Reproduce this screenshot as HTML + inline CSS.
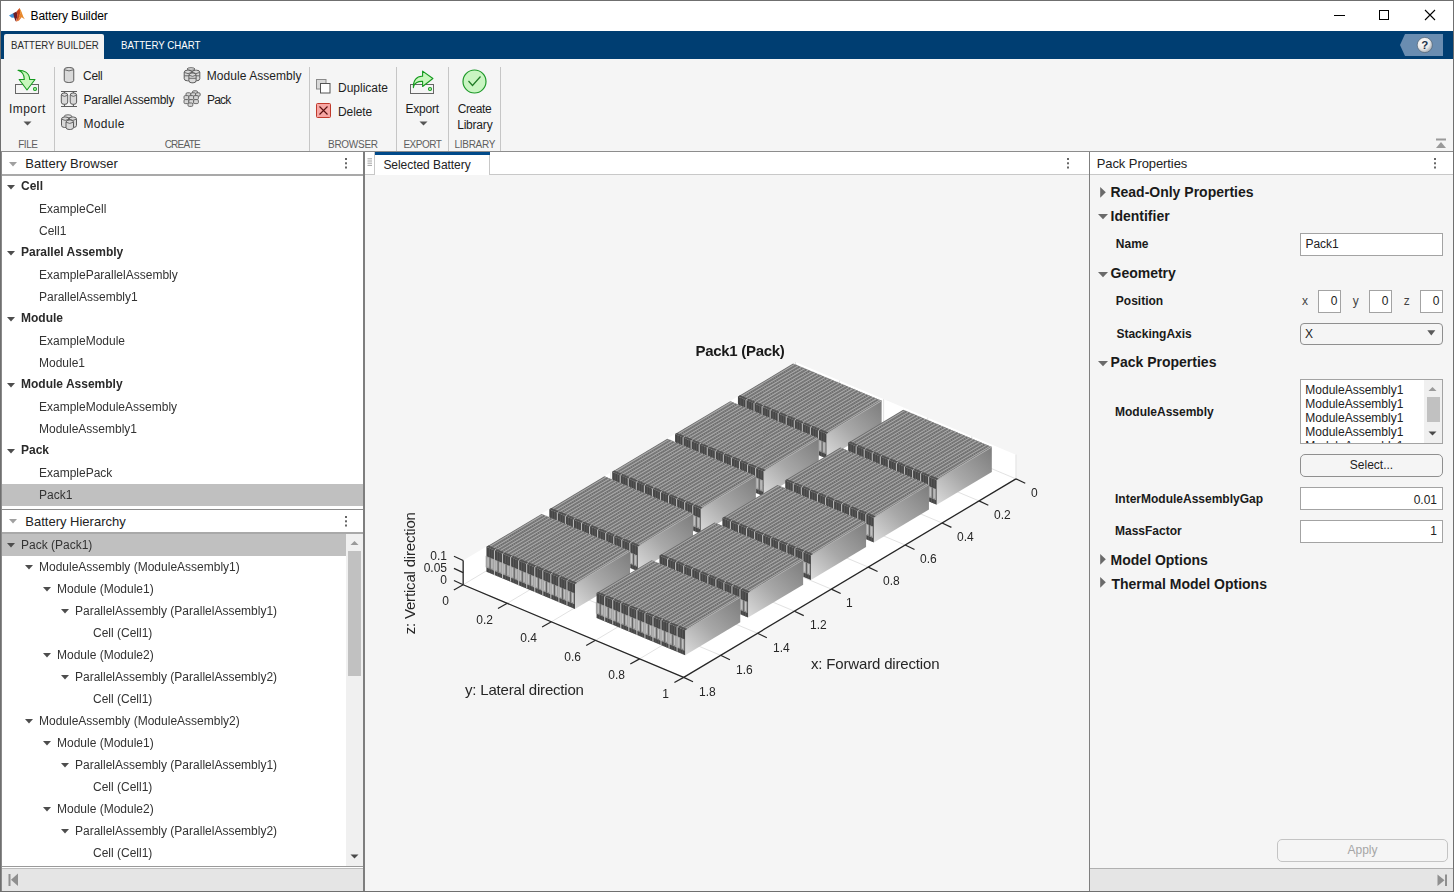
<!DOCTYPE html><html><head><meta charset="utf-8"><style>
html,body{margin:0;padding:0;}
body{width:1454px;height:892px;position:relative;overflow:hidden;background:#fff;font-family:"Liberation Sans", sans-serif;}
.t{position:absolute;white-space:nowrap;font-family:"Liberation Sans", sans-serif;}
svg{overflow:visible}
</style></head><body><div style="position:absolute;left:0px;top:0px;width:1454px;height:31px;background:#ffffff;"></div>
<svg style="position:absolute;left:8px;top:7px;" width="18" height="16" viewBox="0 0 18 16">
<polygon points="1,8.6 5.2,6.2 8.8,8.2 7.2,10.6 3.8,10.8" fill="#3d8fd6"/>
<polygon points="5.2,6.2 8.6,4.4 9.6,9 7.6,14.6 6.2,10.4" fill="#6a1f2a"/>
<polygon points="8.6,4.4 11.6,1 13.4,7.5 10.5,12 8,14.8 9.4,8.5" fill="#c8431c"/>
<polygon points="11.6,1 13.6,5 15.2,9.5 16.8,12.2 13.6,10.2 10.6,12.6 12.6,7.2" fill="#e88a2c"/>
<polygon points="11.6,1 12.8,6.5 10.4,12.3 12.2,5.5" fill="#f4b04a"/>
<polygon points="8,14.8 10.5,12 13.6,10.2 11,13.5" fill="#e06a22"/>
</svg>
<div class="t" style="left:30.5px;top:9.64px;font-size:12px;line-height:12px;font-weight:normal;color:#000;letter-spacing:-0.1px;">Battery Builder</div>
<div style="position:absolute;left:1334px;top:15px;width:11px;height:1px;background:#000;"></div>
<div style="position:absolute;left:1379px;top:10px;width:10px;height:10px;background:transparent;border:1px solid #000;box-sizing:border-box;"></div>
<svg style="position:absolute;left:1424px;top:9px;" width="12" height="12" viewBox="0 0 12 12"><path d="M1,1 L11,11 M11,1 L1,11" stroke="#000" stroke-width="1.1"/></svg>
<div style="position:absolute;left:0px;top:31px;width:1454px;height:28px;background:#003e72;"></div>
<div style="position:absolute;left:4px;top:34px;width:100px;height:25px;background:#f4f4f4;border-radius:2px 2px 0 0;"></div>
<div class="t" style="left:10.9px;top:40.09px;font-size:11px;line-height:11px;font-weight:normal;color:#2b2b2b;transform:scaleX(0.876);transform-origin:0 0;">BATTERY BUILDER</div>
<div class="t" style="left:121px;top:40.09px;font-size:11px;line-height:11px;font-weight:normal;color:#ffffff;transform:scaleX(0.881);transform-origin:0 0;">BATTERY CHART</div>
<svg style="position:absolute;left:1400px;top:34px;" width="44" height="22" viewBox="0 0 44 22"><polygon points="0,11 5,0 43,0 43,22 5,22" fill="#6a8db1"/>
<defs><radialGradient id="hg" cx="0.4" cy="0.35" r="0.7"><stop offset="0" stop-color="#ffffff"/><stop offset="0.6" stop-color="#e8e8e8"/><stop offset="1" stop-color="#9aa3ad"/></radialGradient></defs>
<circle cx="24.8" cy="11" r="7.6" fill="url(#hg)" stroke="#4a5a6a" stroke-width="0.6"/>
<text x="24.8" y="15.2" text-anchor="middle" font-family="Liberation Sans" font-weight="bold" font-size="11.5" fill="#24334a">?</text></svg>
<div style="position:absolute;left:0px;top:59px;width:1454px;height:92px;background:#f5f5f5;"></div>
<div style="position:absolute;left:0px;top:151px;width:1454px;height:1px;background:#8c8c8c;"></div>
<div style="position:absolute;left:54px;top:67px;width:1px;height:84px;background:#c6c6c6;"></div>
<div style="position:absolute;left:309px;top:67px;width:1px;height:84px;background:#c6c6c6;"></div>
<div style="position:absolute;left:396px;top:67px;width:1px;height:84px;background:#c6c6c6;"></div>
<div style="position:absolute;left:448px;top:67px;width:1px;height:84px;background:#c6c6c6;"></div>
<div style="position:absolute;left:500px;top:67px;width:1px;height:84px;background:#c6c6c6;"></div>
<div class="t" style="left:-172.2px;width:400px;text-align:center;top:139.94px;font-size:10px;line-height:10px;font-weight:normal;color:#5e5e5e;letter-spacing:-0.5px;">FILE</div>
<div class="t" style="left:-17.69999999999999px;width:400px;text-align:center;top:139.94px;font-size:10px;line-height:10px;font-weight:normal;color:#5e5e5e;letter-spacing:-0.75px;">CREATE</div>
<div class="t" style="left:152.89999999999998px;width:400px;text-align:center;top:139.94px;font-size:10px;line-height:10px;font-weight:normal;color:#5e5e5e;letter-spacing:-0.27px;">BROWSER</div>
<div class="t" style="left:222.39999999999998px;width:400px;text-align:center;top:139.94px;font-size:10px;line-height:10px;font-weight:normal;color:#5e5e5e;letter-spacing:-0.5px;">EXPORT</div>
<div class="t" style="left:274.8px;width:400px;text-align:center;top:139.94px;font-size:10px;line-height:10px;font-weight:normal;color:#5e5e5e;letter-spacing:-0.32px;">LIBRARY</div>
<svg style="position:absolute;left:14px;top:69px;" width="26" height="26" viewBox="0 0 26 26"><rect x="1.5" y="15.5" width="23" height="9" fill="#f5f5f5" stroke="#666" stroke-width="1"/>
<path d="M4,1.3 C9.5,1 15.5,3.5 15.7,10.5 L21,10.5 L13,21 L5.2,10.5 L10.3,10.5 C10.3,5 8,2.5 4,1.3 Z" fill="#c8f7bd" stroke="#159a1e" stroke-width="1.1" stroke-linejoin="round"/>
<circle cx="21" cy="20" r="1.5" fill="#c8f7bd" stroke="#159a1e" stroke-width="1.1"/></svg>
<div class="t" style="left:-172.7px;width:400px;text-align:center;top:103.04px;font-size:12px;line-height:12px;font-weight:normal;color:#1e1e1e;letter-spacing:0.45px;">Import</div>
<svg style="position:absolute;left:23px;top:121px;" width="10" height="5" viewBox="0 0 10 5"><polygon points="0.5,0.5 8.5,0.5 4.5,4.5" fill="#555"/></svg>
<svg style="position:absolute;left:60px;top:66px;" width="20" height="18" viewBox="0 0 20 18"><rect x="4.25" y="1.50" width="9.50" height="15.00" rx="3.96" ry="2.2" fill="#d9d9d9" stroke="#5c5c5c" stroke-width="1"/><path d="M4.25,3.70 Q9.00,6.10 13.75,3.70" fill="none" stroke="#5c5c5c" stroke-width="0.9"/></svg>
<div class="t" style="left:83.1px;top:70.04px;font-size:12px;line-height:12px;font-weight:normal;color:#1e1e1e;letter-spacing:-0.37px;">Cell</div>
<svg style="position:absolute;left:60px;top:90px;" width="20" height="18" viewBox="0 0 20 18"><path d="M1,1.5 H17 M1,16.5 H17 M4.5,1.5 V3 M13.4,1.5 V3 M4.5,14.3 V16.5 M13.4,14.3 V16.5" stroke="#5c5c5c" stroke-width="1.1"/><rect x="1.30" y="3.00" width="6.40" height="11.30" rx="2.67" ry="2.2" fill="#d9d9d9" stroke="#5c5c5c" stroke-width="1"/><path d="M1.30,5.20 Q4.50,7.60 7.70,5.20" fill="none" stroke="#5c5c5c" stroke-width="0.9"/><rect x="10.20" y="3.00" width="6.40" height="11.30" rx="2.67" ry="2.2" fill="#d9d9d9" stroke="#5c5c5c" stroke-width="1"/><path d="M10.20,5.20 Q13.40,7.60 16.60,5.20" fill="none" stroke="#5c5c5c" stroke-width="0.9"/></svg>
<div class="t" style="left:83.5px;top:94.04px;font-size:12px;line-height:12px;font-weight:normal;color:#1e1e1e;letter-spacing:-0.23px;">Parallel Assembly</div>
<svg style="position:absolute;left:60px;top:112px;" width="20" height="19" viewBox="0 0 20 19"><ellipse cx="8" cy="4.3" rx="3.8" ry="1.5" fill="#e2e2e2" stroke="#6a6a6a"/><rect x="1.50" y="5.00" width="7.50" height="10.50" rx="3.12" ry="2.2" fill="#d9d9d9" stroke="#5c5c5c" stroke-width="1"/><path d="M1.50,7.20 Q5.25,9.60 9.00,7.20" fill="none" stroke="#5c5c5c" stroke-width="0.9"/><rect x="9.00" y="5.00" width="7.50" height="10.50" rx="3.12" ry="2.2" fill="#d9d9d9" stroke="#5c5c5c" stroke-width="1"/><path d="M9.00,7.20 Q12.75,9.60 16.50,7.20" fill="none" stroke="#5c5c5c" stroke-width="0.9"/><rect x="6.00" y="8.00" width="7.50" height="9.50" rx="3.12" ry="2.2" fill="#d9d9d9" stroke="#5c5c5c" stroke-width="1"/><path d="M6.00,10.20 Q9.75,12.60 13.50,10.20" fill="none" stroke="#5c5c5c" stroke-width="0.9"/></svg>
<div class="t" style="left:83.5px;top:117.84px;font-size:12px;line-height:12px;font-weight:normal;color:#1e1e1e;letter-spacing:0.3px;">Module</div>
<svg style="position:absolute;left:183px;top:66px;" width="20" height="19" viewBox="0 0 20 19"><ellipse cx="8" cy="3" rx="3.9" ry="1.3" fill="#e2e2e2" stroke="#6a6a6a"/><rect x="1.20" y="4.20" width="7.60" height="10.60" rx="3.17" ry="2.2" fill="#d9d9d9" stroke="#5c5c5c" stroke-width="1"/><path d="M1.20,6.40 Q5.00,8.80 8.80,6.40" fill="none" stroke="#5c5c5c" stroke-width="0.9"/><rect x="9.20" y="4.20" width="7.60" height="10.60" rx="3.17" ry="2.2" fill="#d9d9d9" stroke="#5c5c5c" stroke-width="1"/><path d="M9.20,6.40 Q13.00,8.80 16.80,6.40" fill="none" stroke="#5c5c5c" stroke-width="0.9"/><path d="M1.2,9.8 H16.8" stroke="#6a6a6a"/><rect x="5.90" y="7.00" width="7.20" height="9.80" rx="3.00" ry="2.2" fill="#d9d9d9" stroke="#5c5c5c" stroke-width="1"/><path d="M5.90,9.20 Q9.50,11.60 13.10,9.20" fill="none" stroke="#5c5c5c" stroke-width="0.9"/><path d="M5.9,12.3 H13.1" stroke="#6a6a6a"/></svg>
<div class="t" style="left:206.8px;top:70.34px;font-size:12px;line-height:12px;font-weight:normal;color:#1e1e1e;letter-spacing:0.05px;">Module Assembly</div>
<svg style="position:absolute;left:183px;top:90px;" width="20" height="18" viewBox="0 0 20 18"><rect x="9.5" y="0.8" width="5" height="3.4" rx="1.2" fill="#d6d6d6" stroke="#5f5f5f" stroke-width="0.9"/><rect x="3" y="2.8" width="4.8" height="3.4" rx="1.2" fill="#d6d6d6" stroke="#5f5f5f" stroke-width="0.9"/><rect x="7.8" y="2.8" width="4.8" height="3.4" rx="1.2" fill="#d6d6d6" stroke="#5f5f5f" stroke-width="0.9"/><rect x="12.6" y="2.8" width="4.6" height="3.4" rx="1.2" fill="#d6d6d6" stroke="#5f5f5f" stroke-width="0.9"/><rect x="1" y="5.6" width="4.8" height="4" rx="1.2" fill="#d6d6d6" stroke="#5f5f5f" stroke-width="0.9"/><rect x="5.8" y="5.6" width="4.8" height="4" rx="1.2" fill="#d6d6d6" stroke="#5f5f5f" stroke-width="0.9"/><rect x="10.6" y="5.6" width="4.8" height="4" rx="1.2" fill="#d6d6d6" stroke="#5f5f5f" stroke-width="0.9"/><rect x="1" y="9.6" width="4.8" height="4" rx="1.2" fill="#d6d6d6" stroke="#5f5f5f" stroke-width="0.9"/><rect x="5.8" y="9.6" width="4.8" height="4" rx="1.2" fill="#d6d6d6" stroke="#5f5f5f" stroke-width="0.9"/><rect x="10.6" y="9.6" width="4.8" height="4" rx="1.2" fill="#d6d6d6" stroke="#5f5f5f" stroke-width="0.9"/><rect x="5" y="13" width="4.8" height="3.4" rx="1.2" fill="#d6d6d6" stroke="#5f5f5f" stroke-width="0.9"/></svg>
<div class="t" style="left:207px;top:94.14px;font-size:12px;line-height:12px;font-weight:normal;color:#1e1e1e;letter-spacing:-0.8px;">Pack</div>
<svg style="position:absolute;left:315px;top:78px;" width="18" height="17" viewBox="0 0 18 17"><rect x="1.5" y="1.5" width="9.5" height="9.5" fill="#d9d9d9" stroke="#8a8a8a"/><rect x="5.5" y="5.5" width="9.5" height="9.5" fill="#fff" stroke="#555"/></svg>
<div class="t" style="left:338px;top:82.34px;font-size:12px;line-height:12px;font-weight:normal;color:#1e1e1e;letter-spacing:0px;">Duplicate</div>
<svg style="position:absolute;left:315px;top:102px;" width="18" height="17" viewBox="0 0 18 17"><rect x="1.5" y="1.5" width="14" height="14" rx="1" fill="#f7a6a3" stroke="#c0392b"/><path d="M4.5,4.5 L12.5,12.5 M12.5,4.5 L4.5,12.5" stroke="#5a1010" stroke-width="1.1"/></svg>
<div class="t" style="left:338px;top:106.24px;font-size:12px;line-height:12px;font-weight:normal;color:#1e1e1e;letter-spacing:-0.1px;">Delete</div>
<svg style="position:absolute;left:409px;top:70px;" width="28" height="26" viewBox="0 0 28 26"><rect x="1.5" y="14.5" width="23" height="9" fill="#f5f5f5" stroke="#666" stroke-width="1"/>
<path d="M4.4,17.7 C4,10 8,6.2 12.8,6.2 L13.6,6.2 L13.6,1.1 L23.9,8.5 L13.6,16.5 L13.6,11.4 L12.8,11.4 C9,11.4 6,13 4.8,15.8 Z" fill="#c8f7bd" stroke="#159a1e" stroke-width="1.1" stroke-linejoin="round"/>
<circle cx="21" cy="19" r="1.5" fill="#c8f7bd" stroke="#159a1e" stroke-width="1.1"/></svg>
<div class="t" style="left:222.2px;width:400px;text-align:center;top:103.24px;font-size:12px;line-height:12px;font-weight:normal;color:#1e1e1e;letter-spacing:-0.2px;">Export</div>
<svg style="position:absolute;left:419px;top:121px;" width="10" height="5" viewBox="0 0 10 5"><polygon points="0.5,0.5 8.5,0.5 4.5,4.5" fill="#555"/></svg>
<svg style="position:absolute;left:461px;top:68px;" width="28" height="28" viewBox="0 0 28 28"><circle cx="13.5" cy="13.5" r="11.5" fill="#c9f5c2" stroke="#1f9a2a" stroke-width="1.2"/><path d="M7.5,13 L11.5,17.5 L19.5,8.5" fill="none" stroke="#1f7a25" stroke-width="1.2"/></svg>
<div class="t" style="left:274.5px;width:400px;text-align:center;top:103.24px;font-size:12px;line-height:12px;font-weight:normal;color:#1e1e1e;letter-spacing:-0.46px;">Create</div>
<div class="t" style="left:274.8px;width:400px;text-align:center;top:118.94px;font-size:12px;line-height:12px;font-weight:normal;color:#1e1e1e;letter-spacing:-0.2px;">Library</div>
<svg style="position:absolute;left:1435px;top:138px;" width="12" height="11" viewBox="0 0 12 11"><rect x="1" y="0.5" width="10" height="2" fill="#9a9a9a"/><polygon points="1,10 11,10 6,4" fill="#9a9a9a"/></svg>
<div style="position:absolute;left:0px;top:152px;width:364px;height:23px;background:#ffffff;"></div>
<div style="position:absolute;left:0px;top:174px;width:364px;height:2px;background:#a9a9a9;"></div>
<svg style="position:absolute;left:9px;top:162px;" width="9" height="5" viewBox="0 0 9 5"><polygon points="0,0 8,0 4,4.6" fill="#a0a0a0"/></svg>
<div class="t" style="left:25.3px;top:156.60px;font-size:13px;line-height:13px;font-weight:normal;color:#222;">Battery Browser</div>
<svg style="position:absolute;left:345px;top:158px;" width="3" height="11" viewBox="0 0 3 11"><rect x="0" y="0" width="2" height="2" fill="#666"/><rect x="0" y="4.3" width="2" height="2" fill="#666"/><rect x="0" y="8.5" width="2" height="2" fill="#666"/></svg>
<div style="position:absolute;left:0px;top:176px;width:364px;height:333px;background:#ffffff;"></div>
<div style="position:absolute;left:2px;top:484px;width:361px;height:22px;background:#c0c0c0;"></div>
<svg style="position:absolute;left:7px;top:184.5px;" width="9" height="5" viewBox="0 0 9 5"><polygon points="0,0 8,0 4,4.5" fill="#4d4d4d"/></svg>
<div class="t" style="left:20.6px;top:180.34px;font-size:12px;line-height:12px;font-weight:bold;color:#2a2a2a;will-change:transform;">Cell</div>
<div class="t" style="left:38.7px;top:202.64px;font-size:12px;line-height:12px;font-weight:normal;color:#333333;will-change:transform;">ExampleCell</div>
<div class="t" style="left:38.7px;top:224.64px;font-size:12px;line-height:12px;font-weight:normal;color:#333333;will-change:transform;">Cell1</div>
<svg style="position:absolute;left:7px;top:250.5px;" width="9" height="5" viewBox="0 0 9 5"><polygon points="0,0 8,0 4,4.5" fill="#4d4d4d"/></svg>
<div class="t" style="left:20.6px;top:246.34px;font-size:12px;line-height:12px;font-weight:bold;color:#2a2a2a;will-change:transform;">Parallel Assembly</div>
<div class="t" style="left:38.7px;top:268.64px;font-size:12px;line-height:12px;font-weight:normal;color:#333333;will-change:transform;">ExampleParallelAssembly</div>
<div class="t" style="left:38.7px;top:290.64px;font-size:12px;line-height:12px;font-weight:normal;color:#333333;will-change:transform;">ParallelAssembly1</div>
<svg style="position:absolute;left:7px;top:316.5px;" width="9" height="5" viewBox="0 0 9 5"><polygon points="0,0 8,0 4,4.5" fill="#4d4d4d"/></svg>
<div class="t" style="left:20.6px;top:312.34px;font-size:12px;line-height:12px;font-weight:bold;color:#2a2a2a;will-change:transform;">Module</div>
<div class="t" style="left:38.7px;top:334.64px;font-size:12px;line-height:12px;font-weight:normal;color:#333333;will-change:transform;">ExampleModule</div>
<div class="t" style="left:38.7px;top:356.64px;font-size:12px;line-height:12px;font-weight:normal;color:#333333;will-change:transform;">Module1</div>
<svg style="position:absolute;left:7px;top:382.5px;" width="9" height="5" viewBox="0 0 9 5"><polygon points="0,0 8,0 4,4.5" fill="#4d4d4d"/></svg>
<div class="t" style="left:20.6px;top:378.34px;font-size:12px;line-height:12px;font-weight:bold;color:#2a2a2a;will-change:transform;">Module Assembly</div>
<div class="t" style="left:38.7px;top:400.64px;font-size:12px;line-height:12px;font-weight:normal;color:#333333;will-change:transform;">ExampleModuleAssembly</div>
<div class="t" style="left:38.7px;top:422.64px;font-size:12px;line-height:12px;font-weight:normal;color:#333333;will-change:transform;">ModuleAssembly1</div>
<svg style="position:absolute;left:7px;top:448.5px;" width="9" height="5" viewBox="0 0 9 5"><polygon points="0,0 8,0 4,4.5" fill="#4d4d4d"/></svg>
<div class="t" style="left:20.6px;top:444.34px;font-size:12px;line-height:12px;font-weight:bold;color:#2a2a2a;will-change:transform;">Pack</div>
<div class="t" style="left:38.7px;top:466.64px;font-size:12px;line-height:12px;font-weight:normal;color:#333333;will-change:transform;">ExamplePack</div>
<div class="t" style="left:38.7px;top:488.64px;font-size:12px;line-height:12px;font-weight:normal;color:#333333;will-change:transform;">Pack1</div>
<div style="position:absolute;left:0px;top:509px;width:364px;height:1px;background:#8c8c8c;"></div>
<div style="position:absolute;left:0px;top:510px;width:364px;height:22px;background:#ffffff;"></div>
<div style="position:absolute;left:0px;top:532px;width:364px;height:2px;background:#a9a9a9;"></div>
<svg style="position:absolute;left:9px;top:519px;" width="9" height="5" viewBox="0 0 9 5"><polygon points="0,0 8,0 4,4.6" fill="#a0a0a0"/></svg>
<div class="t" style="left:25.3px;top:514.50px;font-size:13px;line-height:13px;font-weight:normal;color:#222;">Battery Hierarchy</div>
<svg style="position:absolute;left:345px;top:516px;" width="3" height="11" viewBox="0 0 3 11"><rect x="0" y="0" width="2" height="2" fill="#666"/><rect x="0" y="4.3" width="2" height="2" fill="#666"/><rect x="0" y="8.5" width="2" height="2" fill="#666"/></svg>
<div style="position:absolute;left:0px;top:534px;width:364px;height:332px;background:#ffffff;"></div>
<div style="position:absolute;left:2px;top:534px;width:344px;height:22px;background:#c0c0c0;"></div>
<svg style="position:absolute;left:7px;top:542.5px;" width="9" height="5" viewBox="0 0 9 5"><polygon points="0,0 8,0 4,4.5" fill="#4d4d4d"/></svg>
<div class="t" style="left:20.5px;top:538.64px;font-size:12px;line-height:12px;font-weight:normal;color:#333333;will-change:transform;">Pack (Pack1)</div>
<svg style="position:absolute;left:25px;top:564.5px;" width="9" height="5" viewBox="0 0 9 5"><polygon points="0,0 8,0 4,4.5" fill="#4d4d4d"/></svg>
<div class="t" style="left:38.5px;top:560.64px;font-size:12px;line-height:12px;font-weight:normal;color:#333333;will-change:transform;">ModuleAssembly (ModuleAssembly1)</div>
<svg style="position:absolute;left:43px;top:586.5px;" width="9" height="5" viewBox="0 0 9 5"><polygon points="0,0 8,0 4,4.5" fill="#4d4d4d"/></svg>
<div class="t" style="left:56.5px;top:582.64px;font-size:12px;line-height:12px;font-weight:normal;color:#333333;will-change:transform;">Module (Module1)</div>
<svg style="position:absolute;left:61px;top:608.5px;" width="9" height="5" viewBox="0 0 9 5"><polygon points="0,0 8,0 4,4.5" fill="#4d4d4d"/></svg>
<div class="t" style="left:74.5px;top:604.64px;font-size:12px;line-height:12px;font-weight:normal;color:#333333;will-change:transform;">ParallelAssembly (ParallelAssembly1)</div>
<div class="t" style="left:92.5px;top:626.64px;font-size:12px;line-height:12px;font-weight:normal;color:#333333;will-change:transform;">Cell (Cell1)</div>
<svg style="position:absolute;left:43px;top:652.5px;" width="9" height="5" viewBox="0 0 9 5"><polygon points="0,0 8,0 4,4.5" fill="#4d4d4d"/></svg>
<div class="t" style="left:56.5px;top:648.64px;font-size:12px;line-height:12px;font-weight:normal;color:#333333;will-change:transform;">Module (Module2)</div>
<svg style="position:absolute;left:61px;top:674.5px;" width="9" height="5" viewBox="0 0 9 5"><polygon points="0,0 8,0 4,4.5" fill="#4d4d4d"/></svg>
<div class="t" style="left:74.5px;top:670.64px;font-size:12px;line-height:12px;font-weight:normal;color:#333333;will-change:transform;">ParallelAssembly (ParallelAssembly2)</div>
<div class="t" style="left:92.5px;top:692.64px;font-size:12px;line-height:12px;font-weight:normal;color:#333333;will-change:transform;">Cell (Cell1)</div>
<svg style="position:absolute;left:25px;top:718.5px;" width="9" height="5" viewBox="0 0 9 5"><polygon points="0,0 8,0 4,4.5" fill="#4d4d4d"/></svg>
<div class="t" style="left:38.5px;top:714.64px;font-size:12px;line-height:12px;font-weight:normal;color:#333333;will-change:transform;">ModuleAssembly (ModuleAssembly2)</div>
<svg style="position:absolute;left:43px;top:740.5px;" width="9" height="5" viewBox="0 0 9 5"><polygon points="0,0 8,0 4,4.5" fill="#4d4d4d"/></svg>
<div class="t" style="left:56.5px;top:736.64px;font-size:12px;line-height:12px;font-weight:normal;color:#333333;will-change:transform;">Module (Module1)</div>
<svg style="position:absolute;left:61px;top:762.5px;" width="9" height="5" viewBox="0 0 9 5"><polygon points="0,0 8,0 4,4.5" fill="#4d4d4d"/></svg>
<div class="t" style="left:74.5px;top:758.64px;font-size:12px;line-height:12px;font-weight:normal;color:#333333;will-change:transform;">ParallelAssembly (ParallelAssembly1)</div>
<div class="t" style="left:92.5px;top:780.64px;font-size:12px;line-height:12px;font-weight:normal;color:#333333;will-change:transform;">Cell (Cell1)</div>
<svg style="position:absolute;left:43px;top:806.5px;" width="9" height="5" viewBox="0 0 9 5"><polygon points="0,0 8,0 4,4.5" fill="#4d4d4d"/></svg>
<div class="t" style="left:56.5px;top:802.64px;font-size:12px;line-height:12px;font-weight:normal;color:#333333;will-change:transform;">Module (Module2)</div>
<svg style="position:absolute;left:61px;top:828.5px;" width="9" height="5" viewBox="0 0 9 5"><polygon points="0,0 8,0 4,4.5" fill="#4d4d4d"/></svg>
<div class="t" style="left:74.5px;top:824.64px;font-size:12px;line-height:12px;font-weight:normal;color:#333333;will-change:transform;">ParallelAssembly (ParallelAssembly2)</div>
<div class="t" style="left:92.5px;top:846.64px;font-size:12px;line-height:12px;font-weight:normal;color:#333333;will-change:transform;">Cell (Cell1)</div>
<div style="position:absolute;left:346px;top:534px;width:17px;height:332px;background:#f0f0f0;"></div>
<div style="position:absolute;left:348px;top:551px;width:13px;height:125px;background:#c1c1c1;"></div>
<svg style="position:absolute;left:350px;top:540px;" width="10" height="6" viewBox="0 0 10 6"><polygon points="0.5,5 8.5,5 4.5,1" fill="#9a9a9a"/></svg>
<svg style="position:absolute;left:350px;top:854px;" width="10" height="6" viewBox="0 0 10 6"><polygon points="0.5,0.5 8.5,0.5 4.5,4.5" fill="#4a4a4a"/></svg>
<div style="position:absolute;left:0px;top:866px;width:364px;height:1px;background:#9a9a9a;"></div>
<div style="position:absolute;left:0px;top:867px;width:364px;height:1px;background:#ffffff;"></div>
<div style="position:absolute;left:0px;top:868px;width:364px;height:1px;background:#bdbdbd;"></div>
<div style="position:absolute;left:0px;top:869px;width:364px;height:22px;background:#e5e5e5;"></div>
<svg style="position:absolute;left:8px;top:873px;" width="11" height="14" viewBox="0 0 11 14"><rect x="0.5" y="1" width="2" height="12" fill="#8f8f8f"/><polygon points="10,0.5 10,13 3,6.8" fill="#8f8f8f"/></svg>
<div style="position:absolute;left:363px;top:152px;width:2px;height:740px;background:#7e7e7e;"></div>
<div style="position:absolute;left:1px;top:152px;width:1px;height:740px;background:#8a8a8a;"></div>
<div style="position:absolute;left:365px;top:152px;width:724px;height:23px;background:#ffffff;"></div>
<div style="position:absolute;left:365px;top:174px;width:724px;height:1px;background:#c8c8c8;"></div>
<div style="position:absolute;left:365px;top:152px;width:10px;height:23px;background:#ffffff;box-sizing:border-box;border-right:1px solid #c8c8c8;border-bottom:1px solid #c8c8c8;"></div>
<svg style="position:absolute;left:367px;top:158px;" width="6" height="9" viewBox="0 0 6 9"><path d="M0.5,0.8 H5 M0.5,3 H5 M0.5,5.2 H5 M0.5,7.4 H5" stroke="#8a8a8a" stroke-width="0.8"/></svg>
<div style="position:absolute;left:375px;top:152px;width:115px;height:23px;background:#ffffff;box-sizing:border-box;border-right:1px solid #c8c8c8;"></div>
<div style="position:absolute;left:375px;top:152px;width:115px;height:3px;background:#004a8a;"></div>
<div class="t" style="left:383.4px;top:159.14px;font-size:12px;line-height:12px;font-weight:normal;color:#222;letter-spacing:-0.05px;">Selected Battery</div>
<svg style="position:absolute;left:1067px;top:158px;" width="3" height="11" viewBox="0 0 3 11"><rect x="0" y="0" width="2" height="2" fill="#666"/><rect x="0" y="4.3" width="2" height="2" fill="#666"/><rect x="0" y="8.5" width="2" height="2" fill="#666"/></svg>
<div style="position:absolute;left:365px;top:175px;width:724px;height:716px;background:#f5f5f5;"></div>
<div style="position:absolute;left:1089px;top:152px;width:1px;height:740px;background:#7f7f7f;"></div>
<div style="position:absolute;left:1090px;top:152px;width:363px;height:22px;background:#ffffff;"></div>
<div style="position:absolute;left:1090px;top:174px;width:363px;height:1px;background:#c8c8c8;"></div>
<div class="t" style="left:1096.7px;top:157.00px;font-size:13px;line-height:13px;font-weight:normal;color:#222;letter-spacing:-0.08px;">Pack Properties</div>
<svg style="position:absolute;left:1434px;top:158px;" width="3" height="11" viewBox="0 0 3 11"><rect x="0" y="0" width="2" height="2" fill="#666"/><rect x="0" y="4.3" width="2" height="2" fill="#666"/><rect x="0" y="8.5" width="2" height="2" fill="#666"/></svg>
<div style="position:absolute;left:1090px;top:175px;width:363px;height:693px;background:#f5f5f5;"></div>
<svg style="position:absolute;left:1099.8px;top:187.2px;" width="7" height="12" viewBox="0 0 7 12"><polygon points="0.2,0 5.8,5.35 0.2,10.7" fill="#6a6a6a"/></svg>
<div class="t" style="left:1110.4px;top:184.65px;font-size:14px;line-height:14px;font-weight:bold;color:#1a1a1a;">Read-Only Properties</div>
<svg style="position:absolute;left:1098px;top:214px;" width="11" height="6" viewBox="0 0 11 6"><polygon points="0,0 10,0 5,5.3" fill="#6a6a6a"/></svg>
<div class="t" style="left:1110.5px;top:209.05px;font-size:14px;line-height:14px;font-weight:bold;color:#1a1a1a;">Identifier</div>
<div class="t" style="left:1115.8px;top:238.04px;font-size:12px;line-height:12px;font-weight:bold;color:#1a1a1a;">Name</div>
<div style="position:absolute;left:1300px;top:233px;width:143px;height:23px;background:#fff;box-sizing:border-box;border:1px solid #a3a3a3;border-radius:0px;"></div>
<div class="t" style="left:1305.4px;top:237.54px;font-size:12px;line-height:12px;font-weight:normal;color:#222;">Pack1</div>
<svg style="position:absolute;left:1098px;top:271.5px;" width="11" height="6" viewBox="0 0 11 6"><polygon points="0,0 10,0 5,5.3" fill="#6a6a6a"/></svg>
<div class="t" style="left:1110.5px;top:265.65px;font-size:14px;line-height:14px;font-weight:bold;color:#1a1a1a;">Geometry</div>
<div class="t" style="left:1115.8px;top:294.64px;font-size:12px;line-height:12px;font-weight:bold;color:#1a1a1a;">Position</div>
<div class="t" style="left:1301.9px;top:294.74px;font-size:12px;line-height:12px;font-weight:normal;color:#444;">x</div>
<div class="t" style="left:1352.8px;top:294.74px;font-size:12px;line-height:12px;font-weight:normal;color:#444;">y</div>
<div class="t" style="left:1403.8px;top:294.74px;font-size:12px;line-height:12px;font-weight:normal;color:#444;">z</div>
<div style="position:absolute;left:1318px;top:290px;width:23px;height:23px;background:#fff;box-sizing:border-box;border:1px solid #a3a3a3;border-radius:0px;"></div>
<div class="t" style="left:937.5px;width:400px;text-align:right;top:294.74px;font-size:12px;line-height:12px;font-weight:normal;color:#222;">0</div>
<div style="position:absolute;left:1369px;top:290px;width:23px;height:23px;background:#fff;box-sizing:border-box;border:1px solid #a3a3a3;border-radius:0px;"></div>
<div class="t" style="left:988.5px;width:400px;text-align:right;top:294.74px;font-size:12px;line-height:12px;font-weight:normal;color:#222;">0</div>
<div style="position:absolute;left:1420px;top:290px;width:23px;height:23px;background:#fff;box-sizing:border-box;border:1px solid #a3a3a3;border-radius:0px;"></div>
<div class="t" style="left:1039.5px;width:400px;text-align:right;top:294.74px;font-size:12px;line-height:12px;font-weight:normal;color:#222;">0</div>
<div class="t" style="left:1116.4px;top:327.84px;font-size:12px;line-height:12px;font-weight:bold;color:#1a1a1a;">StackingAxis</div>
<div style="position:absolute;left:1300px;top:323px;width:143px;height:22px;background:#f5f5f5;box-sizing:border-box;border:1px solid #8f8f8f;border-radius:4px;"></div>
<div class="t" style="left:1305px;top:327.64px;font-size:12px;line-height:12px;font-weight:normal;color:#222;">X</div>
<svg style="position:absolute;left:1427px;top:330px;" width="9" height="7" viewBox="0 0 9 7"><polygon points="0.3,0.3 8.3,0.3 4.3,5.6" fill="#5a5a5a"/></svg>
<svg style="position:absolute;left:1098px;top:360.5px;" width="11" height="6" viewBox="0 0 11 6"><polygon points="0,0 10,0 5,5.3" fill="#6a6a6a"/></svg>
<div class="t" style="left:1110.6px;top:355.15px;font-size:14px;line-height:14px;font-weight:bold;color:#1a1a1a;">Pack Properties</div>
<div class="t" style="left:1115px;top:405.74px;font-size:12px;line-height:12px;font-weight:bold;color:#1a1a1a;">ModuleAssembly</div>
<div style="position:absolute;left:1300px;top:379px;width:143px;height:65px;background:#fff;box-sizing:border-box;border:1px solid #a3a3a3;border-radius:0px;"></div>
<div style="position:absolute;left:1301px;top:380px;width:123px;height:63px;overflow:hidden;"><div class="t" style="left:4.3px;top:3.64px;font-size:12px;line-height:12px;color:#222">ModuleAssembly1</div><div class="t" style="left:4.3px;top:17.64px;font-size:12px;line-height:12px;color:#222">ModuleAssembly1</div><div class="t" style="left:4.3px;top:31.64px;font-size:12px;line-height:12px;color:#222">ModuleAssembly1</div><div class="t" style="left:4.3px;top:45.64px;font-size:12px;line-height:12px;color:#222">ModuleAssembly1</div><div class="t" style="left:4.3px;top:59.64px;font-size:12px;line-height:12px;color:#222">ModuleAssembly1</div></div>
<div style="position:absolute;left:1424px;top:380px;width:18px;height:63px;background:#f0f0f0;"></div>
<div style="position:absolute;left:1427px;top:397px;width:13px;height:25px;background:#c1c1c1;"></div>
<svg style="position:absolute;left:1428px;top:386px;" width="10" height="6" viewBox="0 0 10 6"><polygon points="0.5,5 8.5,5 4.5,1" fill="#9a9a9a"/></svg>
<svg style="position:absolute;left:1428px;top:431px;" width="10" height="6" viewBox="0 0 10 6"><polygon points="0.5,0.5 8.5,0.5 4.5,4.5" fill="#4a4a4a"/></svg>
<div style="position:absolute;left:1300px;top:454px;width:143px;height:23px;background:#f5f5f5;box-sizing:border-box;border:1px solid #8f8f8f;border-radius:5px;"></div>
<div class="t" style="left:1171.5px;width:400px;text-align:center;top:458.74px;font-size:12px;line-height:12px;font-weight:normal;color:#222;">Select...</div>
<div class="t" style="left:1115px;top:492.84px;font-size:12px;line-height:12px;font-weight:bold;color:#1a1a1a;">InterModuleAssemblyGap</div>
<div style="position:absolute;left:1300px;top:487px;width:143px;height:23px;background:#fff;box-sizing:border-box;border:1px solid #a3a3a3;border-radius:0px;"></div>
<div class="t" style="left:1037px;width:400px;text-align:right;top:493.54px;font-size:12px;line-height:12px;font-weight:normal;color:#222;">0.01</div>
<div class="t" style="left:1115px;top:524.84px;font-size:12px;line-height:12px;font-weight:bold;color:#1a1a1a;">MassFactor</div>
<div style="position:absolute;left:1300px;top:520px;width:143px;height:23px;background:#fff;box-sizing:border-box;border:1px solid #a3a3a3;border-radius:0px;"></div>
<div class="t" style="left:1037px;width:400px;text-align:right;top:525.34px;font-size:12px;line-height:12px;font-weight:normal;color:#222;">1</div>
<svg style="position:absolute;left:1099.8px;top:553.5px;" width="7" height="12" viewBox="0 0 7 12"><polygon points="0.2,0 5.8,5.35 0.2,10.7" fill="#6a6a6a"/></svg>
<div class="t" style="left:1110.6px;top:552.55px;font-size:14px;line-height:14px;font-weight:bold;color:#1a1a1a;">Model Options</div>
<svg style="position:absolute;left:1099.8px;top:577.4000000000001px;" width="7" height="12" viewBox="0 0 7 12"><polygon points="0.2,0 5.8,5.35 0.2,10.7" fill="#6a6a6a"/></svg>
<div class="t" style="left:1111.4px;top:576.55px;font-size:14px;line-height:14px;font-weight:bold;color:#1a1a1a;">Thermal Model Options</div>
<div style="position:absolute;left:1277px;top:839px;width:171px;height:23px;background:#f5f5f5;box-sizing:border-box;border:1px solid #c4c4c4;border-radius:5px;"></div>
<div class="t" style="left:1162.5px;width:400px;text-align:center;top:843.54px;font-size:12px;line-height:12px;font-weight:normal;color:#a6a6a6;">Apply</div>
<div style="position:absolute;left:1090px;top:868px;width:363px;height:1px;background:#b0b0b0;"></div>
<div style="position:absolute;left:1090px;top:869px;width:363px;height:22px;background:#e5e5e5;"></div>
<svg style="position:absolute;left:1437px;top:874px;" width="11" height="13" viewBox="0 0 11 13"><polygon points="0.5,0.5 7.5,6.3 0.5,12" fill="#8f8f8f"/><rect x="8" y="0.5" width="2" height="11.5" fill="#8f8f8f"/></svg>
<svg style="position:absolute;left:0;top:0;" width="1454" height="892" viewBox="0 0 1454 892"><defs>
</defs>
<polygon points="795.40,386.22 463.17,584.75 683.70,677.38 1015.94,478.85" fill="#ffffff"/>
<polygon points="795.40,386.22 463.17,584.75 463.17,560.54 795.40,362.00" fill="#ffffff"/>
<polygon points="795.40,386.22 1015.94,478.85 1015.94,454.64 795.40,362.00" fill="#ffffff"/>
<line x1="795.40" y1="386.22" x2="1015.94" y2="478.85" stroke="#e2e2e2" stroke-width="1"/>
<line x1="795.40" y1="386.22" x2="795.40" y2="362.00" stroke="#e2e2e2" stroke-width="1"/>
<line x1="758.49" y1="408.28" x2="979.02" y2="500.91" stroke="#e2e2e2" stroke-width="1"/>
<line x1="758.49" y1="408.28" x2="758.49" y2="384.06" stroke="#e2e2e2" stroke-width="1"/>
<line x1="721.57" y1="430.33" x2="942.11" y2="522.97" stroke="#e2e2e2" stroke-width="1"/>
<line x1="721.57" y1="430.33" x2="721.57" y2="406.12" stroke="#e2e2e2" stroke-width="1"/>
<line x1="684.66" y1="452.39" x2="905.19" y2="545.03" stroke="#e2e2e2" stroke-width="1"/>
<line x1="684.66" y1="452.39" x2="684.66" y2="428.18" stroke="#e2e2e2" stroke-width="1"/>
<line x1="647.74" y1="474.45" x2="868.28" y2="567.09" stroke="#e2e2e2" stroke-width="1"/>
<line x1="647.74" y1="474.45" x2="647.74" y2="450.24" stroke="#e2e2e2" stroke-width="1"/>
<line x1="610.83" y1="496.51" x2="831.36" y2="589.15" stroke="#e2e2e2" stroke-width="1"/>
<line x1="610.83" y1="496.51" x2="610.83" y2="472.30" stroke="#e2e2e2" stroke-width="1"/>
<line x1="573.91" y1="518.57" x2="794.45" y2="611.21" stroke="#e2e2e2" stroke-width="1"/>
<line x1="573.91" y1="518.57" x2="573.91" y2="494.36" stroke="#e2e2e2" stroke-width="1"/>
<line x1="537.00" y1="540.63" x2="757.53" y2="633.27" stroke="#e2e2e2" stroke-width="1"/>
<line x1="537.00" y1="540.63" x2="537.00" y2="516.42" stroke="#e2e2e2" stroke-width="1"/>
<line x1="500.08" y1="562.69" x2="720.62" y2="655.33" stroke="#e2e2e2" stroke-width="1"/>
<line x1="500.08" y1="562.69" x2="500.08" y2="538.48" stroke="#e2e2e2" stroke-width="1"/>
<line x1="463.17" y1="584.75" x2="683.70" y2="677.38" stroke="#e2e2e2" stroke-width="1"/>
<line x1="463.17" y1="584.75" x2="463.17" y2="560.54" stroke="#e2e2e2" stroke-width="1"/>
<line x1="795.40" y1="386.22" x2="463.17" y2="584.75" stroke="#e2e2e2" stroke-width="1"/>
<line x1="795.40" y1="386.22" x2="795.40" y2="362.00" stroke="#e2e2e2" stroke-width="1"/>
<line x1="839.51" y1="404.74" x2="507.28" y2="603.28" stroke="#e2e2e2" stroke-width="1"/>
<line x1="839.51" y1="404.74" x2="839.51" y2="380.53" stroke="#e2e2e2" stroke-width="1"/>
<line x1="883.62" y1="423.27" x2="551.38" y2="621.80" stroke="#e2e2e2" stroke-width="1"/>
<line x1="883.62" y1="423.27" x2="883.62" y2="399.06" stroke="#e2e2e2" stroke-width="1"/>
<line x1="927.72" y1="441.80" x2="595.49" y2="640.33" stroke="#e2e2e2" stroke-width="1"/>
<line x1="927.72" y1="441.80" x2="927.72" y2="417.58" stroke="#e2e2e2" stroke-width="1"/>
<line x1="971.83" y1="460.32" x2="639.60" y2="658.86" stroke="#e2e2e2" stroke-width="1"/>
<line x1="971.83" y1="460.32" x2="971.83" y2="436.11" stroke="#e2e2e2" stroke-width="1"/>
<line x1="1015.94" y1="478.85" x2="683.70" y2="677.38" stroke="#e2e2e2" stroke-width="1"/>
<line x1="1015.94" y1="478.85" x2="1015.94" y2="454.64" stroke="#e2e2e2" stroke-width="1"/>
<linearGradient id="g0" gradientUnits="userSpaceOnUse" x1="826.5" y1="458.6" x2="881.6" y2="400.8"><stop offset="0" stop-color="#dcdcdc"/><stop offset="0.45" stop-color="#a8a8a8"/><stop offset="1" stop-color="#7c7c7c"/></linearGradient>
<polygon points="826.51,458.58 881.63,425.65 881.63,400.78 826.51,433.72" fill="url(#g0)"/>
<polygon points="737.95,421.38 826.51,458.58 826.51,433.72 737.95,396.51" fill="#464646"/>
<polygon points="737.21,416.85 825.78,454.05 825.78,442.61 737.21,405.41" fill="#a0a0a0"/>
<line x1="740.85" y1="406.19" x2="740.85" y2="397.73" stroke="#646464" stroke-width="0.6"/>
<line x1="740.85" y1="422.60" x2="740.85" y2="417.62" stroke="#646464" stroke-width="0.6"/>
<line x1="743.42" y1="407.27" x2="743.42" y2="398.81" stroke="#646464" stroke-width="0.6"/>
<line x1="743.42" y1="423.68" x2="743.42" y2="418.71" stroke="#646464" stroke-width="0.6"/>
<line x1="739.63" y1="416.37" x2="739.63" y2="407.42" stroke="#c6c6c6" stroke-width="1.0"/>
<line x1="743.49" y1="417.99" x2="743.49" y2="409.04" stroke="#c6c6c6" stroke-width="1.0"/>
<line x1="741.64" y1="418.71" x2="741.64" y2="407.27" stroke="#585858" stroke-width="0.9"/>
<line x1="748.90" y1="409.57" x2="748.90" y2="401.11" stroke="#646464" stroke-width="0.6"/>
<line x1="748.90" y1="425.98" x2="748.90" y2="421.01" stroke="#646464" stroke-width="0.6"/>
<line x1="751.48" y1="410.65" x2="751.48" y2="402.20" stroke="#646464" stroke-width="0.6"/>
<line x1="751.48" y1="427.06" x2="751.48" y2="422.09" stroke="#646464" stroke-width="0.6"/>
<line x1="747.68" y1="419.75" x2="747.68" y2="410.80" stroke="#c6c6c6" stroke-width="1.0"/>
<line x1="751.54" y1="421.38" x2="751.54" y2="412.42" stroke="#c6c6c6" stroke-width="1.0"/>
<line x1="749.69" y1="422.09" x2="749.69" y2="410.65" stroke="#585858" stroke-width="0.9"/>
<line x1="746.00" y1="424.76" x2="746.00" y2="399.90" stroke="#b8b8b8" stroke-width="1.1"/>
<line x1="756.95" y1="412.95" x2="756.95" y2="404.50" stroke="#646464" stroke-width="0.6"/>
<line x1="756.95" y1="429.36" x2="756.95" y2="424.39" stroke="#646464" stroke-width="0.6"/>
<line x1="759.53" y1="414.03" x2="759.53" y2="405.58" stroke="#646464" stroke-width="0.6"/>
<line x1="759.53" y1="430.44" x2="759.53" y2="425.47" stroke="#646464" stroke-width="0.6"/>
<line x1="755.73" y1="423.13" x2="755.73" y2="414.18" stroke="#c6c6c6" stroke-width="1.0"/>
<line x1="759.59" y1="424.76" x2="759.59" y2="415.81" stroke="#c6c6c6" stroke-width="1.0"/>
<line x1="757.74" y1="425.47" x2="757.74" y2="414.03" stroke="#585858" stroke-width="0.9"/>
<line x1="754.05" y1="428.14" x2="754.05" y2="403.28" stroke="#b8b8b8" stroke-width="1.1"/>
<line x1="765.00" y1="416.33" x2="765.00" y2="407.88" stroke="#646464" stroke-width="0.6"/>
<line x1="765.00" y1="432.74" x2="765.00" y2="427.77" stroke="#646464" stroke-width="0.6"/>
<line x1="767.58" y1="417.41" x2="767.58" y2="408.96" stroke="#646464" stroke-width="0.6"/>
<line x1="767.58" y1="433.83" x2="767.58" y2="428.85" stroke="#646464" stroke-width="0.6"/>
<line x1="763.78" y1="426.52" x2="763.78" y2="417.56" stroke="#c6c6c6" stroke-width="1.0"/>
<line x1="767.65" y1="428.14" x2="767.65" y2="419.19" stroke="#c6c6c6" stroke-width="1.0"/>
<line x1="765.79" y1="428.85" x2="765.79" y2="417.42" stroke="#585858" stroke-width="0.9"/>
<line x1="762.10" y1="431.53" x2="762.10" y2="406.66" stroke="#b8b8b8" stroke-width="1.1"/>
<line x1="773.05" y1="419.71" x2="773.05" y2="411.26" stroke="#646464" stroke-width="0.6"/>
<line x1="773.05" y1="436.12" x2="773.05" y2="431.15" stroke="#646464" stroke-width="0.6"/>
<line x1="775.63" y1="420.80" x2="775.63" y2="412.34" stroke="#646464" stroke-width="0.6"/>
<line x1="775.63" y1="437.21" x2="775.63" y2="432.23" stroke="#646464" stroke-width="0.6"/>
<line x1="771.83" y1="429.90" x2="771.83" y2="420.95" stroke="#c6c6c6" stroke-width="1.0"/>
<line x1="775.70" y1="431.52" x2="775.70" y2="422.57" stroke="#c6c6c6" stroke-width="1.0"/>
<line x1="773.84" y1="432.24" x2="773.84" y2="420.80" stroke="#585858" stroke-width="0.9"/>
<line x1="770.15" y1="434.91" x2="770.15" y2="410.04" stroke="#b8b8b8" stroke-width="1.1"/>
<line x1="781.10" y1="423.10" x2="781.10" y2="414.64" stroke="#646464" stroke-width="0.6"/>
<line x1="781.10" y1="439.51" x2="781.10" y2="434.53" stroke="#646464" stroke-width="0.6"/>
<line x1="783.68" y1="424.18" x2="783.68" y2="415.72" stroke="#646464" stroke-width="0.6"/>
<line x1="783.68" y1="440.59" x2="783.68" y2="435.62" stroke="#646464" stroke-width="0.6"/>
<line x1="779.88" y1="433.28" x2="779.88" y2="424.33" stroke="#c6c6c6" stroke-width="1.0"/>
<line x1="783.75" y1="434.90" x2="783.75" y2="425.95" stroke="#c6c6c6" stroke-width="1.0"/>
<line x1="781.90" y1="435.62" x2="781.90" y2="424.18" stroke="#585858" stroke-width="0.9"/>
<line x1="778.21" y1="438.29" x2="778.21" y2="413.42" stroke="#b8b8b8" stroke-width="1.1"/>
<line x1="789.16" y1="426.48" x2="789.16" y2="418.02" stroke="#646464" stroke-width="0.6"/>
<line x1="789.16" y1="442.89" x2="789.16" y2="437.92" stroke="#646464" stroke-width="0.6"/>
<line x1="791.73" y1="427.56" x2="791.73" y2="419.11" stroke="#646464" stroke-width="0.6"/>
<line x1="791.73" y1="443.97" x2="791.73" y2="439.00" stroke="#646464" stroke-width="0.6"/>
<line x1="787.93" y1="436.66" x2="787.93" y2="427.71" stroke="#c6c6c6" stroke-width="1.0"/>
<line x1="791.80" y1="438.29" x2="791.80" y2="429.33" stroke="#c6c6c6" stroke-width="1.0"/>
<line x1="789.95" y1="439.00" x2="789.95" y2="427.56" stroke="#585858" stroke-width="0.9"/>
<line x1="786.26" y1="441.67" x2="786.26" y2="416.81" stroke="#b8b8b8" stroke-width="1.1"/>
<line x1="797.21" y1="429.86" x2="797.21" y2="421.41" stroke="#646464" stroke-width="0.6"/>
<line x1="797.21" y1="446.27" x2="797.21" y2="441.30" stroke="#646464" stroke-width="0.6"/>
<line x1="799.78" y1="430.94" x2="799.78" y2="422.49" stroke="#646464" stroke-width="0.6"/>
<line x1="799.78" y1="447.35" x2="799.78" y2="442.38" stroke="#646464" stroke-width="0.6"/>
<line x1="795.99" y1="440.04" x2="795.99" y2="431.09" stroke="#c6c6c6" stroke-width="1.0"/>
<line x1="799.85" y1="441.67" x2="799.85" y2="432.72" stroke="#c6c6c6" stroke-width="1.0"/>
<line x1="798.00" y1="442.38" x2="798.00" y2="430.94" stroke="#585858" stroke-width="0.9"/>
<line x1="794.31" y1="445.05" x2="794.31" y2="420.19" stroke="#b8b8b8" stroke-width="1.1"/>
<line x1="805.26" y1="433.24" x2="805.26" y2="424.79" stroke="#646464" stroke-width="0.6"/>
<line x1="805.26" y1="449.65" x2="805.26" y2="444.68" stroke="#646464" stroke-width="0.6"/>
<line x1="807.84" y1="434.32" x2="807.84" y2="425.87" stroke="#646464" stroke-width="0.6"/>
<line x1="807.84" y1="450.74" x2="807.84" y2="445.76" stroke="#646464" stroke-width="0.6"/>
<line x1="804.04" y1="443.43" x2="804.04" y2="434.47" stroke="#c6c6c6" stroke-width="1.0"/>
<line x1="807.90" y1="445.05" x2="807.90" y2="436.10" stroke="#c6c6c6" stroke-width="1.0"/>
<line x1="806.05" y1="445.76" x2="806.05" y2="434.33" stroke="#585858" stroke-width="0.9"/>
<line x1="802.36" y1="448.44" x2="802.36" y2="423.57" stroke="#b8b8b8" stroke-width="1.1"/>
<line x1="813.31" y1="436.62" x2="813.31" y2="428.17" stroke="#646464" stroke-width="0.6"/>
<line x1="813.31" y1="453.03" x2="813.31" y2="448.06" stroke="#646464" stroke-width="0.6"/>
<line x1="815.89" y1="437.71" x2="815.89" y2="429.25" stroke="#646464" stroke-width="0.6"/>
<line x1="815.89" y1="454.12" x2="815.89" y2="449.14" stroke="#646464" stroke-width="0.6"/>
<line x1="812.09" y1="446.81" x2="812.09" y2="437.86" stroke="#c6c6c6" stroke-width="1.0"/>
<line x1="815.95" y1="448.43" x2="815.95" y2="439.48" stroke="#c6c6c6" stroke-width="1.0"/>
<line x1="814.10" y1="449.15" x2="814.10" y2="437.71" stroke="#585858" stroke-width="0.9"/>
<line x1="810.41" y1="451.82" x2="810.41" y2="426.95" stroke="#b8b8b8" stroke-width="1.1"/>
<line x1="821.36" y1="440.01" x2="821.36" y2="431.55" stroke="#646464" stroke-width="0.6"/>
<line x1="821.36" y1="456.42" x2="821.36" y2="451.44" stroke="#646464" stroke-width="0.6"/>
<line x1="823.94" y1="441.09" x2="823.94" y2="432.63" stroke="#646464" stroke-width="0.6"/>
<line x1="823.94" y1="457.50" x2="823.94" y2="452.53" stroke="#646464" stroke-width="0.6"/>
<line x1="820.14" y1="450.19" x2="820.14" y2="441.24" stroke="#c6c6c6" stroke-width="1.0"/>
<line x1="824.00" y1="451.81" x2="824.00" y2="442.86" stroke="#c6c6c6" stroke-width="1.0"/>
<line x1="822.15" y1="452.53" x2="822.15" y2="441.09" stroke="#585858" stroke-width="0.9"/>
<line x1="818.46" y1="455.20" x2="818.46" y2="430.33" stroke="#b8b8b8" stroke-width="1.1"/>
<polygon points="793.06,363.58 737.95,396.51 826.51,433.72 881.63,400.78" fill="#6c6c6c"/>
<line x1="794.77" y1="364.29" x2="739.65" y2="397.23" stroke="#a8a8a8" stroke-width="1.2"/>
<line x1="796.47" y1="365.01" x2="741.36" y2="397.94" stroke="#8e8e8e" stroke-width="0.9" stroke-dasharray="1.1 1.3"/>
<line x1="798.17" y1="365.73" x2="743.06" y2="398.66" stroke="#a8a8a8" stroke-width="1.2"/>
<line x1="799.88" y1="366.44" x2="744.76" y2="399.38" stroke="#8e8e8e" stroke-width="0.9" stroke-dasharray="1.1 1.3"/>
<line x1="801.58" y1="367.16" x2="746.46" y2="400.09" stroke="#a8a8a8" stroke-width="1.2"/>
<line x1="803.28" y1="367.87" x2="748.17" y2="400.81" stroke="#8e8e8e" stroke-width="0.9" stroke-dasharray="1.1 1.3"/>
<line x1="804.99" y1="368.59" x2="749.87" y2="401.52" stroke="#a8a8a8" stroke-width="1.2"/>
<line x1="806.69" y1="369.30" x2="751.57" y2="402.24" stroke="#8e8e8e" stroke-width="0.9" stroke-dasharray="1.1 1.3"/>
<line x1="808.39" y1="370.02" x2="753.28" y2="402.95" stroke="#a8a8a8" stroke-width="1.2"/>
<line x1="810.09" y1="370.73" x2="754.98" y2="403.67" stroke="#8e8e8e" stroke-width="0.9" stroke-dasharray="1.1 1.3"/>
<line x1="811.80" y1="371.45" x2="756.68" y2="404.38" stroke="#a8a8a8" stroke-width="1.2"/>
<line x1="813.50" y1="372.16" x2="758.39" y2="405.10" stroke="#8e8e8e" stroke-width="0.9" stroke-dasharray="1.1 1.3"/>
<line x1="815.20" y1="372.88" x2="760.09" y2="405.81" stroke="#a8a8a8" stroke-width="1.2"/>
<line x1="816.91" y1="373.59" x2="761.79" y2="406.53" stroke="#8e8e8e" stroke-width="0.9" stroke-dasharray="1.1 1.3"/>
<line x1="818.61" y1="374.31" x2="763.50" y2="407.25" stroke="#a8a8a8" stroke-width="1.2"/>
<line x1="820.31" y1="375.03" x2="765.20" y2="407.96" stroke="#8e8e8e" stroke-width="0.9" stroke-dasharray="1.1 1.3"/>
<line x1="822.02" y1="375.74" x2="766.90" y2="408.68" stroke="#a8a8a8" stroke-width="1.2"/>
<line x1="823.72" y1="376.46" x2="768.61" y2="409.39" stroke="#8e8e8e" stroke-width="0.9" stroke-dasharray="1.1 1.3"/>
<line x1="825.42" y1="377.17" x2="770.31" y2="410.11" stroke="#a8a8a8" stroke-width="1.2"/>
<line x1="827.13" y1="377.89" x2="772.01" y2="410.82" stroke="#8e8e8e" stroke-width="0.9" stroke-dasharray="1.1 1.3"/>
<line x1="828.83" y1="378.60" x2="773.72" y2="411.54" stroke="#a8a8a8" stroke-width="1.2"/>
<line x1="830.53" y1="379.32" x2="775.42" y2="412.25" stroke="#8e8e8e" stroke-width="0.9" stroke-dasharray="1.1 1.3"/>
<line x1="832.24" y1="380.03" x2="777.12" y2="412.97" stroke="#a8a8a8" stroke-width="1.2"/>
<line x1="833.94" y1="380.75" x2="778.83" y2="413.68" stroke="#8e8e8e" stroke-width="0.9" stroke-dasharray="1.1 1.3"/>
<line x1="835.64" y1="381.46" x2="780.53" y2="414.40" stroke="#a8a8a8" stroke-width="1.2"/>
<line x1="837.35" y1="382.18" x2="782.23" y2="415.11" stroke="#8e8e8e" stroke-width="0.9" stroke-dasharray="1.1 1.3"/>
<line x1="839.05" y1="382.90" x2="783.93" y2="415.83" stroke="#a8a8a8" stroke-width="1.2"/>
<line x1="840.75" y1="383.61" x2="785.64" y2="416.55" stroke="#8e8e8e" stroke-width="0.9" stroke-dasharray="1.1 1.3"/>
<line x1="842.46" y1="384.33" x2="787.34" y2="417.26" stroke="#a8a8a8" stroke-width="1.2"/>
<line x1="844.16" y1="385.04" x2="789.04" y2="417.98" stroke="#8e8e8e" stroke-width="0.9" stroke-dasharray="1.1 1.3"/>
<line x1="845.86" y1="385.76" x2="790.75" y2="418.69" stroke="#a8a8a8" stroke-width="1.2"/>
<line x1="847.56" y1="386.47" x2="792.45" y2="419.41" stroke="#8e8e8e" stroke-width="0.9" stroke-dasharray="1.1 1.3"/>
<line x1="849.27" y1="387.19" x2="794.15" y2="420.12" stroke="#a8a8a8" stroke-width="1.2"/>
<line x1="850.97" y1="387.90" x2="795.86" y2="420.84" stroke="#8e8e8e" stroke-width="0.9" stroke-dasharray="1.1 1.3"/>
<line x1="852.67" y1="388.62" x2="797.56" y2="421.55" stroke="#a8a8a8" stroke-width="1.2"/>
<line x1="854.38" y1="389.33" x2="799.26" y2="422.27" stroke="#8e8e8e" stroke-width="0.9" stroke-dasharray="1.1 1.3"/>
<line x1="856.08" y1="390.05" x2="800.97" y2="422.98" stroke="#a8a8a8" stroke-width="1.2"/>
<line x1="857.78" y1="390.77" x2="802.67" y2="423.70" stroke="#8e8e8e" stroke-width="0.9" stroke-dasharray="1.1 1.3"/>
<line x1="859.49" y1="391.48" x2="804.37" y2="424.42" stroke="#a8a8a8" stroke-width="1.2"/>
<line x1="861.19" y1="392.20" x2="806.08" y2="425.13" stroke="#8e8e8e" stroke-width="0.9" stroke-dasharray="1.1 1.3"/>
<line x1="862.89" y1="392.91" x2="807.78" y2="425.85" stroke="#a8a8a8" stroke-width="1.2"/>
<line x1="864.60" y1="393.63" x2="809.48" y2="426.56" stroke="#8e8e8e" stroke-width="0.9" stroke-dasharray="1.1 1.3"/>
<line x1="866.30" y1="394.34" x2="811.19" y2="427.28" stroke="#a8a8a8" stroke-width="1.2"/>
<line x1="868.00" y1="395.06" x2="812.89" y2="427.99" stroke="#8e8e8e" stroke-width="0.9" stroke-dasharray="1.1 1.3"/>
<line x1="869.71" y1="395.77" x2="814.59" y2="428.71" stroke="#a8a8a8" stroke-width="1.2"/>
<line x1="871.41" y1="396.49" x2="816.30" y2="429.42" stroke="#8e8e8e" stroke-width="0.9" stroke-dasharray="1.1 1.3"/>
<line x1="873.11" y1="397.20" x2="818.00" y2="430.14" stroke="#a8a8a8" stroke-width="1.2"/>
<line x1="874.82" y1="397.92" x2="819.70" y2="430.85" stroke="#8e8e8e" stroke-width="0.9" stroke-dasharray="1.1 1.3"/>
<line x1="876.52" y1="398.63" x2="821.41" y2="431.57" stroke="#a8a8a8" stroke-width="1.2"/>
<line x1="878.22" y1="399.35" x2="823.11" y2="432.28" stroke="#8e8e8e" stroke-width="0.9" stroke-dasharray="1.1 1.3"/>
<line x1="879.93" y1="400.07" x2="824.81" y2="433.00" stroke="#a8a8a8" stroke-width="1.2"/>
<line x1="881.63" y1="400.78" x2="826.51" y2="433.72" stroke="#8e8e8e" stroke-width="0.9" stroke-dasharray="1.1 1.3"/>
<line x1="881.63" y1="400.78" x2="826.51" y2="433.72" stroke="#b8b8b8" stroke-width="0.8"/>
<polygon points="739.98,395.30 737.95,396.51 826.51,433.72 828.54,432.50" fill="#505050"/>
<line x1="742.88" y1="396.52" x2="740.85" y2="397.73" stroke="#646464" stroke-width="0.6"/>
<line x1="745.45" y1="397.60" x2="743.42" y2="398.81" stroke="#646464" stroke-width="0.6"/>
<line x1="748.03" y1="398.68" x2="746.00" y2="399.90" stroke="#b0b0b0" stroke-width="1.0"/>
<line x1="750.93" y1="399.90" x2="748.90" y2="401.11" stroke="#646464" stroke-width="0.6"/>
<line x1="753.51" y1="400.98" x2="751.48" y2="402.20" stroke="#646464" stroke-width="0.6"/>
<line x1="756.08" y1="402.06" x2="754.05" y2="403.28" stroke="#b0b0b0" stroke-width="1.0"/>
<line x1="758.98" y1="403.28" x2="756.95" y2="404.50" stroke="#646464" stroke-width="0.6"/>
<line x1="761.56" y1="404.36" x2="759.53" y2="405.58" stroke="#646464" stroke-width="0.6"/>
<line x1="764.13" y1="405.45" x2="762.10" y2="406.66" stroke="#b0b0b0" stroke-width="1.0"/>
<line x1="767.03" y1="406.66" x2="765.00" y2="407.88" stroke="#646464" stroke-width="0.6"/>
<line x1="769.61" y1="407.75" x2="767.58" y2="408.96" stroke="#646464" stroke-width="0.6"/>
<line x1="772.18" y1="408.83" x2="770.15" y2="410.04" stroke="#b0b0b0" stroke-width="1.0"/>
<line x1="775.08" y1="410.05" x2="773.05" y2="411.26" stroke="#646464" stroke-width="0.6"/>
<line x1="777.66" y1="411.13" x2="775.63" y2="412.34" stroke="#646464" stroke-width="0.6"/>
<line x1="780.24" y1="412.21" x2="778.21" y2="413.42" stroke="#b0b0b0" stroke-width="1.0"/>
<line x1="783.13" y1="413.43" x2="781.10" y2="414.64" stroke="#646464" stroke-width="0.6"/>
<line x1="785.71" y1="414.51" x2="783.68" y2="415.72" stroke="#646464" stroke-width="0.6"/>
<line x1="788.29" y1="415.59" x2="786.26" y2="416.81" stroke="#b0b0b0" stroke-width="1.0"/>
<line x1="791.19" y1="416.81" x2="789.16" y2="418.02" stroke="#646464" stroke-width="0.6"/>
<line x1="793.76" y1="417.89" x2="791.73" y2="419.11" stroke="#646464" stroke-width="0.6"/>
<line x1="796.34" y1="418.97" x2="794.31" y2="420.19" stroke="#b0b0b0" stroke-width="1.0"/>
<line x1="799.24" y1="420.19" x2="797.21" y2="421.41" stroke="#646464" stroke-width="0.6"/>
<line x1="801.81" y1="421.27" x2="799.78" y2="422.49" stroke="#646464" stroke-width="0.6"/>
<line x1="804.39" y1="422.36" x2="802.36" y2="423.57" stroke="#b0b0b0" stroke-width="1.0"/>
<line x1="807.29" y1="423.57" x2="805.26" y2="424.79" stroke="#646464" stroke-width="0.6"/>
<line x1="809.87" y1="424.66" x2="807.84" y2="425.87" stroke="#646464" stroke-width="0.6"/>
<line x1="812.44" y1="425.74" x2="810.41" y2="426.95" stroke="#b0b0b0" stroke-width="1.0"/>
<line x1="815.34" y1="426.96" x2="813.31" y2="428.17" stroke="#646464" stroke-width="0.6"/>
<line x1="817.92" y1="428.04" x2="815.89" y2="429.25" stroke="#646464" stroke-width="0.6"/>
<line x1="820.49" y1="429.12" x2="818.46" y2="430.33" stroke="#b0b0b0" stroke-width="1.0"/>
<line x1="823.39" y1="430.34" x2="821.36" y2="431.55" stroke="#646464" stroke-width="0.6"/>
<line x1="825.97" y1="431.42" x2="823.94" y2="432.63" stroke="#646464" stroke-width="0.6"/>
<linearGradient id="g1" gradientUnits="userSpaceOnUse" x1="763.6" y1="496.2" x2="818.7" y2="438.4"><stop offset="0" stop-color="#dcdcdc"/><stop offset="0.45" stop-color="#a8a8a8"/><stop offset="1" stop-color="#7c7c7c"/></linearGradient>
<polygon points="763.63,496.16 818.74,463.22 818.74,438.36 763.63,471.29" fill="url(#g1)"/>
<polygon points="675.06,458.96 763.63,496.16 763.63,471.29 675.06,434.09" fill="#464646"/>
<polygon points="674.33,454.43 762.89,491.63 762.89,480.19 674.33,442.99" fill="#a0a0a0"/>
<line x1="677.96" y1="443.76" x2="677.96" y2="435.31" stroke="#646464" stroke-width="0.6"/>
<line x1="677.96" y1="460.18" x2="677.96" y2="455.20" stroke="#646464" stroke-width="0.6"/>
<line x1="680.54" y1="444.85" x2="680.54" y2="436.39" stroke="#646464" stroke-width="0.6"/>
<line x1="680.54" y1="461.26" x2="680.54" y2="456.28" stroke="#646464" stroke-width="0.6"/>
<line x1="676.74" y1="453.95" x2="676.74" y2="445.00" stroke="#c6c6c6" stroke-width="1.0"/>
<line x1="680.61" y1="455.57" x2="680.61" y2="446.62" stroke="#c6c6c6" stroke-width="1.0"/>
<line x1="678.75" y1="456.29" x2="678.75" y2="444.85" stroke="#585858" stroke-width="0.9"/>
<line x1="686.01" y1="447.15" x2="686.01" y2="438.69" stroke="#646464" stroke-width="0.6"/>
<line x1="686.01" y1="463.56" x2="686.01" y2="458.58" stroke="#646464" stroke-width="0.6"/>
<line x1="688.59" y1="448.23" x2="688.59" y2="439.77" stroke="#646464" stroke-width="0.6"/>
<line x1="688.59" y1="464.64" x2="688.59" y2="459.67" stroke="#646464" stroke-width="0.6"/>
<line x1="684.79" y1="457.33" x2="684.79" y2="448.38" stroke="#c6c6c6" stroke-width="1.0"/>
<line x1="688.66" y1="458.95" x2="688.66" y2="450.00" stroke="#c6c6c6" stroke-width="1.0"/>
<line x1="686.81" y1="459.67" x2="686.81" y2="448.23" stroke="#585858" stroke-width="0.9"/>
<line x1="683.12" y1="462.34" x2="683.12" y2="437.47" stroke="#b8b8b8" stroke-width="1.1"/>
<line x1="694.07" y1="450.53" x2="694.07" y2="442.07" stroke="#646464" stroke-width="0.6"/>
<line x1="694.07" y1="466.94" x2="694.07" y2="461.97" stroke="#646464" stroke-width="0.6"/>
<line x1="696.64" y1="451.61" x2="696.64" y2="443.16" stroke="#646464" stroke-width="0.6"/>
<line x1="696.64" y1="468.02" x2="696.64" y2="463.05" stroke="#646464" stroke-width="0.6"/>
<line x1="692.84" y1="460.71" x2="692.84" y2="451.76" stroke="#c6c6c6" stroke-width="1.0"/>
<line x1="696.71" y1="462.34" x2="696.71" y2="453.38" stroke="#c6c6c6" stroke-width="1.0"/>
<line x1="694.86" y1="463.05" x2="694.86" y2="451.61" stroke="#585858" stroke-width="0.9"/>
<line x1="691.17" y1="465.72" x2="691.17" y2="440.86" stroke="#b8b8b8" stroke-width="1.1"/>
<line x1="702.12" y1="453.91" x2="702.12" y2="445.46" stroke="#646464" stroke-width="0.6"/>
<line x1="702.12" y1="470.32" x2="702.12" y2="465.35" stroke="#646464" stroke-width="0.6"/>
<line x1="704.69" y1="454.99" x2="704.69" y2="446.54" stroke="#646464" stroke-width="0.6"/>
<line x1="704.69" y1="471.40" x2="704.69" y2="466.43" stroke="#646464" stroke-width="0.6"/>
<line x1="700.90" y1="464.09" x2="700.90" y2="455.14" stroke="#c6c6c6" stroke-width="1.0"/>
<line x1="704.76" y1="465.72" x2="704.76" y2="456.77" stroke="#c6c6c6" stroke-width="1.0"/>
<line x1="702.91" y1="466.43" x2="702.91" y2="454.99" stroke="#585858" stroke-width="0.9"/>
<line x1="699.22" y1="469.10" x2="699.22" y2="444.24" stroke="#b8b8b8" stroke-width="1.1"/>
<line x1="710.17" y1="457.29" x2="710.17" y2="448.84" stroke="#646464" stroke-width="0.6"/>
<line x1="710.17" y1="473.70" x2="710.17" y2="468.73" stroke="#646464" stroke-width="0.6"/>
<line x1="712.75" y1="458.37" x2="712.75" y2="449.92" stroke="#646464" stroke-width="0.6"/>
<line x1="712.75" y1="474.79" x2="712.75" y2="469.81" stroke="#646464" stroke-width="0.6"/>
<line x1="708.95" y1="467.48" x2="708.95" y2="458.52" stroke="#c6c6c6" stroke-width="1.0"/>
<line x1="712.81" y1="469.10" x2="712.81" y2="460.15" stroke="#c6c6c6" stroke-width="1.0"/>
<line x1="710.96" y1="469.81" x2="710.96" y2="458.38" stroke="#585858" stroke-width="0.9"/>
<line x1="707.27" y1="472.49" x2="707.27" y2="447.62" stroke="#b8b8b8" stroke-width="1.1"/>
<line x1="718.22" y1="460.67" x2="718.22" y2="452.22" stroke="#646464" stroke-width="0.6"/>
<line x1="718.22" y1="477.09" x2="718.22" y2="472.11" stroke="#646464" stroke-width="0.6"/>
<line x1="720.80" y1="461.76" x2="720.80" y2="453.30" stroke="#646464" stroke-width="0.6"/>
<line x1="720.80" y1="478.17" x2="720.80" y2="473.19" stroke="#646464" stroke-width="0.6"/>
<line x1="717.00" y1="470.86" x2="717.00" y2="461.91" stroke="#c6c6c6" stroke-width="1.0"/>
<line x1="720.86" y1="472.48" x2="720.86" y2="463.53" stroke="#c6c6c6" stroke-width="1.0"/>
<line x1="719.01" y1="473.20" x2="719.01" y2="461.76" stroke="#585858" stroke-width="0.9"/>
<line x1="715.32" y1="475.87" x2="715.32" y2="451.00" stroke="#b8b8b8" stroke-width="1.1"/>
<line x1="726.27" y1="464.06" x2="726.27" y2="455.60" stroke="#646464" stroke-width="0.6"/>
<line x1="726.27" y1="480.47" x2="726.27" y2="475.49" stroke="#646464" stroke-width="0.6"/>
<line x1="728.85" y1="465.14" x2="728.85" y2="456.68" stroke="#646464" stroke-width="0.6"/>
<line x1="728.85" y1="481.55" x2="728.85" y2="476.58" stroke="#646464" stroke-width="0.6"/>
<line x1="725.05" y1="474.24" x2="725.05" y2="465.29" stroke="#c6c6c6" stroke-width="1.0"/>
<line x1="728.91" y1="475.86" x2="728.91" y2="466.91" stroke="#c6c6c6" stroke-width="1.0"/>
<line x1="727.06" y1="476.58" x2="727.06" y2="465.14" stroke="#585858" stroke-width="0.9"/>
<line x1="723.37" y1="479.25" x2="723.37" y2="454.38" stroke="#b8b8b8" stroke-width="1.1"/>
<line x1="734.32" y1="467.44" x2="734.32" y2="458.98" stroke="#646464" stroke-width="0.6"/>
<line x1="734.32" y1="483.85" x2="734.32" y2="478.88" stroke="#646464" stroke-width="0.6"/>
<line x1="736.90" y1="468.52" x2="736.90" y2="460.07" stroke="#646464" stroke-width="0.6"/>
<line x1="736.90" y1="484.93" x2="736.90" y2="479.96" stroke="#646464" stroke-width="0.6"/>
<line x1="733.10" y1="477.62" x2="733.10" y2="468.67" stroke="#c6c6c6" stroke-width="1.0"/>
<line x1="736.97" y1="479.25" x2="736.97" y2="470.29" stroke="#c6c6c6" stroke-width="1.0"/>
<line x1="735.11" y1="479.96" x2="735.11" y2="468.52" stroke="#585858" stroke-width="0.9"/>
<line x1="731.42" y1="482.63" x2="731.42" y2="457.77" stroke="#b8b8b8" stroke-width="1.1"/>
<line x1="742.37" y1="470.82" x2="742.37" y2="462.37" stroke="#646464" stroke-width="0.6"/>
<line x1="742.37" y1="487.23" x2="742.37" y2="482.26" stroke="#646464" stroke-width="0.6"/>
<line x1="744.95" y1="471.90" x2="744.95" y2="463.45" stroke="#646464" stroke-width="0.6"/>
<line x1="744.95" y1="488.31" x2="744.95" y2="483.34" stroke="#646464" stroke-width="0.6"/>
<line x1="741.15" y1="481.00" x2="741.15" y2="472.05" stroke="#c6c6c6" stroke-width="1.0"/>
<line x1="745.02" y1="482.63" x2="745.02" y2="473.68" stroke="#c6c6c6" stroke-width="1.0"/>
<line x1="743.17" y1="483.34" x2="743.17" y2="471.90" stroke="#585858" stroke-width="0.9"/>
<line x1="739.48" y1="486.01" x2="739.48" y2="461.15" stroke="#b8b8b8" stroke-width="1.1"/>
<line x1="750.43" y1="474.20" x2="750.43" y2="465.75" stroke="#646464" stroke-width="0.6"/>
<line x1="750.43" y1="490.61" x2="750.43" y2="485.64" stroke="#646464" stroke-width="0.6"/>
<line x1="753.00" y1="475.28" x2="753.00" y2="466.83" stroke="#646464" stroke-width="0.6"/>
<line x1="753.00" y1="491.70" x2="753.00" y2="486.72" stroke="#646464" stroke-width="0.6"/>
<line x1="749.20" y1="484.39" x2="749.20" y2="475.43" stroke="#c6c6c6" stroke-width="1.0"/>
<line x1="753.07" y1="486.01" x2="753.07" y2="477.06" stroke="#c6c6c6" stroke-width="1.0"/>
<line x1="751.22" y1="486.72" x2="751.22" y2="475.29" stroke="#585858" stroke-width="0.9"/>
<line x1="747.53" y1="489.40" x2="747.53" y2="464.53" stroke="#b8b8b8" stroke-width="1.1"/>
<line x1="758.48" y1="477.58" x2="758.48" y2="469.13" stroke="#646464" stroke-width="0.6"/>
<line x1="758.48" y1="494.00" x2="758.48" y2="489.02" stroke="#646464" stroke-width="0.6"/>
<line x1="761.05" y1="478.67" x2="761.05" y2="470.21" stroke="#646464" stroke-width="0.6"/>
<line x1="761.05" y1="495.08" x2="761.05" y2="490.10" stroke="#646464" stroke-width="0.6"/>
<line x1="757.26" y1="487.77" x2="757.26" y2="478.82" stroke="#c6c6c6" stroke-width="1.0"/>
<line x1="761.12" y1="489.39" x2="761.12" y2="480.44" stroke="#c6c6c6" stroke-width="1.0"/>
<line x1="759.27" y1="490.11" x2="759.27" y2="478.67" stroke="#585858" stroke-width="0.9"/>
<line x1="755.58" y1="492.78" x2="755.58" y2="467.91" stroke="#b8b8b8" stroke-width="1.1"/>
<polygon points="730.18,401.16 675.06,434.09 763.63,471.29 818.74,438.36" fill="#6c6c6c"/>
<line x1="731.88" y1="401.87" x2="676.77" y2="434.81" stroke="#a8a8a8" stroke-width="1.2"/>
<line x1="733.58" y1="402.59" x2="678.47" y2="435.52" stroke="#8e8e8e" stroke-width="0.9" stroke-dasharray="1.1 1.3"/>
<line x1="735.29" y1="403.30" x2="680.17" y2="436.24" stroke="#a8a8a8" stroke-width="1.2"/>
<line x1="736.99" y1="404.02" x2="681.88" y2="436.95" stroke="#8e8e8e" stroke-width="0.9" stroke-dasharray="1.1 1.3"/>
<line x1="738.69" y1="404.73" x2="683.58" y2="437.67" stroke="#a8a8a8" stroke-width="1.2"/>
<line x1="740.40" y1="405.45" x2="685.28" y2="438.38" stroke="#8e8e8e" stroke-width="0.9" stroke-dasharray="1.1 1.3"/>
<line x1="742.10" y1="406.17" x2="686.99" y2="439.10" stroke="#a8a8a8" stroke-width="1.2"/>
<line x1="743.80" y1="406.88" x2="688.69" y2="439.82" stroke="#8e8e8e" stroke-width="0.9" stroke-dasharray="1.1 1.3"/>
<line x1="745.51" y1="407.60" x2="690.39" y2="440.53" stroke="#a8a8a8" stroke-width="1.2"/>
<line x1="747.21" y1="408.31" x2="692.10" y2="441.25" stroke="#8e8e8e" stroke-width="0.9" stroke-dasharray="1.1 1.3"/>
<line x1="748.91" y1="409.03" x2="693.80" y2="441.96" stroke="#a8a8a8" stroke-width="1.2"/>
<line x1="750.62" y1="409.74" x2="695.50" y2="442.68" stroke="#8e8e8e" stroke-width="0.9" stroke-dasharray="1.1 1.3"/>
<line x1="752.32" y1="410.46" x2="697.21" y2="443.39" stroke="#a8a8a8" stroke-width="1.2"/>
<line x1="754.02" y1="411.17" x2="698.91" y2="444.11" stroke="#8e8e8e" stroke-width="0.9" stroke-dasharray="1.1 1.3"/>
<line x1="755.73" y1="411.89" x2="700.61" y2="444.82" stroke="#a8a8a8" stroke-width="1.2"/>
<line x1="757.43" y1="412.60" x2="702.32" y2="445.54" stroke="#8e8e8e" stroke-width="0.9" stroke-dasharray="1.1 1.3"/>
<line x1="759.13" y1="413.32" x2="704.02" y2="446.25" stroke="#a8a8a8" stroke-width="1.2"/>
<line x1="760.84" y1="414.03" x2="705.72" y2="446.97" stroke="#8e8e8e" stroke-width="0.9" stroke-dasharray="1.1 1.3"/>
<line x1="762.54" y1="414.75" x2="707.43" y2="447.68" stroke="#a8a8a8" stroke-width="1.2"/>
<line x1="764.24" y1="415.47" x2="709.13" y2="448.40" stroke="#8e8e8e" stroke-width="0.9" stroke-dasharray="1.1 1.3"/>
<line x1="765.95" y1="416.18" x2="710.83" y2="449.12" stroke="#a8a8a8" stroke-width="1.2"/>
<line x1="767.65" y1="416.90" x2="712.53" y2="449.83" stroke="#8e8e8e" stroke-width="0.9" stroke-dasharray="1.1 1.3"/>
<line x1="769.35" y1="417.61" x2="714.24" y2="450.55" stroke="#a8a8a8" stroke-width="1.2"/>
<line x1="771.05" y1="418.33" x2="715.94" y2="451.26" stroke="#8e8e8e" stroke-width="0.9" stroke-dasharray="1.1 1.3"/>
<line x1="772.76" y1="419.04" x2="717.64" y2="451.98" stroke="#a8a8a8" stroke-width="1.2"/>
<line x1="774.46" y1="419.76" x2="719.35" y2="452.69" stroke="#8e8e8e" stroke-width="0.9" stroke-dasharray="1.1 1.3"/>
<line x1="776.16" y1="420.47" x2="721.05" y2="453.41" stroke="#a8a8a8" stroke-width="1.2"/>
<line x1="777.87" y1="421.19" x2="722.75" y2="454.12" stroke="#8e8e8e" stroke-width="0.9" stroke-dasharray="1.1 1.3"/>
<line x1="779.57" y1="421.90" x2="724.46" y2="454.84" stroke="#a8a8a8" stroke-width="1.2"/>
<line x1="781.27" y1="422.62" x2="726.16" y2="455.55" stroke="#8e8e8e" stroke-width="0.9" stroke-dasharray="1.1 1.3"/>
<line x1="782.98" y1="423.34" x2="727.86" y2="456.27" stroke="#a8a8a8" stroke-width="1.2"/>
<line x1="784.68" y1="424.05" x2="729.57" y2="456.99" stroke="#8e8e8e" stroke-width="0.9" stroke-dasharray="1.1 1.3"/>
<line x1="786.38" y1="424.77" x2="731.27" y2="457.70" stroke="#a8a8a8" stroke-width="1.2"/>
<line x1="788.09" y1="425.48" x2="732.97" y2="458.42" stroke="#8e8e8e" stroke-width="0.9" stroke-dasharray="1.1 1.3"/>
<line x1="789.79" y1="426.20" x2="734.68" y2="459.13" stroke="#a8a8a8" stroke-width="1.2"/>
<line x1="791.49" y1="426.91" x2="736.38" y2="459.85" stroke="#8e8e8e" stroke-width="0.9" stroke-dasharray="1.1 1.3"/>
<line x1="793.20" y1="427.63" x2="738.08" y2="460.56" stroke="#a8a8a8" stroke-width="1.2"/>
<line x1="794.90" y1="428.34" x2="739.79" y2="461.28" stroke="#8e8e8e" stroke-width="0.9" stroke-dasharray="1.1 1.3"/>
<line x1="796.60" y1="429.06" x2="741.49" y2="461.99" stroke="#a8a8a8" stroke-width="1.2"/>
<line x1="798.31" y1="429.77" x2="743.19" y2="462.71" stroke="#8e8e8e" stroke-width="0.9" stroke-dasharray="1.1 1.3"/>
<line x1="800.01" y1="430.49" x2="744.90" y2="463.42" stroke="#a8a8a8" stroke-width="1.2"/>
<line x1="801.71" y1="431.20" x2="746.60" y2="464.14" stroke="#8e8e8e" stroke-width="0.9" stroke-dasharray="1.1 1.3"/>
<line x1="803.42" y1="431.92" x2="748.30" y2="464.86" stroke="#a8a8a8" stroke-width="1.2"/>
<line x1="805.12" y1="432.64" x2="750.00" y2="465.57" stroke="#8e8e8e" stroke-width="0.9" stroke-dasharray="1.1 1.3"/>
<line x1="806.82" y1="433.35" x2="751.71" y2="466.29" stroke="#a8a8a8" stroke-width="1.2"/>
<line x1="808.52" y1="434.07" x2="753.41" y2="467.00" stroke="#8e8e8e" stroke-width="0.9" stroke-dasharray="1.1 1.3"/>
<line x1="810.23" y1="434.78" x2="755.11" y2="467.72" stroke="#a8a8a8" stroke-width="1.2"/>
<line x1="811.93" y1="435.50" x2="756.82" y2="468.43" stroke="#8e8e8e" stroke-width="0.9" stroke-dasharray="1.1 1.3"/>
<line x1="813.63" y1="436.21" x2="758.52" y2="469.15" stroke="#a8a8a8" stroke-width="1.2"/>
<line x1="815.34" y1="436.93" x2="760.22" y2="469.86" stroke="#8e8e8e" stroke-width="0.9" stroke-dasharray="1.1 1.3"/>
<line x1="817.04" y1="437.64" x2="761.93" y2="470.58" stroke="#a8a8a8" stroke-width="1.2"/>
<line x1="818.74" y1="438.36" x2="763.63" y2="471.29" stroke="#8e8e8e" stroke-width="0.9" stroke-dasharray="1.1 1.3"/>
<line x1="818.74" y1="438.36" x2="763.63" y2="471.29" stroke="#b8b8b8" stroke-width="0.8"/>
<polygon points="677.09,432.88 675.06,434.09 763.63,471.29 765.66,470.08" fill="#505050"/>
<line x1="679.99" y1="434.10" x2="677.96" y2="435.31" stroke="#646464" stroke-width="0.6"/>
<line x1="682.57" y1="435.18" x2="680.54" y2="436.39" stroke="#646464" stroke-width="0.6"/>
<line x1="685.15" y1="436.26" x2="683.12" y2="437.47" stroke="#b0b0b0" stroke-width="1.0"/>
<line x1="688.04" y1="437.48" x2="686.01" y2="438.69" stroke="#646464" stroke-width="0.6"/>
<line x1="690.62" y1="438.56" x2="688.59" y2="439.77" stroke="#646464" stroke-width="0.6"/>
<line x1="693.20" y1="439.64" x2="691.17" y2="440.86" stroke="#b0b0b0" stroke-width="1.0"/>
<line x1="696.10" y1="440.86" x2="694.07" y2="442.07" stroke="#646464" stroke-width="0.6"/>
<line x1="698.67" y1="441.94" x2="696.64" y2="443.16" stroke="#646464" stroke-width="0.6"/>
<line x1="701.25" y1="443.02" x2="699.22" y2="444.24" stroke="#b0b0b0" stroke-width="1.0"/>
<line x1="704.15" y1="444.24" x2="702.12" y2="445.46" stroke="#646464" stroke-width="0.6"/>
<line x1="706.72" y1="445.32" x2="704.69" y2="446.54" stroke="#646464" stroke-width="0.6"/>
<line x1="709.30" y1="446.41" x2="707.27" y2="447.62" stroke="#b0b0b0" stroke-width="1.0"/>
<line x1="712.20" y1="447.62" x2="710.17" y2="448.84" stroke="#646464" stroke-width="0.6"/>
<line x1="714.78" y1="448.71" x2="712.75" y2="449.92" stroke="#646464" stroke-width="0.6"/>
<line x1="717.35" y1="449.79" x2="715.32" y2="451.00" stroke="#b0b0b0" stroke-width="1.0"/>
<line x1="720.25" y1="451.01" x2="718.22" y2="452.22" stroke="#646464" stroke-width="0.6"/>
<line x1="722.83" y1="452.09" x2="720.80" y2="453.30" stroke="#646464" stroke-width="0.6"/>
<line x1="725.40" y1="453.17" x2="723.37" y2="454.38" stroke="#b0b0b0" stroke-width="1.0"/>
<line x1="728.30" y1="454.39" x2="726.27" y2="455.60" stroke="#646464" stroke-width="0.6"/>
<line x1="730.88" y1="455.47" x2="728.85" y2="456.68" stroke="#646464" stroke-width="0.6"/>
<line x1="733.45" y1="456.55" x2="731.42" y2="457.77" stroke="#b0b0b0" stroke-width="1.0"/>
<line x1="736.35" y1="457.77" x2="734.32" y2="458.98" stroke="#646464" stroke-width="0.6"/>
<line x1="738.93" y1="458.85" x2="736.90" y2="460.07" stroke="#646464" stroke-width="0.6"/>
<line x1="741.51" y1="459.93" x2="739.48" y2="461.15" stroke="#b0b0b0" stroke-width="1.0"/>
<line x1="744.40" y1="461.15" x2="742.37" y2="462.37" stroke="#646464" stroke-width="0.6"/>
<line x1="746.98" y1="462.23" x2="744.95" y2="463.45" stroke="#646464" stroke-width="0.6"/>
<line x1="749.56" y1="463.32" x2="747.53" y2="464.53" stroke="#b0b0b0" stroke-width="1.0"/>
<line x1="752.46" y1="464.53" x2="750.43" y2="465.75" stroke="#646464" stroke-width="0.6"/>
<line x1="755.03" y1="465.62" x2="753.00" y2="466.83" stroke="#646464" stroke-width="0.6"/>
<line x1="757.61" y1="466.70" x2="755.58" y2="467.91" stroke="#b0b0b0" stroke-width="1.0"/>
<line x1="760.51" y1="467.92" x2="758.48" y2="469.13" stroke="#646464" stroke-width="0.6"/>
<line x1="763.08" y1="469.00" x2="761.05" y2="470.21" stroke="#646464" stroke-width="0.6"/>
<linearGradient id="g2" gradientUnits="userSpaceOnUse" x1="936.7" y1="504.9" x2="991.8" y2="447.1"><stop offset="0" stop-color="#dcdcdc"/><stop offset="0.45" stop-color="#a8a8a8"/><stop offset="1" stop-color="#7c7c7c"/></linearGradient>
<polygon points="936.69,504.86 991.81,471.93 991.81,447.06 936.69,480.00" fill="url(#g2)"/>
<polygon points="848.13,467.66 936.69,504.86 936.69,480.00 848.13,442.79" fill="#464646"/>
<polygon points="847.39,463.13 935.95,500.33 935.95,488.89 847.39,451.69" fill="#a0a0a0"/>
<line x1="851.03" y1="452.47" x2="851.03" y2="444.01" stroke="#646464" stroke-width="0.6"/>
<line x1="851.03" y1="468.88" x2="851.03" y2="463.90" stroke="#646464" stroke-width="0.6"/>
<line x1="853.60" y1="453.55" x2="853.60" y2="445.09" stroke="#646464" stroke-width="0.6"/>
<line x1="853.60" y1="469.96" x2="853.60" y2="464.99" stroke="#646464" stroke-width="0.6"/>
<line x1="849.80" y1="462.65" x2="849.80" y2="453.70" stroke="#c6c6c6" stroke-width="1.0"/>
<line x1="853.67" y1="464.27" x2="853.67" y2="455.32" stroke="#c6c6c6" stroke-width="1.0"/>
<line x1="851.82" y1="464.99" x2="851.82" y2="453.55" stroke="#585858" stroke-width="0.9"/>
<line x1="859.08" y1="455.85" x2="859.08" y2="447.39" stroke="#646464" stroke-width="0.6"/>
<line x1="859.08" y1="472.26" x2="859.08" y2="467.29" stroke="#646464" stroke-width="0.6"/>
<line x1="861.65" y1="456.93" x2="861.65" y2="448.48" stroke="#646464" stroke-width="0.6"/>
<line x1="861.65" y1="473.34" x2="861.65" y2="468.37" stroke="#646464" stroke-width="0.6"/>
<line x1="857.86" y1="466.03" x2="857.86" y2="457.08" stroke="#c6c6c6" stroke-width="1.0"/>
<line x1="861.72" y1="467.66" x2="861.72" y2="458.70" stroke="#c6c6c6" stroke-width="1.0"/>
<line x1="859.87" y1="468.37" x2="859.87" y2="456.93" stroke="#585858" stroke-width="0.9"/>
<line x1="856.18" y1="471.04" x2="856.18" y2="446.18" stroke="#b8b8b8" stroke-width="1.1"/>
<line x1="867.13" y1="459.23" x2="867.13" y2="450.78" stroke="#646464" stroke-width="0.6"/>
<line x1="867.13" y1="475.64" x2="867.13" y2="470.67" stroke="#646464" stroke-width="0.6"/>
<line x1="869.70" y1="460.31" x2="869.70" y2="451.86" stroke="#646464" stroke-width="0.6"/>
<line x1="869.70" y1="476.72" x2="869.70" y2="471.75" stroke="#646464" stroke-width="0.6"/>
<line x1="865.91" y1="469.41" x2="865.91" y2="460.46" stroke="#c6c6c6" stroke-width="1.0"/>
<line x1="869.77" y1="471.04" x2="869.77" y2="462.09" stroke="#c6c6c6" stroke-width="1.0"/>
<line x1="867.92" y1="471.75" x2="867.92" y2="460.31" stroke="#585858" stroke-width="0.9"/>
<line x1="864.23" y1="474.42" x2="864.23" y2="449.56" stroke="#b8b8b8" stroke-width="1.1"/>
<line x1="875.18" y1="462.61" x2="875.18" y2="454.16" stroke="#646464" stroke-width="0.6"/>
<line x1="875.18" y1="479.02" x2="875.18" y2="474.05" stroke="#646464" stroke-width="0.6"/>
<line x1="877.76" y1="463.69" x2="877.76" y2="455.24" stroke="#646464" stroke-width="0.6"/>
<line x1="877.76" y1="480.11" x2="877.76" y2="475.13" stroke="#646464" stroke-width="0.6"/>
<line x1="873.96" y1="472.80" x2="873.96" y2="463.84" stroke="#c6c6c6" stroke-width="1.0"/>
<line x1="877.82" y1="474.42" x2="877.82" y2="465.47" stroke="#c6c6c6" stroke-width="1.0"/>
<line x1="875.97" y1="475.13" x2="875.97" y2="463.70" stroke="#585858" stroke-width="0.9"/>
<line x1="872.28" y1="477.81" x2="872.28" y2="452.94" stroke="#b8b8b8" stroke-width="1.1"/>
<line x1="883.23" y1="465.99" x2="883.23" y2="457.54" stroke="#646464" stroke-width="0.6"/>
<line x1="883.23" y1="482.40" x2="883.23" y2="477.43" stroke="#646464" stroke-width="0.6"/>
<line x1="885.81" y1="467.08" x2="885.81" y2="458.62" stroke="#646464" stroke-width="0.6"/>
<line x1="885.81" y1="483.49" x2="885.81" y2="478.51" stroke="#646464" stroke-width="0.6"/>
<line x1="882.01" y1="476.18" x2="882.01" y2="467.23" stroke="#c6c6c6" stroke-width="1.0"/>
<line x1="885.87" y1="477.80" x2="885.87" y2="468.85" stroke="#c6c6c6" stroke-width="1.0"/>
<line x1="884.02" y1="478.52" x2="884.02" y2="467.08" stroke="#585858" stroke-width="0.9"/>
<line x1="880.33" y1="481.19" x2="880.33" y2="456.32" stroke="#b8b8b8" stroke-width="1.1"/>
<line x1="891.28" y1="469.38" x2="891.28" y2="460.92" stroke="#646464" stroke-width="0.6"/>
<line x1="891.28" y1="485.79" x2="891.28" y2="480.81" stroke="#646464" stroke-width="0.6"/>
<line x1="893.86" y1="470.46" x2="893.86" y2="462.00" stroke="#646464" stroke-width="0.6"/>
<line x1="893.86" y1="486.87" x2="893.86" y2="481.90" stroke="#646464" stroke-width="0.6"/>
<line x1="890.06" y1="479.56" x2="890.06" y2="470.61" stroke="#c6c6c6" stroke-width="1.0"/>
<line x1="893.93" y1="481.18" x2="893.93" y2="472.23" stroke="#c6c6c6" stroke-width="1.0"/>
<line x1="892.07" y1="481.90" x2="892.07" y2="470.46" stroke="#585858" stroke-width="0.9"/>
<line x1="888.38" y1="484.57" x2="888.38" y2="459.70" stroke="#b8b8b8" stroke-width="1.1"/>
<line x1="899.33" y1="472.76" x2="899.33" y2="464.30" stroke="#646464" stroke-width="0.6"/>
<line x1="899.33" y1="489.17" x2="899.33" y2="484.20" stroke="#646464" stroke-width="0.6"/>
<line x1="901.91" y1="473.84" x2="901.91" y2="465.39" stroke="#646464" stroke-width="0.6"/>
<line x1="901.91" y1="490.25" x2="901.91" y2="485.28" stroke="#646464" stroke-width="0.6"/>
<line x1="898.11" y1="482.94" x2="898.11" y2="473.99" stroke="#c6c6c6" stroke-width="1.0"/>
<line x1="901.98" y1="484.57" x2="901.98" y2="475.61" stroke="#c6c6c6" stroke-width="1.0"/>
<line x1="900.13" y1="485.28" x2="900.13" y2="473.84" stroke="#585858" stroke-width="0.9"/>
<line x1="896.44" y1="487.95" x2="896.44" y2="463.09" stroke="#b8b8b8" stroke-width="1.1"/>
<line x1="907.39" y1="476.14" x2="907.39" y2="467.69" stroke="#646464" stroke-width="0.6"/>
<line x1="907.39" y1="492.55" x2="907.39" y2="487.58" stroke="#646464" stroke-width="0.6"/>
<line x1="909.96" y1="477.22" x2="909.96" y2="468.77" stroke="#646464" stroke-width="0.6"/>
<line x1="909.96" y1="493.63" x2="909.96" y2="488.66" stroke="#646464" stroke-width="0.6"/>
<line x1="906.16" y1="486.32" x2="906.16" y2="477.37" stroke="#c6c6c6" stroke-width="1.0"/>
<line x1="910.03" y1="487.95" x2="910.03" y2="479.00" stroke="#c6c6c6" stroke-width="1.0"/>
<line x1="908.18" y1="488.66" x2="908.18" y2="477.22" stroke="#585858" stroke-width="0.9"/>
<line x1="904.49" y1="491.33" x2="904.49" y2="466.47" stroke="#b8b8b8" stroke-width="1.1"/>
<line x1="915.44" y1="479.52" x2="915.44" y2="471.07" stroke="#646464" stroke-width="0.6"/>
<line x1="915.44" y1="495.93" x2="915.44" y2="490.96" stroke="#646464" stroke-width="0.6"/>
<line x1="918.01" y1="480.60" x2="918.01" y2="472.15" stroke="#646464" stroke-width="0.6"/>
<line x1="918.01" y1="497.02" x2="918.01" y2="492.04" stroke="#646464" stroke-width="0.6"/>
<line x1="914.22" y1="489.71" x2="914.22" y2="480.75" stroke="#c6c6c6" stroke-width="1.0"/>
<line x1="918.08" y1="491.33" x2="918.08" y2="482.38" stroke="#c6c6c6" stroke-width="1.0"/>
<line x1="916.23" y1="492.04" x2="916.23" y2="480.61" stroke="#585858" stroke-width="0.9"/>
<line x1="912.54" y1="494.72" x2="912.54" y2="469.85" stroke="#b8b8b8" stroke-width="1.1"/>
<line x1="923.49" y1="482.90" x2="923.49" y2="474.45" stroke="#646464" stroke-width="0.6"/>
<line x1="923.49" y1="499.31" x2="923.49" y2="494.34" stroke="#646464" stroke-width="0.6"/>
<line x1="926.06" y1="483.99" x2="926.06" y2="475.53" stroke="#646464" stroke-width="0.6"/>
<line x1="926.06" y1="500.40" x2="926.06" y2="495.42" stroke="#646464" stroke-width="0.6"/>
<line x1="922.27" y1="493.09" x2="922.27" y2="484.14" stroke="#c6c6c6" stroke-width="1.0"/>
<line x1="926.13" y1="494.71" x2="926.13" y2="485.76" stroke="#c6c6c6" stroke-width="1.0"/>
<line x1="924.28" y1="495.43" x2="924.28" y2="483.99" stroke="#585858" stroke-width="0.9"/>
<line x1="920.59" y1="498.10" x2="920.59" y2="473.23" stroke="#b8b8b8" stroke-width="1.1"/>
<line x1="931.54" y1="486.29" x2="931.54" y2="477.83" stroke="#646464" stroke-width="0.6"/>
<line x1="931.54" y1="502.70" x2="931.54" y2="497.72" stroke="#646464" stroke-width="0.6"/>
<line x1="934.12" y1="487.37" x2="934.12" y2="478.91" stroke="#646464" stroke-width="0.6"/>
<line x1="934.12" y1="503.78" x2="934.12" y2="498.81" stroke="#646464" stroke-width="0.6"/>
<line x1="930.32" y1="496.47" x2="930.32" y2="487.52" stroke="#c6c6c6" stroke-width="1.0"/>
<line x1="934.18" y1="498.09" x2="934.18" y2="489.14" stroke="#c6c6c6" stroke-width="1.0"/>
<line x1="932.33" y1="498.81" x2="932.33" y2="487.37" stroke="#585858" stroke-width="0.9"/>
<line x1="928.64" y1="501.48" x2="928.64" y2="476.61" stroke="#b8b8b8" stroke-width="1.1"/>
<polygon points="903.24,409.86 848.13,442.79 936.69,480.00 991.81,447.06" fill="#6c6c6c"/>
<line x1="904.94" y1="410.57" x2="849.83" y2="443.51" stroke="#a8a8a8" stroke-width="1.2"/>
<line x1="906.65" y1="411.29" x2="851.53" y2="444.22" stroke="#8e8e8e" stroke-width="0.9" stroke-dasharray="1.1 1.3"/>
<line x1="908.35" y1="412.01" x2="853.24" y2="444.94" stroke="#a8a8a8" stroke-width="1.2"/>
<line x1="910.05" y1="412.72" x2="854.94" y2="445.66" stroke="#8e8e8e" stroke-width="0.9" stroke-dasharray="1.1 1.3"/>
<line x1="911.76" y1="413.44" x2="856.64" y2="446.37" stroke="#a8a8a8" stroke-width="1.2"/>
<line x1="913.46" y1="414.15" x2="858.35" y2="447.09" stroke="#8e8e8e" stroke-width="0.9" stroke-dasharray="1.1 1.3"/>
<line x1="915.16" y1="414.87" x2="860.05" y2="447.80" stroke="#a8a8a8" stroke-width="1.2"/>
<line x1="916.87" y1="415.58" x2="861.75" y2="448.52" stroke="#8e8e8e" stroke-width="0.9" stroke-dasharray="1.1 1.3"/>
<line x1="918.57" y1="416.30" x2="863.46" y2="449.23" stroke="#a8a8a8" stroke-width="1.2"/>
<line x1="920.27" y1="417.01" x2="865.16" y2="449.95" stroke="#8e8e8e" stroke-width="0.9" stroke-dasharray="1.1 1.3"/>
<line x1="921.98" y1="417.73" x2="866.86" y2="450.66" stroke="#a8a8a8" stroke-width="1.2"/>
<line x1="923.68" y1="418.44" x2="868.56" y2="451.38" stroke="#8e8e8e" stroke-width="0.9" stroke-dasharray="1.1 1.3"/>
<line x1="925.38" y1="419.16" x2="870.27" y2="452.09" stroke="#a8a8a8" stroke-width="1.2"/>
<line x1="927.09" y1="419.87" x2="871.97" y2="452.81" stroke="#8e8e8e" stroke-width="0.9" stroke-dasharray="1.1 1.3"/>
<line x1="928.79" y1="420.59" x2="873.67" y2="453.53" stroke="#a8a8a8" stroke-width="1.2"/>
<line x1="930.49" y1="421.31" x2="875.38" y2="454.24" stroke="#8e8e8e" stroke-width="0.9" stroke-dasharray="1.1 1.3"/>
<line x1="932.19" y1="422.02" x2="877.08" y2="454.96" stroke="#a8a8a8" stroke-width="1.2"/>
<line x1="933.90" y1="422.74" x2="878.78" y2="455.67" stroke="#8e8e8e" stroke-width="0.9" stroke-dasharray="1.1 1.3"/>
<line x1="935.60" y1="423.45" x2="880.49" y2="456.39" stroke="#a8a8a8" stroke-width="1.2"/>
<line x1="937.30" y1="424.17" x2="882.19" y2="457.10" stroke="#8e8e8e" stroke-width="0.9" stroke-dasharray="1.1 1.3"/>
<line x1="939.01" y1="424.88" x2="883.89" y2="457.82" stroke="#a8a8a8" stroke-width="1.2"/>
<line x1="940.71" y1="425.60" x2="885.60" y2="458.53" stroke="#8e8e8e" stroke-width="0.9" stroke-dasharray="1.1 1.3"/>
<line x1="942.41" y1="426.31" x2="887.30" y2="459.25" stroke="#a8a8a8" stroke-width="1.2"/>
<line x1="944.12" y1="427.03" x2="889.00" y2="459.96" stroke="#8e8e8e" stroke-width="0.9" stroke-dasharray="1.1 1.3"/>
<line x1="945.82" y1="427.74" x2="890.71" y2="460.68" stroke="#a8a8a8" stroke-width="1.2"/>
<line x1="947.52" y1="428.46" x2="892.41" y2="461.39" stroke="#8e8e8e" stroke-width="0.9" stroke-dasharray="1.1 1.3"/>
<line x1="949.23" y1="429.18" x2="894.11" y2="462.11" stroke="#a8a8a8" stroke-width="1.2"/>
<line x1="950.93" y1="429.89" x2="895.82" y2="462.83" stroke="#8e8e8e" stroke-width="0.9" stroke-dasharray="1.1 1.3"/>
<line x1="952.63" y1="430.61" x2="897.52" y2="463.54" stroke="#a8a8a8" stroke-width="1.2"/>
<line x1="954.34" y1="431.32" x2="899.22" y2="464.26" stroke="#8e8e8e" stroke-width="0.9" stroke-dasharray="1.1 1.3"/>
<line x1="956.04" y1="432.04" x2="900.93" y2="464.97" stroke="#a8a8a8" stroke-width="1.2"/>
<line x1="957.74" y1="432.75" x2="902.63" y2="465.69" stroke="#8e8e8e" stroke-width="0.9" stroke-dasharray="1.1 1.3"/>
<line x1="959.45" y1="433.47" x2="904.33" y2="466.40" stroke="#a8a8a8" stroke-width="1.2"/>
<line x1="961.15" y1="434.18" x2="906.04" y2="467.12" stroke="#8e8e8e" stroke-width="0.9" stroke-dasharray="1.1 1.3"/>
<line x1="962.85" y1="434.90" x2="907.74" y2="467.83" stroke="#a8a8a8" stroke-width="1.2"/>
<line x1="964.56" y1="435.61" x2="909.44" y2="468.55" stroke="#8e8e8e" stroke-width="0.9" stroke-dasharray="1.1 1.3"/>
<line x1="966.26" y1="436.33" x2="911.14" y2="469.26" stroke="#a8a8a8" stroke-width="1.2"/>
<line x1="967.96" y1="437.04" x2="912.85" y2="469.98" stroke="#8e8e8e" stroke-width="0.9" stroke-dasharray="1.1 1.3"/>
<line x1="969.66" y1="437.76" x2="914.55" y2="470.70" stroke="#a8a8a8" stroke-width="1.2"/>
<line x1="971.37" y1="438.48" x2="916.25" y2="471.41" stroke="#8e8e8e" stroke-width="0.9" stroke-dasharray="1.1 1.3"/>
<line x1="973.07" y1="439.19" x2="917.96" y2="472.13" stroke="#a8a8a8" stroke-width="1.2"/>
<line x1="974.77" y1="439.91" x2="919.66" y2="472.84" stroke="#8e8e8e" stroke-width="0.9" stroke-dasharray="1.1 1.3"/>
<line x1="976.48" y1="440.62" x2="921.36" y2="473.56" stroke="#a8a8a8" stroke-width="1.2"/>
<line x1="978.18" y1="441.34" x2="923.07" y2="474.27" stroke="#8e8e8e" stroke-width="0.9" stroke-dasharray="1.1 1.3"/>
<line x1="979.88" y1="442.05" x2="924.77" y2="474.99" stroke="#a8a8a8" stroke-width="1.2"/>
<line x1="981.59" y1="442.77" x2="926.47" y2="475.70" stroke="#8e8e8e" stroke-width="0.9" stroke-dasharray="1.1 1.3"/>
<line x1="983.29" y1="443.48" x2="928.18" y2="476.42" stroke="#a8a8a8" stroke-width="1.2"/>
<line x1="984.99" y1="444.20" x2="929.88" y2="477.13" stroke="#8e8e8e" stroke-width="0.9" stroke-dasharray="1.1 1.3"/>
<line x1="986.70" y1="444.91" x2="931.58" y2="477.85" stroke="#a8a8a8" stroke-width="1.2"/>
<line x1="988.40" y1="445.63" x2="933.29" y2="478.56" stroke="#8e8e8e" stroke-width="0.9" stroke-dasharray="1.1 1.3"/>
<line x1="990.10" y1="446.35" x2="934.99" y2="479.28" stroke="#a8a8a8" stroke-width="1.2"/>
<line x1="991.81" y1="447.06" x2="936.69" y2="480.00" stroke="#8e8e8e" stroke-width="0.9" stroke-dasharray="1.1 1.3"/>
<line x1="991.81" y1="447.06" x2="936.69" y2="480.00" stroke="#b8b8b8" stroke-width="0.8"/>
<polygon points="850.16,441.58 848.13,442.79 936.69,480.00 938.72,478.78" fill="#505050"/>
<line x1="853.06" y1="442.80" x2="851.03" y2="444.01" stroke="#646464" stroke-width="0.6"/>
<line x1="855.63" y1="443.88" x2="853.60" y2="445.09" stroke="#646464" stroke-width="0.6"/>
<line x1="858.21" y1="444.96" x2="856.18" y2="446.18" stroke="#b0b0b0" stroke-width="1.0"/>
<line x1="861.11" y1="446.18" x2="859.08" y2="447.39" stroke="#646464" stroke-width="0.6"/>
<line x1="863.68" y1="447.26" x2="861.65" y2="448.48" stroke="#646464" stroke-width="0.6"/>
<line x1="866.26" y1="448.34" x2="864.23" y2="449.56" stroke="#b0b0b0" stroke-width="1.0"/>
<line x1="869.16" y1="449.56" x2="867.13" y2="450.78" stroke="#646464" stroke-width="0.6"/>
<line x1="871.73" y1="450.64" x2="869.70" y2="451.86" stroke="#646464" stroke-width="0.6"/>
<line x1="874.31" y1="451.73" x2="872.28" y2="452.94" stroke="#b0b0b0" stroke-width="1.0"/>
<line x1="877.21" y1="452.94" x2="875.18" y2="454.16" stroke="#646464" stroke-width="0.6"/>
<line x1="879.79" y1="454.03" x2="877.76" y2="455.24" stroke="#646464" stroke-width="0.6"/>
<line x1="882.36" y1="455.11" x2="880.33" y2="456.32" stroke="#b0b0b0" stroke-width="1.0"/>
<line x1="885.26" y1="456.33" x2="883.23" y2="457.54" stroke="#646464" stroke-width="0.6"/>
<line x1="887.84" y1="457.41" x2="885.81" y2="458.62" stroke="#646464" stroke-width="0.6"/>
<line x1="890.41" y1="458.49" x2="888.38" y2="459.70" stroke="#b0b0b0" stroke-width="1.0"/>
<line x1="893.31" y1="459.71" x2="891.28" y2="460.92" stroke="#646464" stroke-width="0.6"/>
<line x1="895.89" y1="460.79" x2="893.86" y2="462.00" stroke="#646464" stroke-width="0.6"/>
<line x1="898.47" y1="461.87" x2="896.44" y2="463.09" stroke="#b0b0b0" stroke-width="1.0"/>
<line x1="901.36" y1="463.09" x2="899.33" y2="464.30" stroke="#646464" stroke-width="0.6"/>
<line x1="903.94" y1="464.17" x2="901.91" y2="465.39" stroke="#646464" stroke-width="0.6"/>
<line x1="906.52" y1="465.25" x2="904.49" y2="466.47" stroke="#b0b0b0" stroke-width="1.0"/>
<line x1="909.42" y1="466.47" x2="907.39" y2="467.69" stroke="#646464" stroke-width="0.6"/>
<line x1="911.99" y1="467.55" x2="909.96" y2="468.77" stroke="#646464" stroke-width="0.6"/>
<line x1="914.57" y1="468.64" x2="912.54" y2="469.85" stroke="#b0b0b0" stroke-width="1.0"/>
<line x1="917.47" y1="469.85" x2="915.44" y2="471.07" stroke="#646464" stroke-width="0.6"/>
<line x1="920.04" y1="470.94" x2="918.01" y2="472.15" stroke="#646464" stroke-width="0.6"/>
<line x1="922.62" y1="472.02" x2="920.59" y2="473.23" stroke="#b0b0b0" stroke-width="1.0"/>
<line x1="925.52" y1="473.24" x2="923.49" y2="474.45" stroke="#646464" stroke-width="0.6"/>
<line x1="928.09" y1="474.32" x2="926.06" y2="475.53" stroke="#646464" stroke-width="0.6"/>
<line x1="930.67" y1="475.40" x2="928.64" y2="476.61" stroke="#b0b0b0" stroke-width="1.0"/>
<line x1="933.57" y1="476.62" x2="931.54" y2="477.83" stroke="#646464" stroke-width="0.6"/>
<line x1="936.15" y1="477.70" x2="934.12" y2="478.91" stroke="#646464" stroke-width="0.6"/>
<linearGradient id="g3" gradientUnits="userSpaceOnUse" x1="700.7" y1="533.7" x2="755.9" y2="475.9"><stop offset="0" stop-color="#dcdcdc"/><stop offset="0.45" stop-color="#a8a8a8"/><stop offset="1" stop-color="#7c7c7c"/></linearGradient>
<polygon points="700.75,533.74 755.86,500.80 755.86,475.94 700.75,508.87" fill="url(#g3)"/>
<polygon points="612.18,496.54 700.75,533.74 700.75,508.87 612.18,471.67" fill="#464646"/>
<polygon points="611.44,492.00 700.01,529.21 700.01,517.77 611.44,480.57" fill="#a0a0a0"/>
<line x1="615.08" y1="481.34" x2="615.08" y2="472.89" stroke="#646464" stroke-width="0.6"/>
<line x1="615.08" y1="497.75" x2="615.08" y2="492.78" stroke="#646464" stroke-width="0.6"/>
<line x1="617.66" y1="482.42" x2="617.66" y2="473.97" stroke="#646464" stroke-width="0.6"/>
<line x1="617.66" y1="498.84" x2="617.66" y2="493.86" stroke="#646464" stroke-width="0.6"/>
<line x1="613.86" y1="491.53" x2="613.86" y2="482.57" stroke="#c6c6c6" stroke-width="1.0"/>
<line x1="617.72" y1="493.15" x2="617.72" y2="484.20" stroke="#c6c6c6" stroke-width="1.0"/>
<line x1="615.87" y1="493.86" x2="615.87" y2="482.43" stroke="#585858" stroke-width="0.9"/>
<line x1="623.13" y1="484.72" x2="623.13" y2="476.27" stroke="#646464" stroke-width="0.6"/>
<line x1="623.13" y1="501.14" x2="623.13" y2="496.16" stroke="#646464" stroke-width="0.6"/>
<line x1="625.71" y1="485.81" x2="625.71" y2="477.35" stroke="#646464" stroke-width="0.6"/>
<line x1="625.71" y1="502.22" x2="625.71" y2="497.24" stroke="#646464" stroke-width="0.6"/>
<line x1="621.91" y1="494.91" x2="621.91" y2="485.96" stroke="#c6c6c6" stroke-width="1.0"/>
<line x1="625.77" y1="496.53" x2="625.77" y2="487.58" stroke="#c6c6c6" stroke-width="1.0"/>
<line x1="623.92" y1="497.25" x2="623.92" y2="485.81" stroke="#585858" stroke-width="0.9"/>
<line x1="620.23" y1="499.92" x2="620.23" y2="475.05" stroke="#b8b8b8" stroke-width="1.1"/>
<line x1="631.18" y1="488.11" x2="631.18" y2="479.65" stroke="#646464" stroke-width="0.6"/>
<line x1="631.18" y1="504.52" x2="631.18" y2="499.54" stroke="#646464" stroke-width="0.6"/>
<line x1="633.76" y1="489.19" x2="633.76" y2="480.73" stroke="#646464" stroke-width="0.6"/>
<line x1="633.76" y1="505.60" x2="633.76" y2="500.63" stroke="#646464" stroke-width="0.6"/>
<line x1="629.96" y1="498.29" x2="629.96" y2="489.34" stroke="#c6c6c6" stroke-width="1.0"/>
<line x1="633.82" y1="499.91" x2="633.82" y2="490.96" stroke="#c6c6c6" stroke-width="1.0"/>
<line x1="631.97" y1="500.63" x2="631.97" y2="489.19" stroke="#585858" stroke-width="0.9"/>
<line x1="628.28" y1="503.30" x2="628.28" y2="478.43" stroke="#b8b8b8" stroke-width="1.1"/>
<line x1="639.23" y1="491.49" x2="639.23" y2="483.03" stroke="#646464" stroke-width="0.6"/>
<line x1="639.23" y1="507.90" x2="639.23" y2="502.93" stroke="#646464" stroke-width="0.6"/>
<line x1="641.81" y1="492.57" x2="641.81" y2="484.12" stroke="#646464" stroke-width="0.6"/>
<line x1="641.81" y1="508.98" x2="641.81" y2="504.01" stroke="#646464" stroke-width="0.6"/>
<line x1="638.01" y1="501.67" x2="638.01" y2="492.72" stroke="#c6c6c6" stroke-width="1.0"/>
<line x1="641.88" y1="503.30" x2="641.88" y2="494.34" stroke="#c6c6c6" stroke-width="1.0"/>
<line x1="640.02" y1="504.01" x2="640.02" y2="492.57" stroke="#585858" stroke-width="0.9"/>
<line x1="636.33" y1="506.68" x2="636.33" y2="481.82" stroke="#b8b8b8" stroke-width="1.1"/>
<line x1="647.28" y1="494.87" x2="647.28" y2="486.42" stroke="#646464" stroke-width="0.6"/>
<line x1="647.28" y1="511.28" x2="647.28" y2="506.31" stroke="#646464" stroke-width="0.6"/>
<line x1="649.86" y1="495.95" x2="649.86" y2="487.50" stroke="#646464" stroke-width="0.6"/>
<line x1="649.86" y1="512.36" x2="649.86" y2="507.39" stroke="#646464" stroke-width="0.6"/>
<line x1="646.06" y1="505.05" x2="646.06" y2="496.10" stroke="#c6c6c6" stroke-width="1.0"/>
<line x1="649.93" y1="506.68" x2="649.93" y2="497.73" stroke="#c6c6c6" stroke-width="1.0"/>
<line x1="648.08" y1="507.39" x2="648.08" y2="495.95" stroke="#585858" stroke-width="0.9"/>
<line x1="644.39" y1="510.06" x2="644.39" y2="485.20" stroke="#b8b8b8" stroke-width="1.1"/>
<line x1="655.34" y1="498.25" x2="655.34" y2="489.80" stroke="#646464" stroke-width="0.6"/>
<line x1="655.34" y1="514.66" x2="655.34" y2="509.69" stroke="#646464" stroke-width="0.6"/>
<line x1="657.91" y1="499.33" x2="657.91" y2="490.88" stroke="#646464" stroke-width="0.6"/>
<line x1="657.91" y1="515.75" x2="657.91" y2="510.77" stroke="#646464" stroke-width="0.6"/>
<line x1="654.11" y1="508.44" x2="654.11" y2="499.48" stroke="#c6c6c6" stroke-width="1.0"/>
<line x1="657.98" y1="510.06" x2="657.98" y2="501.11" stroke="#c6c6c6" stroke-width="1.0"/>
<line x1="656.13" y1="510.77" x2="656.13" y2="499.34" stroke="#585858" stroke-width="0.9"/>
<line x1="652.44" y1="513.45" x2="652.44" y2="488.58" stroke="#b8b8b8" stroke-width="1.1"/>
<line x1="663.39" y1="501.63" x2="663.39" y2="493.18" stroke="#646464" stroke-width="0.6"/>
<line x1="663.39" y1="518.05" x2="663.39" y2="513.07" stroke="#646464" stroke-width="0.6"/>
<line x1="665.96" y1="502.72" x2="665.96" y2="494.26" stroke="#646464" stroke-width="0.6"/>
<line x1="665.96" y1="519.13" x2="665.96" y2="514.15" stroke="#646464" stroke-width="0.6"/>
<line x1="662.17" y1="511.82" x2="662.17" y2="502.87" stroke="#c6c6c6" stroke-width="1.0"/>
<line x1="666.03" y1="513.44" x2="666.03" y2="504.49" stroke="#c6c6c6" stroke-width="1.0"/>
<line x1="664.18" y1="514.16" x2="664.18" y2="502.72" stroke="#585858" stroke-width="0.9"/>
<line x1="660.49" y1="516.83" x2="660.49" y2="491.96" stroke="#b8b8b8" stroke-width="1.1"/>
<line x1="671.44" y1="505.02" x2="671.44" y2="496.56" stroke="#646464" stroke-width="0.6"/>
<line x1="671.44" y1="521.43" x2="671.44" y2="516.45" stroke="#646464" stroke-width="0.6"/>
<line x1="674.02" y1="506.10" x2="674.02" y2="497.64" stroke="#646464" stroke-width="0.6"/>
<line x1="674.02" y1="522.51" x2="674.02" y2="517.54" stroke="#646464" stroke-width="0.6"/>
<line x1="670.22" y1="515.20" x2="670.22" y2="506.25" stroke="#c6c6c6" stroke-width="1.0"/>
<line x1="674.08" y1="516.82" x2="674.08" y2="507.87" stroke="#c6c6c6" stroke-width="1.0"/>
<line x1="672.23" y1="517.54" x2="672.23" y2="506.10" stroke="#585858" stroke-width="0.9"/>
<line x1="668.54" y1="520.21" x2="668.54" y2="495.34" stroke="#b8b8b8" stroke-width="1.1"/>
<line x1="679.49" y1="508.40" x2="679.49" y2="499.94" stroke="#646464" stroke-width="0.6"/>
<line x1="679.49" y1="524.81" x2="679.49" y2="519.84" stroke="#646464" stroke-width="0.6"/>
<line x1="682.07" y1="509.48" x2="682.07" y2="501.03" stroke="#646464" stroke-width="0.6"/>
<line x1="682.07" y1="525.89" x2="682.07" y2="520.92" stroke="#646464" stroke-width="0.6"/>
<line x1="678.27" y1="518.58" x2="678.27" y2="509.63" stroke="#c6c6c6" stroke-width="1.0"/>
<line x1="682.13" y1="520.21" x2="682.13" y2="511.25" stroke="#c6c6c6" stroke-width="1.0"/>
<line x1="680.28" y1="520.92" x2="680.28" y2="509.48" stroke="#585858" stroke-width="0.9"/>
<line x1="676.59" y1="523.59" x2="676.59" y2="498.73" stroke="#b8b8b8" stroke-width="1.1"/>
<line x1="687.54" y1="511.78" x2="687.54" y2="503.33" stroke="#646464" stroke-width="0.6"/>
<line x1="687.54" y1="528.19" x2="687.54" y2="523.22" stroke="#646464" stroke-width="0.6"/>
<line x1="690.12" y1="512.86" x2="690.12" y2="504.41" stroke="#646464" stroke-width="0.6"/>
<line x1="690.12" y1="529.27" x2="690.12" y2="524.30" stroke="#646464" stroke-width="0.6"/>
<line x1="686.32" y1="521.96" x2="686.32" y2="513.01" stroke="#c6c6c6" stroke-width="1.0"/>
<line x1="690.18" y1="523.59" x2="690.18" y2="514.64" stroke="#c6c6c6" stroke-width="1.0"/>
<line x1="688.33" y1="524.30" x2="688.33" y2="512.86" stroke="#585858" stroke-width="0.9"/>
<line x1="684.64" y1="526.97" x2="684.64" y2="502.11" stroke="#b8b8b8" stroke-width="1.1"/>
<line x1="695.59" y1="515.16" x2="695.59" y2="506.71" stroke="#646464" stroke-width="0.6"/>
<line x1="695.59" y1="531.57" x2="695.59" y2="526.60" stroke="#646464" stroke-width="0.6"/>
<line x1="698.17" y1="516.24" x2="698.17" y2="507.79" stroke="#646464" stroke-width="0.6"/>
<line x1="698.17" y1="532.66" x2="698.17" y2="527.68" stroke="#646464" stroke-width="0.6"/>
<line x1="694.37" y1="525.35" x2="694.37" y2="516.39" stroke="#c6c6c6" stroke-width="1.0"/>
<line x1="698.24" y1="526.97" x2="698.24" y2="518.02" stroke="#c6c6c6" stroke-width="1.0"/>
<line x1="696.38" y1="527.68" x2="696.38" y2="516.25" stroke="#585858" stroke-width="0.9"/>
<line x1="692.69" y1="530.36" x2="692.69" y2="505.49" stroke="#b8b8b8" stroke-width="1.1"/>
<polygon points="667.29,438.74 612.18,471.67 700.75,508.87 755.86,475.94" fill="#6c6c6c"/>
<line x1="669.00" y1="439.45" x2="613.88" y2="472.39" stroke="#a8a8a8" stroke-width="1.2"/>
<line x1="670.70" y1="440.17" x2="615.59" y2="473.10" stroke="#8e8e8e" stroke-width="0.9" stroke-dasharray="1.1 1.3"/>
<line x1="672.40" y1="440.88" x2="617.29" y2="473.82" stroke="#a8a8a8" stroke-width="1.2"/>
<line x1="674.11" y1="441.60" x2="618.99" y2="474.53" stroke="#8e8e8e" stroke-width="0.9" stroke-dasharray="1.1 1.3"/>
<line x1="675.81" y1="442.31" x2="620.70" y2="475.25" stroke="#a8a8a8" stroke-width="1.2"/>
<line x1="677.51" y1="443.03" x2="622.40" y2="475.96" stroke="#8e8e8e" stroke-width="0.9" stroke-dasharray="1.1 1.3"/>
<line x1="679.22" y1="443.74" x2="624.10" y2="476.68" stroke="#a8a8a8" stroke-width="1.2"/>
<line x1="680.92" y1="444.46" x2="625.81" y2="477.39" stroke="#8e8e8e" stroke-width="0.9" stroke-dasharray="1.1 1.3"/>
<line x1="682.62" y1="445.17" x2="627.51" y2="478.11" stroke="#a8a8a8" stroke-width="1.2"/>
<line x1="684.33" y1="445.89" x2="629.21" y2="478.82" stroke="#8e8e8e" stroke-width="0.9" stroke-dasharray="1.1 1.3"/>
<line x1="686.03" y1="446.61" x2="630.92" y2="479.54" stroke="#a8a8a8" stroke-width="1.2"/>
<line x1="687.73" y1="447.32" x2="632.62" y2="480.26" stroke="#8e8e8e" stroke-width="0.9" stroke-dasharray="1.1 1.3"/>
<line x1="689.44" y1="448.04" x2="634.32" y2="480.97" stroke="#a8a8a8" stroke-width="1.2"/>
<line x1="691.14" y1="448.75" x2="636.02" y2="481.69" stroke="#8e8e8e" stroke-width="0.9" stroke-dasharray="1.1 1.3"/>
<line x1="692.84" y1="449.47" x2="637.73" y2="482.40" stroke="#a8a8a8" stroke-width="1.2"/>
<line x1="694.54" y1="450.18" x2="639.43" y2="483.12" stroke="#8e8e8e" stroke-width="0.9" stroke-dasharray="1.1 1.3"/>
<line x1="696.25" y1="450.90" x2="641.13" y2="483.83" stroke="#a8a8a8" stroke-width="1.2"/>
<line x1="697.95" y1="451.61" x2="642.84" y2="484.55" stroke="#8e8e8e" stroke-width="0.9" stroke-dasharray="1.1 1.3"/>
<line x1="699.65" y1="452.33" x2="644.54" y2="485.26" stroke="#a8a8a8" stroke-width="1.2"/>
<line x1="701.36" y1="453.04" x2="646.24" y2="485.98" stroke="#8e8e8e" stroke-width="0.9" stroke-dasharray="1.1 1.3"/>
<line x1="703.06" y1="453.76" x2="647.95" y2="486.69" stroke="#a8a8a8" stroke-width="1.2"/>
<line x1="704.76" y1="454.47" x2="649.65" y2="487.41" stroke="#8e8e8e" stroke-width="0.9" stroke-dasharray="1.1 1.3"/>
<line x1="706.47" y1="455.19" x2="651.35" y2="488.12" stroke="#a8a8a8" stroke-width="1.2"/>
<line x1="708.17" y1="455.91" x2="653.06" y2="488.84" stroke="#8e8e8e" stroke-width="0.9" stroke-dasharray="1.1 1.3"/>
<line x1="709.87" y1="456.62" x2="654.76" y2="489.56" stroke="#a8a8a8" stroke-width="1.2"/>
<line x1="711.58" y1="457.34" x2="656.46" y2="490.27" stroke="#8e8e8e" stroke-width="0.9" stroke-dasharray="1.1 1.3"/>
<line x1="713.28" y1="458.05" x2="658.17" y2="490.99" stroke="#a8a8a8" stroke-width="1.2"/>
<line x1="714.98" y1="458.77" x2="659.87" y2="491.70" stroke="#8e8e8e" stroke-width="0.9" stroke-dasharray="1.1 1.3"/>
<line x1="716.69" y1="459.48" x2="661.57" y2="492.42" stroke="#a8a8a8" stroke-width="1.2"/>
<line x1="718.39" y1="460.20" x2="663.28" y2="493.13" stroke="#8e8e8e" stroke-width="0.9" stroke-dasharray="1.1 1.3"/>
<line x1="720.09" y1="460.91" x2="664.98" y2="493.85" stroke="#a8a8a8" stroke-width="1.2"/>
<line x1="721.80" y1="461.63" x2="666.68" y2="494.56" stroke="#8e8e8e" stroke-width="0.9" stroke-dasharray="1.1 1.3"/>
<line x1="723.50" y1="462.34" x2="668.39" y2="495.28" stroke="#a8a8a8" stroke-width="1.2"/>
<line x1="725.20" y1="463.06" x2="670.09" y2="495.99" stroke="#8e8e8e" stroke-width="0.9" stroke-dasharray="1.1 1.3"/>
<line x1="726.91" y1="463.78" x2="671.79" y2="496.71" stroke="#a8a8a8" stroke-width="1.2"/>
<line x1="728.61" y1="464.49" x2="673.49" y2="497.43" stroke="#8e8e8e" stroke-width="0.9" stroke-dasharray="1.1 1.3"/>
<line x1="730.31" y1="465.21" x2="675.20" y2="498.14" stroke="#a8a8a8" stroke-width="1.2"/>
<line x1="732.02" y1="465.92" x2="676.90" y2="498.86" stroke="#8e8e8e" stroke-width="0.9" stroke-dasharray="1.1 1.3"/>
<line x1="733.72" y1="466.64" x2="678.60" y2="499.57" stroke="#a8a8a8" stroke-width="1.2"/>
<line x1="735.42" y1="467.35" x2="680.31" y2="500.29" stroke="#8e8e8e" stroke-width="0.9" stroke-dasharray="1.1 1.3"/>
<line x1="737.12" y1="468.07" x2="682.01" y2="501.00" stroke="#a8a8a8" stroke-width="1.2"/>
<line x1="738.83" y1="468.78" x2="683.71" y2="501.72" stroke="#8e8e8e" stroke-width="0.9" stroke-dasharray="1.1 1.3"/>
<line x1="740.53" y1="469.50" x2="685.42" y2="502.43" stroke="#a8a8a8" stroke-width="1.2"/>
<line x1="742.23" y1="470.21" x2="687.12" y2="503.15" stroke="#8e8e8e" stroke-width="0.9" stroke-dasharray="1.1 1.3"/>
<line x1="743.94" y1="470.93" x2="688.82" y2="503.86" stroke="#a8a8a8" stroke-width="1.2"/>
<line x1="745.64" y1="471.64" x2="690.53" y2="504.58" stroke="#8e8e8e" stroke-width="0.9" stroke-dasharray="1.1 1.3"/>
<line x1="747.34" y1="472.36" x2="692.23" y2="505.29" stroke="#a8a8a8" stroke-width="1.2"/>
<line x1="749.05" y1="473.08" x2="693.93" y2="506.01" stroke="#8e8e8e" stroke-width="0.9" stroke-dasharray="1.1 1.3"/>
<line x1="750.75" y1="473.79" x2="695.64" y2="506.73" stroke="#a8a8a8" stroke-width="1.2"/>
<line x1="752.45" y1="474.51" x2="697.34" y2="507.44" stroke="#8e8e8e" stroke-width="0.9" stroke-dasharray="1.1 1.3"/>
<line x1="754.16" y1="475.22" x2="699.04" y2="508.16" stroke="#a8a8a8" stroke-width="1.2"/>
<line x1="755.86" y1="475.94" x2="700.75" y2="508.87" stroke="#8e8e8e" stroke-width="0.9" stroke-dasharray="1.1 1.3"/>
<line x1="755.86" y1="475.94" x2="700.75" y2="508.87" stroke="#b8b8b8" stroke-width="0.8"/>
<polygon points="614.21,470.46 612.18,471.67 700.75,508.87 702.78,507.66" fill="#505050"/>
<line x1="617.11" y1="471.67" x2="615.08" y2="472.89" stroke="#646464" stroke-width="0.6"/>
<line x1="619.69" y1="472.76" x2="617.66" y2="473.97" stroke="#646464" stroke-width="0.6"/>
<line x1="622.26" y1="473.84" x2="620.23" y2="475.05" stroke="#b0b0b0" stroke-width="1.0"/>
<line x1="625.16" y1="475.06" x2="623.13" y2="476.27" stroke="#646464" stroke-width="0.6"/>
<line x1="627.74" y1="476.14" x2="625.71" y2="477.35" stroke="#646464" stroke-width="0.6"/>
<line x1="630.31" y1="477.22" x2="628.28" y2="478.43" stroke="#b0b0b0" stroke-width="1.0"/>
<line x1="633.21" y1="478.44" x2="631.18" y2="479.65" stroke="#646464" stroke-width="0.6"/>
<line x1="635.79" y1="479.52" x2="633.76" y2="480.73" stroke="#646464" stroke-width="0.6"/>
<line x1="638.36" y1="480.60" x2="636.33" y2="481.82" stroke="#b0b0b0" stroke-width="1.0"/>
<line x1="641.26" y1="481.82" x2="639.23" y2="483.03" stroke="#646464" stroke-width="0.6"/>
<line x1="643.84" y1="482.90" x2="641.81" y2="484.12" stroke="#646464" stroke-width="0.6"/>
<line x1="646.42" y1="483.98" x2="644.39" y2="485.20" stroke="#b0b0b0" stroke-width="1.0"/>
<line x1="649.31" y1="485.20" x2="647.28" y2="486.42" stroke="#646464" stroke-width="0.6"/>
<line x1="651.89" y1="486.28" x2="649.86" y2="487.50" stroke="#646464" stroke-width="0.6"/>
<line x1="654.47" y1="487.37" x2="652.44" y2="488.58" stroke="#b0b0b0" stroke-width="1.0"/>
<line x1="657.37" y1="488.58" x2="655.34" y2="489.80" stroke="#646464" stroke-width="0.6"/>
<line x1="659.94" y1="489.67" x2="657.91" y2="490.88" stroke="#646464" stroke-width="0.6"/>
<line x1="662.52" y1="490.75" x2="660.49" y2="491.96" stroke="#b0b0b0" stroke-width="1.0"/>
<line x1="665.42" y1="491.97" x2="663.39" y2="493.18" stroke="#646464" stroke-width="0.6"/>
<line x1="667.99" y1="493.05" x2="665.96" y2="494.26" stroke="#646464" stroke-width="0.6"/>
<line x1="670.57" y1="494.13" x2="668.54" y2="495.34" stroke="#b0b0b0" stroke-width="1.0"/>
<line x1="673.47" y1="495.35" x2="671.44" y2="496.56" stroke="#646464" stroke-width="0.6"/>
<line x1="676.05" y1="496.43" x2="674.02" y2="497.64" stroke="#646464" stroke-width="0.6"/>
<line x1="678.62" y1="497.51" x2="676.59" y2="498.73" stroke="#b0b0b0" stroke-width="1.0"/>
<line x1="681.52" y1="498.73" x2="679.49" y2="499.94" stroke="#646464" stroke-width="0.6"/>
<line x1="684.10" y1="499.81" x2="682.07" y2="501.03" stroke="#646464" stroke-width="0.6"/>
<line x1="686.67" y1="500.89" x2="684.64" y2="502.11" stroke="#b0b0b0" stroke-width="1.0"/>
<line x1="689.57" y1="502.11" x2="687.54" y2="503.33" stroke="#646464" stroke-width="0.6"/>
<line x1="692.15" y1="503.19" x2="690.12" y2="504.41" stroke="#646464" stroke-width="0.6"/>
<line x1="694.72" y1="504.28" x2="692.69" y2="505.49" stroke="#b0b0b0" stroke-width="1.0"/>
<line x1="697.62" y1="505.49" x2="695.59" y2="506.71" stroke="#646464" stroke-width="0.6"/>
<line x1="700.20" y1="506.58" x2="698.17" y2="507.79" stroke="#646464" stroke-width="0.6"/>
<linearGradient id="g4" gradientUnits="userSpaceOnUse" x1="873.8" y1="542.4" x2="928.9" y2="484.6"><stop offset="0" stop-color="#dcdcdc"/><stop offset="0.45" stop-color="#a8a8a8"/><stop offset="1" stop-color="#7c7c7c"/></linearGradient>
<polygon points="873.81,542.44 928.92,509.50 928.92,484.64 873.81,517.57" fill="url(#g4)"/>
<polygon points="785.24,505.24 873.81,542.44 873.81,517.57 785.24,480.37" fill="#464646"/>
<polygon points="784.50,500.71 873.07,537.91 873.07,526.47 784.50,489.27" fill="#a0a0a0"/>
<line x1="788.14" y1="490.04" x2="788.14" y2="481.59" stroke="#646464" stroke-width="0.6"/>
<line x1="788.14" y1="506.46" x2="788.14" y2="501.48" stroke="#646464" stroke-width="0.6"/>
<line x1="790.72" y1="491.13" x2="790.72" y2="482.67" stroke="#646464" stroke-width="0.6"/>
<line x1="790.72" y1="507.54" x2="790.72" y2="502.56" stroke="#646464" stroke-width="0.6"/>
<line x1="786.92" y1="500.23" x2="786.92" y2="491.28" stroke="#c6c6c6" stroke-width="1.0"/>
<line x1="790.78" y1="501.85" x2="790.78" y2="492.90" stroke="#c6c6c6" stroke-width="1.0"/>
<line x1="788.93" y1="502.57" x2="788.93" y2="491.13" stroke="#585858" stroke-width="0.9"/>
<line x1="796.19" y1="493.43" x2="796.19" y2="484.97" stroke="#646464" stroke-width="0.6"/>
<line x1="796.19" y1="509.84" x2="796.19" y2="504.86" stroke="#646464" stroke-width="0.6"/>
<line x1="798.77" y1="494.51" x2="798.77" y2="486.05" stroke="#646464" stroke-width="0.6"/>
<line x1="798.77" y1="510.92" x2="798.77" y2="505.95" stroke="#646464" stroke-width="0.6"/>
<line x1="794.97" y1="503.61" x2="794.97" y2="494.66" stroke="#c6c6c6" stroke-width="1.0"/>
<line x1="798.84" y1="505.23" x2="798.84" y2="496.28" stroke="#c6c6c6" stroke-width="1.0"/>
<line x1="796.98" y1="505.95" x2="796.98" y2="494.51" stroke="#585858" stroke-width="0.9"/>
<line x1="793.29" y1="508.62" x2="793.29" y2="483.75" stroke="#b8b8b8" stroke-width="1.1"/>
<line x1="804.24" y1="496.81" x2="804.24" y2="488.35" stroke="#646464" stroke-width="0.6"/>
<line x1="804.24" y1="513.22" x2="804.24" y2="508.25" stroke="#646464" stroke-width="0.6"/>
<line x1="806.82" y1="497.89" x2="806.82" y2="489.44" stroke="#646464" stroke-width="0.6"/>
<line x1="806.82" y1="514.30" x2="806.82" y2="509.33" stroke="#646464" stroke-width="0.6"/>
<line x1="803.02" y1="506.99" x2="803.02" y2="498.04" stroke="#c6c6c6" stroke-width="1.0"/>
<line x1="806.89" y1="508.62" x2="806.89" y2="499.66" stroke="#c6c6c6" stroke-width="1.0"/>
<line x1="805.04" y1="509.33" x2="805.04" y2="497.89" stroke="#585858" stroke-width="0.9"/>
<line x1="801.35" y1="512.00" x2="801.35" y2="487.14" stroke="#b8b8b8" stroke-width="1.1"/>
<line x1="812.30" y1="500.19" x2="812.30" y2="491.74" stroke="#646464" stroke-width="0.6"/>
<line x1="812.30" y1="516.60" x2="812.30" y2="511.63" stroke="#646464" stroke-width="0.6"/>
<line x1="814.87" y1="501.27" x2="814.87" y2="492.82" stroke="#646464" stroke-width="0.6"/>
<line x1="814.87" y1="517.68" x2="814.87" y2="512.71" stroke="#646464" stroke-width="0.6"/>
<line x1="811.07" y1="510.37" x2="811.07" y2="501.42" stroke="#c6c6c6" stroke-width="1.0"/>
<line x1="814.94" y1="512.00" x2="814.94" y2="503.05" stroke="#c6c6c6" stroke-width="1.0"/>
<line x1="813.09" y1="512.71" x2="813.09" y2="501.27" stroke="#585858" stroke-width="0.9"/>
<line x1="809.40" y1="515.38" x2="809.40" y2="490.52" stroke="#b8b8b8" stroke-width="1.1"/>
<line x1="820.35" y1="503.57" x2="820.35" y2="495.12" stroke="#646464" stroke-width="0.6"/>
<line x1="820.35" y1="519.98" x2="820.35" y2="515.01" stroke="#646464" stroke-width="0.6"/>
<line x1="822.92" y1="504.65" x2="822.92" y2="496.20" stroke="#646464" stroke-width="0.6"/>
<line x1="822.92" y1="521.07" x2="822.92" y2="516.09" stroke="#646464" stroke-width="0.6"/>
<line x1="819.13" y1="513.76" x2="819.13" y2="504.80" stroke="#c6c6c6" stroke-width="1.0"/>
<line x1="822.99" y1="515.38" x2="822.99" y2="506.43" stroke="#c6c6c6" stroke-width="1.0"/>
<line x1="821.14" y1="516.09" x2="821.14" y2="504.66" stroke="#585858" stroke-width="0.9"/>
<line x1="817.45" y1="518.77" x2="817.45" y2="493.90" stroke="#b8b8b8" stroke-width="1.1"/>
<line x1="828.40" y1="506.95" x2="828.40" y2="498.50" stroke="#646464" stroke-width="0.6"/>
<line x1="828.40" y1="523.37" x2="828.40" y2="518.39" stroke="#646464" stroke-width="0.6"/>
<line x1="830.97" y1="508.04" x2="830.97" y2="499.58" stroke="#646464" stroke-width="0.6"/>
<line x1="830.97" y1="524.45" x2="830.97" y2="519.47" stroke="#646464" stroke-width="0.6"/>
<line x1="827.18" y1="517.14" x2="827.18" y2="508.19" stroke="#c6c6c6" stroke-width="1.0"/>
<line x1="831.04" y1="518.76" x2="831.04" y2="509.81" stroke="#c6c6c6" stroke-width="1.0"/>
<line x1="829.19" y1="519.48" x2="829.19" y2="508.04" stroke="#585858" stroke-width="0.9"/>
<line x1="825.50" y1="522.15" x2="825.50" y2="497.28" stroke="#b8b8b8" stroke-width="1.1"/>
<line x1="836.45" y1="510.34" x2="836.45" y2="501.88" stroke="#646464" stroke-width="0.6"/>
<line x1="836.45" y1="526.75" x2="836.45" y2="521.77" stroke="#646464" stroke-width="0.6"/>
<line x1="839.03" y1="511.42" x2="839.03" y2="502.96" stroke="#646464" stroke-width="0.6"/>
<line x1="839.03" y1="527.83" x2="839.03" y2="522.86" stroke="#646464" stroke-width="0.6"/>
<line x1="835.23" y1="520.52" x2="835.23" y2="511.57" stroke="#c6c6c6" stroke-width="1.0"/>
<line x1="839.09" y1="522.14" x2="839.09" y2="513.19" stroke="#c6c6c6" stroke-width="1.0"/>
<line x1="837.24" y1="522.86" x2="837.24" y2="511.42" stroke="#585858" stroke-width="0.9"/>
<line x1="833.55" y1="525.53" x2="833.55" y2="500.66" stroke="#b8b8b8" stroke-width="1.1"/>
<line x1="844.50" y1="513.72" x2="844.50" y2="505.26" stroke="#646464" stroke-width="0.6"/>
<line x1="844.50" y1="530.13" x2="844.50" y2="525.16" stroke="#646464" stroke-width="0.6"/>
<line x1="847.08" y1="514.80" x2="847.08" y2="506.35" stroke="#646464" stroke-width="0.6"/>
<line x1="847.08" y1="531.21" x2="847.08" y2="526.24" stroke="#646464" stroke-width="0.6"/>
<line x1="843.28" y1="523.90" x2="843.28" y2="514.95" stroke="#c6c6c6" stroke-width="1.0"/>
<line x1="847.14" y1="525.53" x2="847.14" y2="516.57" stroke="#c6c6c6" stroke-width="1.0"/>
<line x1="845.29" y1="526.24" x2="845.29" y2="514.80" stroke="#585858" stroke-width="0.9"/>
<line x1="841.60" y1="528.91" x2="841.60" y2="504.05" stroke="#b8b8b8" stroke-width="1.1"/>
<line x1="852.55" y1="517.10" x2="852.55" y2="508.65" stroke="#646464" stroke-width="0.6"/>
<line x1="852.55" y1="533.51" x2="852.55" y2="528.54" stroke="#646464" stroke-width="0.6"/>
<line x1="855.13" y1="518.18" x2="855.13" y2="509.73" stroke="#646464" stroke-width="0.6"/>
<line x1="855.13" y1="534.59" x2="855.13" y2="529.62" stroke="#646464" stroke-width="0.6"/>
<line x1="851.33" y1="527.28" x2="851.33" y2="518.33" stroke="#c6c6c6" stroke-width="1.0"/>
<line x1="855.20" y1="528.91" x2="855.20" y2="519.96" stroke="#c6c6c6" stroke-width="1.0"/>
<line x1="853.34" y1="529.62" x2="853.34" y2="518.18" stroke="#585858" stroke-width="0.9"/>
<line x1="849.65" y1="532.29" x2="849.65" y2="507.43" stroke="#b8b8b8" stroke-width="1.1"/>
<line x1="860.60" y1="520.48" x2="860.60" y2="512.03" stroke="#646464" stroke-width="0.6"/>
<line x1="860.60" y1="536.89" x2="860.60" y2="531.92" stroke="#646464" stroke-width="0.6"/>
<line x1="863.18" y1="521.56" x2="863.18" y2="513.11" stroke="#646464" stroke-width="0.6"/>
<line x1="863.18" y1="537.98" x2="863.18" y2="533.00" stroke="#646464" stroke-width="0.6"/>
<line x1="859.38" y1="530.67" x2="859.38" y2="521.71" stroke="#c6c6c6" stroke-width="1.0"/>
<line x1="863.25" y1="532.29" x2="863.25" y2="523.34" stroke="#c6c6c6" stroke-width="1.0"/>
<line x1="861.40" y1="533.00" x2="861.40" y2="521.57" stroke="#585858" stroke-width="0.9"/>
<line x1="857.71" y1="535.68" x2="857.71" y2="510.81" stroke="#b8b8b8" stroke-width="1.1"/>
<line x1="868.66" y1="523.86" x2="868.66" y2="515.41" stroke="#646464" stroke-width="0.6"/>
<line x1="868.66" y1="540.27" x2="868.66" y2="535.30" stroke="#646464" stroke-width="0.6"/>
<line x1="871.23" y1="524.95" x2="871.23" y2="516.49" stroke="#646464" stroke-width="0.6"/>
<line x1="871.23" y1="541.36" x2="871.23" y2="536.38" stroke="#646464" stroke-width="0.6"/>
<line x1="867.43" y1="534.05" x2="867.43" y2="525.10" stroke="#c6c6c6" stroke-width="1.0"/>
<line x1="871.30" y1="535.67" x2="871.30" y2="526.72" stroke="#c6c6c6" stroke-width="1.0"/>
<line x1="869.45" y1="536.39" x2="869.45" y2="524.95" stroke="#585858" stroke-width="0.9"/>
<line x1="865.76" y1="539.06" x2="865.76" y2="514.19" stroke="#b8b8b8" stroke-width="1.1"/>
<polygon points="840.36,447.44 785.24,480.37 873.81,517.57 928.92,484.64" fill="#6c6c6c"/>
<line x1="842.06" y1="448.15" x2="786.95" y2="481.09" stroke="#a8a8a8" stroke-width="1.2"/>
<line x1="843.76" y1="448.87" x2="788.65" y2="481.80" stroke="#8e8e8e" stroke-width="0.9" stroke-dasharray="1.1 1.3"/>
<line x1="845.47" y1="449.58" x2="790.35" y2="482.52" stroke="#a8a8a8" stroke-width="1.2"/>
<line x1="847.17" y1="450.30" x2="792.06" y2="483.23" stroke="#8e8e8e" stroke-width="0.9" stroke-dasharray="1.1 1.3"/>
<line x1="848.87" y1="451.01" x2="793.76" y2="483.95" stroke="#a8a8a8" stroke-width="1.2"/>
<line x1="850.58" y1="451.73" x2="795.46" y2="484.66" stroke="#8e8e8e" stroke-width="0.9" stroke-dasharray="1.1 1.3"/>
<line x1="852.28" y1="452.45" x2="797.16" y2="485.38" stroke="#a8a8a8" stroke-width="1.2"/>
<line x1="853.98" y1="453.16" x2="798.87" y2="486.10" stroke="#8e8e8e" stroke-width="0.9" stroke-dasharray="1.1 1.3"/>
<line x1="855.68" y1="453.88" x2="800.57" y2="486.81" stroke="#a8a8a8" stroke-width="1.2"/>
<line x1="857.39" y1="454.59" x2="802.27" y2="487.53" stroke="#8e8e8e" stroke-width="0.9" stroke-dasharray="1.1 1.3"/>
<line x1="859.09" y1="455.31" x2="803.98" y2="488.24" stroke="#a8a8a8" stroke-width="1.2"/>
<line x1="860.79" y1="456.02" x2="805.68" y2="488.96" stroke="#8e8e8e" stroke-width="0.9" stroke-dasharray="1.1 1.3"/>
<line x1="862.50" y1="456.74" x2="807.38" y2="489.67" stroke="#a8a8a8" stroke-width="1.2"/>
<line x1="864.20" y1="457.45" x2="809.09" y2="490.39" stroke="#8e8e8e" stroke-width="0.9" stroke-dasharray="1.1 1.3"/>
<line x1="865.90" y1="458.17" x2="810.79" y2="491.10" stroke="#a8a8a8" stroke-width="1.2"/>
<line x1="867.61" y1="458.88" x2="812.49" y2="491.82" stroke="#8e8e8e" stroke-width="0.9" stroke-dasharray="1.1 1.3"/>
<line x1="869.31" y1="459.60" x2="814.20" y2="492.53" stroke="#a8a8a8" stroke-width="1.2"/>
<line x1="871.01" y1="460.31" x2="815.90" y2="493.25" stroke="#8e8e8e" stroke-width="0.9" stroke-dasharray="1.1 1.3"/>
<line x1="872.72" y1="461.03" x2="817.60" y2="493.96" stroke="#a8a8a8" stroke-width="1.2"/>
<line x1="874.42" y1="461.75" x2="819.31" y2="494.68" stroke="#8e8e8e" stroke-width="0.9" stroke-dasharray="1.1 1.3"/>
<line x1="876.12" y1="462.46" x2="821.01" y2="495.40" stroke="#a8a8a8" stroke-width="1.2"/>
<line x1="877.83" y1="463.18" x2="822.71" y2="496.11" stroke="#8e8e8e" stroke-width="0.9" stroke-dasharray="1.1 1.3"/>
<line x1="879.53" y1="463.89" x2="824.42" y2="496.83" stroke="#a8a8a8" stroke-width="1.2"/>
<line x1="881.23" y1="464.61" x2="826.12" y2="497.54" stroke="#8e8e8e" stroke-width="0.9" stroke-dasharray="1.1 1.3"/>
<line x1="882.94" y1="465.32" x2="827.82" y2="498.26" stroke="#a8a8a8" stroke-width="1.2"/>
<line x1="884.64" y1="466.04" x2="829.53" y2="498.97" stroke="#8e8e8e" stroke-width="0.9" stroke-dasharray="1.1 1.3"/>
<line x1="886.34" y1="466.75" x2="831.23" y2="499.69" stroke="#a8a8a8" stroke-width="1.2"/>
<line x1="888.05" y1="467.47" x2="832.93" y2="500.40" stroke="#8e8e8e" stroke-width="0.9" stroke-dasharray="1.1 1.3"/>
<line x1="889.75" y1="468.18" x2="834.63" y2="501.12" stroke="#a8a8a8" stroke-width="1.2"/>
<line x1="891.45" y1="468.90" x2="836.34" y2="501.83" stroke="#8e8e8e" stroke-width="0.9" stroke-dasharray="1.1 1.3"/>
<line x1="893.15" y1="469.62" x2="838.04" y2="502.55" stroke="#a8a8a8" stroke-width="1.2"/>
<line x1="894.86" y1="470.33" x2="839.74" y2="503.27" stroke="#8e8e8e" stroke-width="0.9" stroke-dasharray="1.1 1.3"/>
<line x1="896.56" y1="471.05" x2="841.45" y2="503.98" stroke="#a8a8a8" stroke-width="1.2"/>
<line x1="898.26" y1="471.76" x2="843.15" y2="504.70" stroke="#8e8e8e" stroke-width="0.9" stroke-dasharray="1.1 1.3"/>
<line x1="899.97" y1="472.48" x2="844.85" y2="505.41" stroke="#a8a8a8" stroke-width="1.2"/>
<line x1="901.67" y1="473.19" x2="846.56" y2="506.13" stroke="#8e8e8e" stroke-width="0.9" stroke-dasharray="1.1 1.3"/>
<line x1="903.37" y1="473.91" x2="848.26" y2="506.84" stroke="#a8a8a8" stroke-width="1.2"/>
<line x1="905.08" y1="474.62" x2="849.96" y2="507.56" stroke="#8e8e8e" stroke-width="0.9" stroke-dasharray="1.1 1.3"/>
<line x1="906.78" y1="475.34" x2="851.67" y2="508.27" stroke="#a8a8a8" stroke-width="1.2"/>
<line x1="908.48" y1="476.05" x2="853.37" y2="508.99" stroke="#8e8e8e" stroke-width="0.9" stroke-dasharray="1.1 1.3"/>
<line x1="910.19" y1="476.77" x2="855.07" y2="509.70" stroke="#a8a8a8" stroke-width="1.2"/>
<line x1="911.89" y1="477.48" x2="856.78" y2="510.42" stroke="#8e8e8e" stroke-width="0.9" stroke-dasharray="1.1 1.3"/>
<line x1="913.59" y1="478.20" x2="858.48" y2="511.13" stroke="#a8a8a8" stroke-width="1.2"/>
<line x1="915.30" y1="478.92" x2="860.18" y2="511.85" stroke="#8e8e8e" stroke-width="0.9" stroke-dasharray="1.1 1.3"/>
<line x1="917.00" y1="479.63" x2="861.89" y2="512.57" stroke="#a8a8a8" stroke-width="1.2"/>
<line x1="918.70" y1="480.35" x2="863.59" y2="513.28" stroke="#8e8e8e" stroke-width="0.9" stroke-dasharray="1.1 1.3"/>
<line x1="920.41" y1="481.06" x2="865.29" y2="514.00" stroke="#a8a8a8" stroke-width="1.2"/>
<line x1="922.11" y1="481.78" x2="867.00" y2="514.71" stroke="#8e8e8e" stroke-width="0.9" stroke-dasharray="1.1 1.3"/>
<line x1="923.81" y1="482.49" x2="868.70" y2="515.43" stroke="#a8a8a8" stroke-width="1.2"/>
<line x1="925.52" y1="483.21" x2="870.40" y2="516.14" stroke="#8e8e8e" stroke-width="0.9" stroke-dasharray="1.1 1.3"/>
<line x1="927.22" y1="483.92" x2="872.10" y2="516.86" stroke="#a8a8a8" stroke-width="1.2"/>
<line x1="928.92" y1="484.64" x2="873.81" y2="517.57" stroke="#8e8e8e" stroke-width="0.9" stroke-dasharray="1.1 1.3"/>
<line x1="928.92" y1="484.64" x2="873.81" y2="517.57" stroke="#b8b8b8" stroke-width="0.8"/>
<polygon points="787.27,479.16 785.24,480.37 873.81,517.57 875.84,516.36" fill="#505050"/>
<line x1="790.17" y1="480.38" x2="788.14" y2="481.59" stroke="#646464" stroke-width="0.6"/>
<line x1="792.75" y1="481.46" x2="790.72" y2="482.67" stroke="#646464" stroke-width="0.6"/>
<line x1="795.32" y1="482.54" x2="793.29" y2="483.75" stroke="#b0b0b0" stroke-width="1.0"/>
<line x1="798.22" y1="483.76" x2="796.19" y2="484.97" stroke="#646464" stroke-width="0.6"/>
<line x1="800.80" y1="484.84" x2="798.77" y2="486.05" stroke="#646464" stroke-width="0.6"/>
<line x1="803.38" y1="485.92" x2="801.35" y2="487.14" stroke="#b0b0b0" stroke-width="1.0"/>
<line x1="806.27" y1="487.14" x2="804.24" y2="488.35" stroke="#646464" stroke-width="0.6"/>
<line x1="808.85" y1="488.22" x2="806.82" y2="489.44" stroke="#646464" stroke-width="0.6"/>
<line x1="811.43" y1="489.30" x2="809.40" y2="490.52" stroke="#b0b0b0" stroke-width="1.0"/>
<line x1="814.33" y1="490.52" x2="812.30" y2="491.74" stroke="#646464" stroke-width="0.6"/>
<line x1="816.90" y1="491.60" x2="814.87" y2="492.82" stroke="#646464" stroke-width="0.6"/>
<line x1="819.48" y1="492.69" x2="817.45" y2="493.90" stroke="#b0b0b0" stroke-width="1.0"/>
<line x1="822.38" y1="493.90" x2="820.35" y2="495.12" stroke="#646464" stroke-width="0.6"/>
<line x1="824.95" y1="494.99" x2="822.92" y2="496.20" stroke="#646464" stroke-width="0.6"/>
<line x1="827.53" y1="496.07" x2="825.50" y2="497.28" stroke="#b0b0b0" stroke-width="1.0"/>
<line x1="830.43" y1="497.29" x2="828.40" y2="498.50" stroke="#646464" stroke-width="0.6"/>
<line x1="833.00" y1="498.37" x2="830.97" y2="499.58" stroke="#646464" stroke-width="0.6"/>
<line x1="835.58" y1="499.45" x2="833.55" y2="500.66" stroke="#b0b0b0" stroke-width="1.0"/>
<line x1="838.48" y1="500.67" x2="836.45" y2="501.88" stroke="#646464" stroke-width="0.6"/>
<line x1="841.06" y1="501.75" x2="839.03" y2="502.96" stroke="#646464" stroke-width="0.6"/>
<line x1="843.63" y1="502.83" x2="841.60" y2="504.05" stroke="#b0b0b0" stroke-width="1.0"/>
<line x1="846.53" y1="504.05" x2="844.50" y2="505.26" stroke="#646464" stroke-width="0.6"/>
<line x1="849.11" y1="505.13" x2="847.08" y2="506.35" stroke="#646464" stroke-width="0.6"/>
<line x1="851.68" y1="506.21" x2="849.65" y2="507.43" stroke="#b0b0b0" stroke-width="1.0"/>
<line x1="854.58" y1="507.43" x2="852.55" y2="508.65" stroke="#646464" stroke-width="0.6"/>
<line x1="857.16" y1="508.51" x2="855.13" y2="509.73" stroke="#646464" stroke-width="0.6"/>
<line x1="859.74" y1="509.60" x2="857.71" y2="510.81" stroke="#b0b0b0" stroke-width="1.0"/>
<line x1="862.63" y1="510.81" x2="860.60" y2="512.03" stroke="#646464" stroke-width="0.6"/>
<line x1="865.21" y1="511.90" x2="863.18" y2="513.11" stroke="#646464" stroke-width="0.6"/>
<line x1="867.79" y1="512.98" x2="865.76" y2="514.19" stroke="#b0b0b0" stroke-width="1.0"/>
<line x1="870.69" y1="514.20" x2="868.66" y2="515.41" stroke="#646464" stroke-width="0.6"/>
<line x1="873.26" y1="515.28" x2="871.23" y2="516.49" stroke="#646464" stroke-width="0.6"/>
<linearGradient id="g5" gradientUnits="userSpaceOnUse" x1="637.9" y1="571.3" x2="693.0" y2="513.5"><stop offset="0" stop-color="#dcdcdc"/><stop offset="0.45" stop-color="#a8a8a8"/><stop offset="1" stop-color="#7c7c7c"/></linearGradient>
<polygon points="637.86,571.32 692.98,538.38 692.98,513.52 637.86,546.45" fill="url(#g5)"/>
<polygon points="549.30,534.11 637.86,571.32 637.86,546.45 549.30,509.25" fill="#464646"/>
<polygon points="548.56,529.58 637.12,566.78 637.12,555.35 548.56,518.14" fill="#a0a0a0"/>
<line x1="552.19" y1="518.92" x2="552.19" y2="510.47" stroke="#646464" stroke-width="0.6"/>
<line x1="552.19" y1="535.33" x2="552.19" y2="530.36" stroke="#646464" stroke-width="0.6"/>
<line x1="554.77" y1="520.00" x2="554.77" y2="511.55" stroke="#646464" stroke-width="0.6"/>
<line x1="554.77" y1="536.41" x2="554.77" y2="531.44" stroke="#646464" stroke-width="0.6"/>
<line x1="550.97" y1="529.10" x2="550.97" y2="520.15" stroke="#c6c6c6" stroke-width="1.0"/>
<line x1="554.84" y1="530.73" x2="554.84" y2="521.78" stroke="#c6c6c6" stroke-width="1.0"/>
<line x1="552.99" y1="531.44" x2="552.99" y2="520.00" stroke="#585858" stroke-width="0.9"/>
<line x1="560.25" y1="522.30" x2="560.25" y2="513.85" stroke="#646464" stroke-width="0.6"/>
<line x1="560.25" y1="538.71" x2="560.25" y2="533.74" stroke="#646464" stroke-width="0.6"/>
<line x1="562.82" y1="523.38" x2="562.82" y2="514.93" stroke="#646464" stroke-width="0.6"/>
<line x1="562.82" y1="539.80" x2="562.82" y2="534.82" stroke="#646464" stroke-width="0.6"/>
<line x1="559.02" y1="532.49" x2="559.02" y2="523.54" stroke="#c6c6c6" stroke-width="1.0"/>
<line x1="562.89" y1="534.11" x2="562.89" y2="525.16" stroke="#c6c6c6" stroke-width="1.0"/>
<line x1="561.04" y1="534.82" x2="561.04" y2="523.39" stroke="#585858" stroke-width="0.9"/>
<line x1="557.35" y1="537.50" x2="557.35" y2="512.63" stroke="#b8b8b8" stroke-width="1.1"/>
<line x1="568.30" y1="525.68" x2="568.30" y2="517.23" stroke="#646464" stroke-width="0.6"/>
<line x1="568.30" y1="542.10" x2="568.30" y2="537.12" stroke="#646464" stroke-width="0.6"/>
<line x1="570.87" y1="526.77" x2="570.87" y2="518.31" stroke="#646464" stroke-width="0.6"/>
<line x1="570.87" y1="543.18" x2="570.87" y2="538.20" stroke="#646464" stroke-width="0.6"/>
<line x1="567.08" y1="535.87" x2="567.08" y2="526.92" stroke="#c6c6c6" stroke-width="1.0"/>
<line x1="570.94" y1="537.49" x2="570.94" y2="528.54" stroke="#c6c6c6" stroke-width="1.0"/>
<line x1="569.09" y1="538.21" x2="569.09" y2="526.77" stroke="#585858" stroke-width="0.9"/>
<line x1="565.40" y1="540.88" x2="565.40" y2="516.01" stroke="#b8b8b8" stroke-width="1.1"/>
<line x1="576.35" y1="529.07" x2="576.35" y2="520.61" stroke="#646464" stroke-width="0.6"/>
<line x1="576.35" y1="545.48" x2="576.35" y2="540.50" stroke="#646464" stroke-width="0.6"/>
<line x1="578.93" y1="530.15" x2="578.93" y2="521.69" stroke="#646464" stroke-width="0.6"/>
<line x1="578.93" y1="546.56" x2="578.93" y2="541.59" stroke="#646464" stroke-width="0.6"/>
<line x1="575.13" y1="539.25" x2="575.13" y2="530.30" stroke="#c6c6c6" stroke-width="1.0"/>
<line x1="578.99" y1="540.87" x2="578.99" y2="531.92" stroke="#c6c6c6" stroke-width="1.0"/>
<line x1="577.14" y1="541.59" x2="577.14" y2="530.15" stroke="#585858" stroke-width="0.9"/>
<line x1="573.45" y1="544.26" x2="573.45" y2="519.39" stroke="#b8b8b8" stroke-width="1.1"/>
<line x1="584.40" y1="532.45" x2="584.40" y2="523.99" stroke="#646464" stroke-width="0.6"/>
<line x1="584.40" y1="548.86" x2="584.40" y2="543.89" stroke="#646464" stroke-width="0.6"/>
<line x1="586.98" y1="533.53" x2="586.98" y2="525.08" stroke="#646464" stroke-width="0.6"/>
<line x1="586.98" y1="549.94" x2="586.98" y2="544.97" stroke="#646464" stroke-width="0.6"/>
<line x1="583.18" y1="542.63" x2="583.18" y2="533.68" stroke="#c6c6c6" stroke-width="1.0"/>
<line x1="587.04" y1="544.26" x2="587.04" y2="535.30" stroke="#c6c6c6" stroke-width="1.0"/>
<line x1="585.19" y1="544.97" x2="585.19" y2="533.53" stroke="#585858" stroke-width="0.9"/>
<line x1="581.50" y1="547.64" x2="581.50" y2="522.78" stroke="#b8b8b8" stroke-width="1.1"/>
<line x1="592.45" y1="535.83" x2="592.45" y2="527.38" stroke="#646464" stroke-width="0.6"/>
<line x1="592.45" y1="552.24" x2="592.45" y2="547.27" stroke="#646464" stroke-width="0.6"/>
<line x1="595.03" y1="536.91" x2="595.03" y2="528.46" stroke="#646464" stroke-width="0.6"/>
<line x1="595.03" y1="553.32" x2="595.03" y2="548.35" stroke="#646464" stroke-width="0.6"/>
<line x1="591.23" y1="546.01" x2="591.23" y2="537.06" stroke="#c6c6c6" stroke-width="1.0"/>
<line x1="595.09" y1="547.64" x2="595.09" y2="538.69" stroke="#c6c6c6" stroke-width="1.0"/>
<line x1="593.24" y1="548.35" x2="593.24" y2="536.91" stroke="#585858" stroke-width="0.9"/>
<line x1="589.55" y1="551.02" x2="589.55" y2="526.16" stroke="#b8b8b8" stroke-width="1.1"/>
<line x1="600.50" y1="539.21" x2="600.50" y2="530.76" stroke="#646464" stroke-width="0.6"/>
<line x1="600.50" y1="555.62" x2="600.50" y2="550.65" stroke="#646464" stroke-width="0.6"/>
<line x1="603.08" y1="540.29" x2="603.08" y2="531.84" stroke="#646464" stroke-width="0.6"/>
<line x1="603.08" y1="556.71" x2="603.08" y2="551.73" stroke="#646464" stroke-width="0.6"/>
<line x1="599.28" y1="549.40" x2="599.28" y2="540.45" stroke="#c6c6c6" stroke-width="1.0"/>
<line x1="603.15" y1="551.02" x2="603.15" y2="542.07" stroke="#c6c6c6" stroke-width="1.0"/>
<line x1="601.29" y1="551.73" x2="601.29" y2="540.30" stroke="#585858" stroke-width="0.9"/>
<line x1="597.60" y1="554.41" x2="597.60" y2="529.54" stroke="#b8b8b8" stroke-width="1.1"/>
<line x1="608.55" y1="542.59" x2="608.55" y2="534.14" stroke="#646464" stroke-width="0.6"/>
<line x1="608.55" y1="559.01" x2="608.55" y2="554.03" stroke="#646464" stroke-width="0.6"/>
<line x1="611.13" y1="543.68" x2="611.13" y2="535.22" stroke="#646464" stroke-width="0.6"/>
<line x1="611.13" y1="560.09" x2="611.13" y2="555.11" stroke="#646464" stroke-width="0.6"/>
<line x1="607.33" y1="552.78" x2="607.33" y2="543.83" stroke="#c6c6c6" stroke-width="1.0"/>
<line x1="611.20" y1="554.40" x2="611.20" y2="545.45" stroke="#c6c6c6" stroke-width="1.0"/>
<line x1="609.35" y1="555.12" x2="609.35" y2="543.68" stroke="#585858" stroke-width="0.9"/>
<line x1="605.66" y1="557.79" x2="605.66" y2="532.92" stroke="#b8b8b8" stroke-width="1.1"/>
<line x1="616.61" y1="545.98" x2="616.61" y2="537.52" stroke="#646464" stroke-width="0.6"/>
<line x1="616.61" y1="562.39" x2="616.61" y2="557.41" stroke="#646464" stroke-width="0.6"/>
<line x1="619.18" y1="547.06" x2="619.18" y2="538.60" stroke="#646464" stroke-width="0.6"/>
<line x1="619.18" y1="563.47" x2="619.18" y2="558.50" stroke="#646464" stroke-width="0.6"/>
<line x1="615.38" y1="556.16" x2="615.38" y2="547.21" stroke="#c6c6c6" stroke-width="1.0"/>
<line x1="619.25" y1="557.78" x2="619.25" y2="548.83" stroke="#c6c6c6" stroke-width="1.0"/>
<line x1="617.40" y1="558.50" x2="617.40" y2="547.06" stroke="#585858" stroke-width="0.9"/>
<line x1="613.71" y1="561.17" x2="613.71" y2="536.30" stroke="#b8b8b8" stroke-width="1.1"/>
<line x1="624.66" y1="549.36" x2="624.66" y2="540.90" stroke="#646464" stroke-width="0.6"/>
<line x1="624.66" y1="565.77" x2="624.66" y2="560.80" stroke="#646464" stroke-width="0.6"/>
<line x1="627.23" y1="550.44" x2="627.23" y2="541.99" stroke="#646464" stroke-width="0.6"/>
<line x1="627.23" y1="566.85" x2="627.23" y2="561.88" stroke="#646464" stroke-width="0.6"/>
<line x1="623.44" y1="559.54" x2="623.44" y2="550.59" stroke="#c6c6c6" stroke-width="1.0"/>
<line x1="627.30" y1="561.17" x2="627.30" y2="552.21" stroke="#c6c6c6" stroke-width="1.0"/>
<line x1="625.45" y1="561.88" x2="625.45" y2="550.44" stroke="#585858" stroke-width="0.9"/>
<line x1="621.76" y1="564.55" x2="621.76" y2="539.69" stroke="#b8b8b8" stroke-width="1.1"/>
<line x1="632.71" y1="552.74" x2="632.71" y2="544.29" stroke="#646464" stroke-width="0.6"/>
<line x1="632.71" y1="569.15" x2="632.71" y2="564.18" stroke="#646464" stroke-width="0.6"/>
<line x1="635.29" y1="553.82" x2="635.29" y2="545.37" stroke="#646464" stroke-width="0.6"/>
<line x1="635.29" y1="570.23" x2="635.29" y2="565.26" stroke="#646464" stroke-width="0.6"/>
<line x1="631.49" y1="562.92" x2="631.49" y2="553.97" stroke="#c6c6c6" stroke-width="1.0"/>
<line x1="635.35" y1="564.55" x2="635.35" y2="555.60" stroke="#c6c6c6" stroke-width="1.0"/>
<line x1="633.50" y1="565.26" x2="633.50" y2="553.82" stroke="#585858" stroke-width="0.9"/>
<line x1="629.81" y1="567.93" x2="629.81" y2="543.07" stroke="#b8b8b8" stroke-width="1.1"/>
<polygon points="604.41,476.31 549.30,509.25 637.86,546.45 692.98,513.52" fill="#6c6c6c"/>
<line x1="606.11" y1="477.03" x2="551.00" y2="509.96" stroke="#a8a8a8" stroke-width="1.2"/>
<line x1="607.82" y1="477.74" x2="552.70" y2="510.68" stroke="#8e8e8e" stroke-width="0.9" stroke-dasharray="1.1 1.3"/>
<line x1="609.52" y1="478.46" x2="554.41" y2="511.39" stroke="#a8a8a8" stroke-width="1.2"/>
<line x1="611.22" y1="479.18" x2="556.11" y2="512.11" stroke="#8e8e8e" stroke-width="0.9" stroke-dasharray="1.1 1.3"/>
<line x1="612.93" y1="479.89" x2="557.81" y2="512.83" stroke="#a8a8a8" stroke-width="1.2"/>
<line x1="614.63" y1="480.61" x2="559.51" y2="513.54" stroke="#8e8e8e" stroke-width="0.9" stroke-dasharray="1.1 1.3"/>
<line x1="616.33" y1="481.32" x2="561.22" y2="514.26" stroke="#a8a8a8" stroke-width="1.2"/>
<line x1="618.04" y1="482.04" x2="562.92" y2="514.97" stroke="#8e8e8e" stroke-width="0.9" stroke-dasharray="1.1 1.3"/>
<line x1="619.74" y1="482.75" x2="564.62" y2="515.69" stroke="#a8a8a8" stroke-width="1.2"/>
<line x1="621.44" y1="483.47" x2="566.33" y2="516.40" stroke="#8e8e8e" stroke-width="0.9" stroke-dasharray="1.1 1.3"/>
<line x1="623.14" y1="484.18" x2="568.03" y2="517.12" stroke="#a8a8a8" stroke-width="1.2"/>
<line x1="624.85" y1="484.90" x2="569.73" y2="517.83" stroke="#8e8e8e" stroke-width="0.9" stroke-dasharray="1.1 1.3"/>
<line x1="626.55" y1="485.61" x2="571.44" y2="518.55" stroke="#a8a8a8" stroke-width="1.2"/>
<line x1="628.25" y1="486.33" x2="573.14" y2="519.26" stroke="#8e8e8e" stroke-width="0.9" stroke-dasharray="1.1 1.3"/>
<line x1="629.96" y1="487.04" x2="574.84" y2="519.98" stroke="#a8a8a8" stroke-width="1.2"/>
<line x1="631.66" y1="487.76" x2="576.55" y2="520.70" stroke="#8e8e8e" stroke-width="0.9" stroke-dasharray="1.1 1.3"/>
<line x1="633.36" y1="488.48" x2="578.25" y2="521.41" stroke="#a8a8a8" stroke-width="1.2"/>
<line x1="635.07" y1="489.19" x2="579.95" y2="522.13" stroke="#8e8e8e" stroke-width="0.9" stroke-dasharray="1.1 1.3"/>
<line x1="636.77" y1="489.91" x2="581.66" y2="522.84" stroke="#a8a8a8" stroke-width="1.2"/>
<line x1="638.47" y1="490.62" x2="583.36" y2="523.56" stroke="#8e8e8e" stroke-width="0.9" stroke-dasharray="1.1 1.3"/>
<line x1="640.18" y1="491.34" x2="585.06" y2="524.27" stroke="#a8a8a8" stroke-width="1.2"/>
<line x1="641.88" y1="492.05" x2="586.77" y2="524.99" stroke="#8e8e8e" stroke-width="0.9" stroke-dasharray="1.1 1.3"/>
<line x1="643.58" y1="492.77" x2="588.47" y2="525.70" stroke="#a8a8a8" stroke-width="1.2"/>
<line x1="645.29" y1="493.48" x2="590.17" y2="526.42" stroke="#8e8e8e" stroke-width="0.9" stroke-dasharray="1.1 1.3"/>
<line x1="646.99" y1="494.20" x2="591.88" y2="527.13" stroke="#a8a8a8" stroke-width="1.2"/>
<line x1="648.69" y1="494.91" x2="593.58" y2="527.85" stroke="#8e8e8e" stroke-width="0.9" stroke-dasharray="1.1 1.3"/>
<line x1="650.40" y1="495.63" x2="595.28" y2="528.56" stroke="#a8a8a8" stroke-width="1.2"/>
<line x1="652.10" y1="496.35" x2="596.99" y2="529.28" stroke="#8e8e8e" stroke-width="0.9" stroke-dasharray="1.1 1.3"/>
<line x1="653.80" y1="497.06" x2="598.69" y2="530.00" stroke="#a8a8a8" stroke-width="1.2"/>
<line x1="655.51" y1="497.78" x2="600.39" y2="530.71" stroke="#8e8e8e" stroke-width="0.9" stroke-dasharray="1.1 1.3"/>
<line x1="657.21" y1="498.49" x2="602.09" y2="531.43" stroke="#a8a8a8" stroke-width="1.2"/>
<line x1="658.91" y1="499.21" x2="603.80" y2="532.14" stroke="#8e8e8e" stroke-width="0.9" stroke-dasharray="1.1 1.3"/>
<line x1="660.61" y1="499.92" x2="605.50" y2="532.86" stroke="#a8a8a8" stroke-width="1.2"/>
<line x1="662.32" y1="500.64" x2="607.20" y2="533.57" stroke="#8e8e8e" stroke-width="0.9" stroke-dasharray="1.1 1.3"/>
<line x1="664.02" y1="501.35" x2="608.91" y2="534.29" stroke="#a8a8a8" stroke-width="1.2"/>
<line x1="665.72" y1="502.07" x2="610.61" y2="535.00" stroke="#8e8e8e" stroke-width="0.9" stroke-dasharray="1.1 1.3"/>
<line x1="667.43" y1="502.78" x2="612.31" y2="535.72" stroke="#a8a8a8" stroke-width="1.2"/>
<line x1="669.13" y1="503.50" x2="614.02" y2="536.43" stroke="#8e8e8e" stroke-width="0.9" stroke-dasharray="1.1 1.3"/>
<line x1="670.83" y1="504.22" x2="615.72" y2="537.15" stroke="#a8a8a8" stroke-width="1.2"/>
<line x1="672.54" y1="504.93" x2="617.42" y2="537.87" stroke="#8e8e8e" stroke-width="0.9" stroke-dasharray="1.1 1.3"/>
<line x1="674.24" y1="505.65" x2="619.13" y2="538.58" stroke="#a8a8a8" stroke-width="1.2"/>
<line x1="675.94" y1="506.36" x2="620.83" y2="539.30" stroke="#8e8e8e" stroke-width="0.9" stroke-dasharray="1.1 1.3"/>
<line x1="677.65" y1="507.08" x2="622.53" y2="540.01" stroke="#a8a8a8" stroke-width="1.2"/>
<line x1="679.35" y1="507.79" x2="624.24" y2="540.73" stroke="#8e8e8e" stroke-width="0.9" stroke-dasharray="1.1 1.3"/>
<line x1="681.05" y1="508.51" x2="625.94" y2="541.44" stroke="#a8a8a8" stroke-width="1.2"/>
<line x1="682.76" y1="509.22" x2="627.64" y2="542.16" stroke="#8e8e8e" stroke-width="0.9" stroke-dasharray="1.1 1.3"/>
<line x1="684.46" y1="509.94" x2="629.35" y2="542.87" stroke="#a8a8a8" stroke-width="1.2"/>
<line x1="686.16" y1="510.65" x2="631.05" y2="543.59" stroke="#8e8e8e" stroke-width="0.9" stroke-dasharray="1.1 1.3"/>
<line x1="687.87" y1="511.37" x2="632.75" y2="544.30" stroke="#a8a8a8" stroke-width="1.2"/>
<line x1="689.57" y1="512.08" x2="634.46" y2="545.02" stroke="#8e8e8e" stroke-width="0.9" stroke-dasharray="1.1 1.3"/>
<line x1="691.27" y1="512.80" x2="636.16" y2="545.73" stroke="#a8a8a8" stroke-width="1.2"/>
<line x1="692.98" y1="513.52" x2="637.86" y2="546.45" stroke="#8e8e8e" stroke-width="0.9" stroke-dasharray="1.1 1.3"/>
<line x1="692.98" y1="513.52" x2="637.86" y2="546.45" stroke="#b8b8b8" stroke-width="0.8"/>
<polygon points="551.33,508.04 549.30,509.25 637.86,546.45 639.89,545.24" fill="#505050"/>
<line x1="554.22" y1="509.25" x2="552.19" y2="510.47" stroke="#646464" stroke-width="0.6"/>
<line x1="556.80" y1="510.33" x2="554.77" y2="511.55" stroke="#646464" stroke-width="0.6"/>
<line x1="559.38" y1="511.42" x2="557.35" y2="512.63" stroke="#b0b0b0" stroke-width="1.0"/>
<line x1="562.28" y1="512.63" x2="560.25" y2="513.85" stroke="#646464" stroke-width="0.6"/>
<line x1="564.85" y1="513.72" x2="562.82" y2="514.93" stroke="#646464" stroke-width="0.6"/>
<line x1="567.43" y1="514.80" x2="565.40" y2="516.01" stroke="#b0b0b0" stroke-width="1.0"/>
<line x1="570.33" y1="516.02" x2="568.30" y2="517.23" stroke="#646464" stroke-width="0.6"/>
<line x1="572.90" y1="517.10" x2="570.87" y2="518.31" stroke="#646464" stroke-width="0.6"/>
<line x1="575.48" y1="518.18" x2="573.45" y2="519.39" stroke="#b0b0b0" stroke-width="1.0"/>
<line x1="578.38" y1="519.40" x2="576.35" y2="520.61" stroke="#646464" stroke-width="0.6"/>
<line x1="580.96" y1="520.48" x2="578.93" y2="521.69" stroke="#646464" stroke-width="0.6"/>
<line x1="583.53" y1="521.56" x2="581.50" y2="522.78" stroke="#b0b0b0" stroke-width="1.0"/>
<line x1="586.43" y1="522.78" x2="584.40" y2="523.99" stroke="#646464" stroke-width="0.6"/>
<line x1="589.01" y1="523.86" x2="586.98" y2="525.08" stroke="#646464" stroke-width="0.6"/>
<line x1="591.58" y1="524.94" x2="589.55" y2="526.16" stroke="#b0b0b0" stroke-width="1.0"/>
<line x1="594.48" y1="526.16" x2="592.45" y2="527.38" stroke="#646464" stroke-width="0.6"/>
<line x1="597.06" y1="527.24" x2="595.03" y2="528.46" stroke="#646464" stroke-width="0.6"/>
<line x1="599.63" y1="528.33" x2="597.60" y2="529.54" stroke="#b0b0b0" stroke-width="1.0"/>
<line x1="602.53" y1="529.54" x2="600.50" y2="530.76" stroke="#646464" stroke-width="0.6"/>
<line x1="605.11" y1="530.63" x2="603.08" y2="531.84" stroke="#646464" stroke-width="0.6"/>
<line x1="607.69" y1="531.71" x2="605.66" y2="532.92" stroke="#b0b0b0" stroke-width="1.0"/>
<line x1="610.58" y1="532.93" x2="608.55" y2="534.14" stroke="#646464" stroke-width="0.6"/>
<line x1="613.16" y1="534.01" x2="611.13" y2="535.22" stroke="#646464" stroke-width="0.6"/>
<line x1="615.74" y1="535.09" x2="613.71" y2="536.30" stroke="#b0b0b0" stroke-width="1.0"/>
<line x1="618.64" y1="536.31" x2="616.61" y2="537.52" stroke="#646464" stroke-width="0.6"/>
<line x1="621.21" y1="537.39" x2="619.18" y2="538.60" stroke="#646464" stroke-width="0.6"/>
<line x1="623.79" y1="538.47" x2="621.76" y2="539.69" stroke="#b0b0b0" stroke-width="1.0"/>
<line x1="626.69" y1="539.69" x2="624.66" y2="540.90" stroke="#646464" stroke-width="0.6"/>
<line x1="629.26" y1="540.77" x2="627.23" y2="541.99" stroke="#646464" stroke-width="0.6"/>
<line x1="631.84" y1="541.85" x2="629.81" y2="543.07" stroke="#b0b0b0" stroke-width="1.0"/>
<line x1="634.74" y1="543.07" x2="632.71" y2="544.29" stroke="#646464" stroke-width="0.6"/>
<line x1="637.32" y1="544.15" x2="635.29" y2="545.37" stroke="#646464" stroke-width="0.6"/>
<linearGradient id="g6" gradientUnits="userSpaceOnUse" x1="810.9" y1="580.0" x2="866.0" y2="522.2"><stop offset="0" stop-color="#dcdcdc"/><stop offset="0.45" stop-color="#a8a8a8"/><stop offset="1" stop-color="#7c7c7c"/></linearGradient>
<polygon points="810.92,580.02 866.04,547.08 866.04,522.22 810.92,555.15" fill="url(#g6)"/>
<polygon points="722.36,542.82 810.92,580.02 810.92,555.15 722.36,517.95" fill="#464646"/>
<polygon points="721.62,538.28 810.19,575.49 810.19,564.05 721.62,526.85" fill="#a0a0a0"/>
<line x1="725.26" y1="527.62" x2="725.26" y2="519.17" stroke="#646464" stroke-width="0.6"/>
<line x1="725.26" y1="544.03" x2="725.26" y2="539.06" stroke="#646464" stroke-width="0.6"/>
<line x1="727.83" y1="528.70" x2="727.83" y2="520.25" stroke="#646464" stroke-width="0.6"/>
<line x1="727.83" y1="545.12" x2="727.83" y2="540.14" stroke="#646464" stroke-width="0.6"/>
<line x1="724.04" y1="537.81" x2="724.04" y2="528.85" stroke="#c6c6c6" stroke-width="1.0"/>
<line x1="727.90" y1="539.43" x2="727.90" y2="530.48" stroke="#c6c6c6" stroke-width="1.0"/>
<line x1="726.05" y1="540.14" x2="726.05" y2="528.71" stroke="#585858" stroke-width="0.9"/>
<line x1="733.31" y1="531.00" x2="733.31" y2="522.55" stroke="#646464" stroke-width="0.6"/>
<line x1="733.31" y1="547.42" x2="733.31" y2="542.44" stroke="#646464" stroke-width="0.6"/>
<line x1="735.88" y1="532.09" x2="735.88" y2="523.63" stroke="#646464" stroke-width="0.6"/>
<line x1="735.88" y1="548.50" x2="735.88" y2="543.52" stroke="#646464" stroke-width="0.6"/>
<line x1="732.09" y1="541.19" x2="732.09" y2="532.24" stroke="#c6c6c6" stroke-width="1.0"/>
<line x1="735.95" y1="542.81" x2="735.95" y2="533.86" stroke="#c6c6c6" stroke-width="1.0"/>
<line x1="734.10" y1="543.53" x2="734.10" y2="532.09" stroke="#585858" stroke-width="0.9"/>
<line x1="730.41" y1="546.20" x2="730.41" y2="521.33" stroke="#b8b8b8" stroke-width="1.1"/>
<line x1="741.36" y1="534.39" x2="741.36" y2="525.93" stroke="#646464" stroke-width="0.6"/>
<line x1="741.36" y1="550.80" x2="741.36" y2="545.82" stroke="#646464" stroke-width="0.6"/>
<line x1="743.94" y1="535.47" x2="743.94" y2="527.01" stroke="#646464" stroke-width="0.6"/>
<line x1="743.94" y1="551.88" x2="743.94" y2="546.91" stroke="#646464" stroke-width="0.6"/>
<line x1="740.14" y1="544.57" x2="740.14" y2="535.62" stroke="#c6c6c6" stroke-width="1.0"/>
<line x1="744.00" y1="546.19" x2="744.00" y2="537.24" stroke="#c6c6c6" stroke-width="1.0"/>
<line x1="742.15" y1="546.91" x2="742.15" y2="535.47" stroke="#585858" stroke-width="0.9"/>
<line x1="738.46" y1="549.58" x2="738.46" y2="524.71" stroke="#b8b8b8" stroke-width="1.1"/>
<line x1="749.41" y1="537.77" x2="749.41" y2="529.31" stroke="#646464" stroke-width="0.6"/>
<line x1="749.41" y1="554.18" x2="749.41" y2="549.21" stroke="#646464" stroke-width="0.6"/>
<line x1="751.99" y1="538.85" x2="751.99" y2="530.40" stroke="#646464" stroke-width="0.6"/>
<line x1="751.99" y1="555.26" x2="751.99" y2="550.29" stroke="#646464" stroke-width="0.6"/>
<line x1="748.19" y1="547.95" x2="748.19" y2="539.00" stroke="#c6c6c6" stroke-width="1.0"/>
<line x1="752.05" y1="549.58" x2="752.05" y2="540.62" stroke="#c6c6c6" stroke-width="1.0"/>
<line x1="750.20" y1="550.29" x2="750.20" y2="538.85" stroke="#585858" stroke-width="0.9"/>
<line x1="746.51" y1="552.96" x2="746.51" y2="528.10" stroke="#b8b8b8" stroke-width="1.1"/>
<line x1="757.46" y1="541.15" x2="757.46" y2="532.70" stroke="#646464" stroke-width="0.6"/>
<line x1="757.46" y1="557.56" x2="757.46" y2="552.59" stroke="#646464" stroke-width="0.6"/>
<line x1="760.04" y1="542.23" x2="760.04" y2="533.78" stroke="#646464" stroke-width="0.6"/>
<line x1="760.04" y1="558.64" x2="760.04" y2="553.67" stroke="#646464" stroke-width="0.6"/>
<line x1="756.24" y1="551.33" x2="756.24" y2="542.38" stroke="#c6c6c6" stroke-width="1.0"/>
<line x1="760.11" y1="552.96" x2="760.11" y2="544.01" stroke="#c6c6c6" stroke-width="1.0"/>
<line x1="758.25" y1="553.67" x2="758.25" y2="542.23" stroke="#585858" stroke-width="0.9"/>
<line x1="754.56" y1="556.34" x2="754.56" y2="531.48" stroke="#b8b8b8" stroke-width="1.1"/>
<line x1="765.51" y1="544.53" x2="765.51" y2="536.08" stroke="#646464" stroke-width="0.6"/>
<line x1="765.51" y1="560.94" x2="765.51" y2="555.97" stroke="#646464" stroke-width="0.6"/>
<line x1="768.09" y1="545.61" x2="768.09" y2="537.16" stroke="#646464" stroke-width="0.6"/>
<line x1="768.09" y1="562.03" x2="768.09" y2="557.05" stroke="#646464" stroke-width="0.6"/>
<line x1="764.29" y1="554.72" x2="764.29" y2="545.76" stroke="#c6c6c6" stroke-width="1.0"/>
<line x1="768.16" y1="556.34" x2="768.16" y2="547.39" stroke="#c6c6c6" stroke-width="1.0"/>
<line x1="766.31" y1="557.05" x2="766.31" y2="545.62" stroke="#585858" stroke-width="0.9"/>
<line x1="762.62" y1="559.73" x2="762.62" y2="534.86" stroke="#b8b8b8" stroke-width="1.1"/>
<line x1="773.57" y1="547.91" x2="773.57" y2="539.46" stroke="#646464" stroke-width="0.6"/>
<line x1="773.57" y1="564.33" x2="773.57" y2="559.35" stroke="#646464" stroke-width="0.6"/>
<line x1="776.14" y1="549.00" x2="776.14" y2="540.54" stroke="#646464" stroke-width="0.6"/>
<line x1="776.14" y1="565.41" x2="776.14" y2="560.43" stroke="#646464" stroke-width="0.6"/>
<line x1="772.34" y1="558.10" x2="772.34" y2="549.15" stroke="#c6c6c6" stroke-width="1.0"/>
<line x1="776.21" y1="559.72" x2="776.21" y2="550.77" stroke="#c6c6c6" stroke-width="1.0"/>
<line x1="774.36" y1="560.44" x2="774.36" y2="549.00" stroke="#585858" stroke-width="0.9"/>
<line x1="770.67" y1="563.11" x2="770.67" y2="538.24" stroke="#b8b8b8" stroke-width="1.1"/>
<line x1="781.62" y1="551.30" x2="781.62" y2="542.84" stroke="#646464" stroke-width="0.6"/>
<line x1="781.62" y1="567.71" x2="781.62" y2="562.73" stroke="#646464" stroke-width="0.6"/>
<line x1="784.19" y1="552.38" x2="784.19" y2="543.92" stroke="#646464" stroke-width="0.6"/>
<line x1="784.19" y1="568.79" x2="784.19" y2="563.82" stroke="#646464" stroke-width="0.6"/>
<line x1="780.40" y1="561.48" x2="780.40" y2="552.53" stroke="#c6c6c6" stroke-width="1.0"/>
<line x1="784.26" y1="563.10" x2="784.26" y2="554.15" stroke="#c6c6c6" stroke-width="1.0"/>
<line x1="782.41" y1="563.82" x2="782.41" y2="552.38" stroke="#585858" stroke-width="0.9"/>
<line x1="778.72" y1="566.49" x2="778.72" y2="541.62" stroke="#b8b8b8" stroke-width="1.1"/>
<line x1="789.67" y1="554.68" x2="789.67" y2="546.22" stroke="#646464" stroke-width="0.6"/>
<line x1="789.67" y1="571.09" x2="789.67" y2="566.12" stroke="#646464" stroke-width="0.6"/>
<line x1="792.24" y1="555.76" x2="792.24" y2="547.31" stroke="#646464" stroke-width="0.6"/>
<line x1="792.24" y1="572.17" x2="792.24" y2="567.20" stroke="#646464" stroke-width="0.6"/>
<line x1="788.45" y1="564.86" x2="788.45" y2="555.91" stroke="#c6c6c6" stroke-width="1.0"/>
<line x1="792.31" y1="566.49" x2="792.31" y2="557.53" stroke="#c6c6c6" stroke-width="1.0"/>
<line x1="790.46" y1="567.20" x2="790.46" y2="555.76" stroke="#585858" stroke-width="0.9"/>
<line x1="786.77" y1="569.87" x2="786.77" y2="545.01" stroke="#b8b8b8" stroke-width="1.1"/>
<line x1="797.72" y1="558.06" x2="797.72" y2="549.61" stroke="#646464" stroke-width="0.6"/>
<line x1="797.72" y1="574.47" x2="797.72" y2="569.50" stroke="#646464" stroke-width="0.6"/>
<line x1="800.30" y1="559.14" x2="800.30" y2="550.69" stroke="#646464" stroke-width="0.6"/>
<line x1="800.30" y1="575.55" x2="800.30" y2="570.58" stroke="#646464" stroke-width="0.6"/>
<line x1="796.50" y1="568.24" x2="796.50" y2="559.29" stroke="#c6c6c6" stroke-width="1.0"/>
<line x1="800.36" y1="569.87" x2="800.36" y2="560.92" stroke="#c6c6c6" stroke-width="1.0"/>
<line x1="798.51" y1="570.58" x2="798.51" y2="559.14" stroke="#585858" stroke-width="0.9"/>
<line x1="794.82" y1="573.25" x2="794.82" y2="548.39" stroke="#b8b8b8" stroke-width="1.1"/>
<line x1="805.77" y1="561.44" x2="805.77" y2="552.99" stroke="#646464" stroke-width="0.6"/>
<line x1="805.77" y1="577.85" x2="805.77" y2="572.88" stroke="#646464" stroke-width="0.6"/>
<line x1="808.35" y1="562.52" x2="808.35" y2="554.07" stroke="#646464" stroke-width="0.6"/>
<line x1="808.35" y1="578.94" x2="808.35" y2="573.96" stroke="#646464" stroke-width="0.6"/>
<line x1="804.55" y1="571.63" x2="804.55" y2="562.67" stroke="#c6c6c6" stroke-width="1.0"/>
<line x1="808.41" y1="573.25" x2="808.41" y2="564.30" stroke="#c6c6c6" stroke-width="1.0"/>
<line x1="806.56" y1="573.96" x2="806.56" y2="562.53" stroke="#585858" stroke-width="0.9"/>
<line x1="802.87" y1="576.64" x2="802.87" y2="551.77" stroke="#b8b8b8" stroke-width="1.1"/>
<polygon points="777.47,485.02 722.36,517.95 810.92,555.15 866.04,522.22" fill="#6c6c6c"/>
<line x1="779.18" y1="485.73" x2="724.06" y2="518.67" stroke="#a8a8a8" stroke-width="1.2"/>
<line x1="780.88" y1="486.45" x2="725.76" y2="519.38" stroke="#8e8e8e" stroke-width="0.9" stroke-dasharray="1.1 1.3"/>
<line x1="782.58" y1="487.16" x2="727.47" y2="520.10" stroke="#a8a8a8" stroke-width="1.2"/>
<line x1="784.28" y1="487.88" x2="729.17" y2="520.81" stroke="#8e8e8e" stroke-width="0.9" stroke-dasharray="1.1 1.3"/>
<line x1="785.99" y1="488.59" x2="730.87" y2="521.53" stroke="#a8a8a8" stroke-width="1.2"/>
<line x1="787.69" y1="489.31" x2="732.58" y2="522.24" stroke="#8e8e8e" stroke-width="0.9" stroke-dasharray="1.1 1.3"/>
<line x1="789.39" y1="490.02" x2="734.28" y2="522.96" stroke="#a8a8a8" stroke-width="1.2"/>
<line x1="791.10" y1="490.74" x2="735.98" y2="523.67" stroke="#8e8e8e" stroke-width="0.9" stroke-dasharray="1.1 1.3"/>
<line x1="792.80" y1="491.45" x2="737.69" y2="524.39" stroke="#a8a8a8" stroke-width="1.2"/>
<line x1="794.50" y1="492.17" x2="739.39" y2="525.10" stroke="#8e8e8e" stroke-width="0.9" stroke-dasharray="1.1 1.3"/>
<line x1="796.21" y1="492.89" x2="741.09" y2="525.82" stroke="#a8a8a8" stroke-width="1.2"/>
<line x1="797.91" y1="493.60" x2="742.80" y2="526.54" stroke="#8e8e8e" stroke-width="0.9" stroke-dasharray="1.1 1.3"/>
<line x1="799.61" y1="494.32" x2="744.50" y2="527.25" stroke="#a8a8a8" stroke-width="1.2"/>
<line x1="801.32" y1="495.03" x2="746.20" y2="527.97" stroke="#8e8e8e" stroke-width="0.9" stroke-dasharray="1.1 1.3"/>
<line x1="803.02" y1="495.75" x2="747.91" y2="528.68" stroke="#a8a8a8" stroke-width="1.2"/>
<line x1="804.72" y1="496.46" x2="749.61" y2="529.40" stroke="#8e8e8e" stroke-width="0.9" stroke-dasharray="1.1 1.3"/>
<line x1="806.43" y1="497.18" x2="751.31" y2="530.11" stroke="#a8a8a8" stroke-width="1.2"/>
<line x1="808.13" y1="497.89" x2="753.02" y2="530.83" stroke="#8e8e8e" stroke-width="0.9" stroke-dasharray="1.1 1.3"/>
<line x1="809.83" y1="498.61" x2="754.72" y2="531.54" stroke="#a8a8a8" stroke-width="1.2"/>
<line x1="811.54" y1="499.32" x2="756.42" y2="532.26" stroke="#8e8e8e" stroke-width="0.9" stroke-dasharray="1.1 1.3"/>
<line x1="813.24" y1="500.04" x2="758.12" y2="532.97" stroke="#a8a8a8" stroke-width="1.2"/>
<line x1="814.94" y1="500.75" x2="759.83" y2="533.69" stroke="#8e8e8e" stroke-width="0.9" stroke-dasharray="1.1 1.3"/>
<line x1="816.65" y1="501.47" x2="761.53" y2="534.40" stroke="#a8a8a8" stroke-width="1.2"/>
<line x1="818.35" y1="502.19" x2="763.23" y2="535.12" stroke="#8e8e8e" stroke-width="0.9" stroke-dasharray="1.1 1.3"/>
<line x1="820.05" y1="502.90" x2="764.94" y2="535.84" stroke="#a8a8a8" stroke-width="1.2"/>
<line x1="821.75" y1="503.62" x2="766.64" y2="536.55" stroke="#8e8e8e" stroke-width="0.9" stroke-dasharray="1.1 1.3"/>
<line x1="823.46" y1="504.33" x2="768.34" y2="537.27" stroke="#a8a8a8" stroke-width="1.2"/>
<line x1="825.16" y1="505.05" x2="770.05" y2="537.98" stroke="#8e8e8e" stroke-width="0.9" stroke-dasharray="1.1 1.3"/>
<line x1="826.86" y1="505.76" x2="771.75" y2="538.70" stroke="#a8a8a8" stroke-width="1.2"/>
<line x1="828.57" y1="506.48" x2="773.45" y2="539.41" stroke="#8e8e8e" stroke-width="0.9" stroke-dasharray="1.1 1.3"/>
<line x1="830.27" y1="507.19" x2="775.16" y2="540.13" stroke="#a8a8a8" stroke-width="1.2"/>
<line x1="831.97" y1="507.91" x2="776.86" y2="540.84" stroke="#8e8e8e" stroke-width="0.9" stroke-dasharray="1.1 1.3"/>
<line x1="833.68" y1="508.62" x2="778.56" y2="541.56" stroke="#a8a8a8" stroke-width="1.2"/>
<line x1="835.38" y1="509.34" x2="780.27" y2="542.27" stroke="#8e8e8e" stroke-width="0.9" stroke-dasharray="1.1 1.3"/>
<line x1="837.08" y1="510.06" x2="781.97" y2="542.99" stroke="#a8a8a8" stroke-width="1.2"/>
<line x1="838.79" y1="510.77" x2="783.67" y2="543.71" stroke="#8e8e8e" stroke-width="0.9" stroke-dasharray="1.1 1.3"/>
<line x1="840.49" y1="511.49" x2="785.38" y2="544.42" stroke="#a8a8a8" stroke-width="1.2"/>
<line x1="842.19" y1="512.20" x2="787.08" y2="545.14" stroke="#8e8e8e" stroke-width="0.9" stroke-dasharray="1.1 1.3"/>
<line x1="843.90" y1="512.92" x2="788.78" y2="545.85" stroke="#a8a8a8" stroke-width="1.2"/>
<line x1="845.60" y1="513.63" x2="790.49" y2="546.57" stroke="#8e8e8e" stroke-width="0.9" stroke-dasharray="1.1 1.3"/>
<line x1="847.30" y1="514.35" x2="792.19" y2="547.28" stroke="#a8a8a8" stroke-width="1.2"/>
<line x1="849.01" y1="515.06" x2="793.89" y2="548.00" stroke="#8e8e8e" stroke-width="0.9" stroke-dasharray="1.1 1.3"/>
<line x1="850.71" y1="515.78" x2="795.60" y2="548.71" stroke="#a8a8a8" stroke-width="1.2"/>
<line x1="852.41" y1="516.49" x2="797.30" y2="549.43" stroke="#8e8e8e" stroke-width="0.9" stroke-dasharray="1.1 1.3"/>
<line x1="854.12" y1="517.21" x2="799.00" y2="550.14" stroke="#a8a8a8" stroke-width="1.2"/>
<line x1="855.82" y1="517.92" x2="800.70" y2="550.86" stroke="#8e8e8e" stroke-width="0.9" stroke-dasharray="1.1 1.3"/>
<line x1="857.52" y1="518.64" x2="802.41" y2="551.57" stroke="#a8a8a8" stroke-width="1.2"/>
<line x1="859.22" y1="519.36" x2="804.11" y2="552.29" stroke="#8e8e8e" stroke-width="0.9" stroke-dasharray="1.1 1.3"/>
<line x1="860.93" y1="520.07" x2="805.81" y2="553.01" stroke="#a8a8a8" stroke-width="1.2"/>
<line x1="862.63" y1="520.79" x2="807.52" y2="553.72" stroke="#8e8e8e" stroke-width="0.9" stroke-dasharray="1.1 1.3"/>
<line x1="864.33" y1="521.50" x2="809.22" y2="554.44" stroke="#a8a8a8" stroke-width="1.2"/>
<line x1="866.04" y1="522.22" x2="810.92" y2="555.15" stroke="#8e8e8e" stroke-width="0.9" stroke-dasharray="1.1 1.3"/>
<line x1="866.04" y1="522.22" x2="810.92" y2="555.15" stroke="#b8b8b8" stroke-width="0.8"/>
<polygon points="724.39,516.74 722.36,517.95 810.92,555.15 812.95,553.94" fill="#505050"/>
<line x1="727.29" y1="517.95" x2="725.26" y2="519.17" stroke="#646464" stroke-width="0.6"/>
<line x1="729.86" y1="519.04" x2="727.83" y2="520.25" stroke="#646464" stroke-width="0.6"/>
<line x1="732.44" y1="520.12" x2="730.41" y2="521.33" stroke="#b0b0b0" stroke-width="1.0"/>
<line x1="735.34" y1="521.34" x2="733.31" y2="522.55" stroke="#646464" stroke-width="0.6"/>
<line x1="737.91" y1="522.42" x2="735.88" y2="523.63" stroke="#646464" stroke-width="0.6"/>
<line x1="740.49" y1="523.50" x2="738.46" y2="524.71" stroke="#b0b0b0" stroke-width="1.0"/>
<line x1="743.39" y1="524.72" x2="741.36" y2="525.93" stroke="#646464" stroke-width="0.6"/>
<line x1="745.97" y1="525.80" x2="743.94" y2="527.01" stroke="#646464" stroke-width="0.6"/>
<line x1="748.54" y1="526.88" x2="746.51" y2="528.10" stroke="#b0b0b0" stroke-width="1.0"/>
<line x1="751.44" y1="528.10" x2="749.41" y2="529.31" stroke="#646464" stroke-width="0.6"/>
<line x1="754.02" y1="529.18" x2="751.99" y2="530.40" stroke="#646464" stroke-width="0.6"/>
<line x1="756.59" y1="530.26" x2="754.56" y2="531.48" stroke="#b0b0b0" stroke-width="1.0"/>
<line x1="759.49" y1="531.48" x2="757.46" y2="532.70" stroke="#646464" stroke-width="0.6"/>
<line x1="762.07" y1="532.56" x2="760.04" y2="533.78" stroke="#646464" stroke-width="0.6"/>
<line x1="764.65" y1="533.65" x2="762.62" y2="534.86" stroke="#b0b0b0" stroke-width="1.0"/>
<line x1="767.54" y1="534.86" x2="765.51" y2="536.08" stroke="#646464" stroke-width="0.6"/>
<line x1="770.12" y1="535.95" x2="768.09" y2="537.16" stroke="#646464" stroke-width="0.6"/>
<line x1="772.70" y1="537.03" x2="770.67" y2="538.24" stroke="#b0b0b0" stroke-width="1.0"/>
<line x1="775.60" y1="538.25" x2="773.57" y2="539.46" stroke="#646464" stroke-width="0.6"/>
<line x1="778.17" y1="539.33" x2="776.14" y2="540.54" stroke="#646464" stroke-width="0.6"/>
<line x1="780.75" y1="540.41" x2="778.72" y2="541.62" stroke="#b0b0b0" stroke-width="1.0"/>
<line x1="783.65" y1="541.63" x2="781.62" y2="542.84" stroke="#646464" stroke-width="0.6"/>
<line x1="786.22" y1="542.71" x2="784.19" y2="543.92" stroke="#646464" stroke-width="0.6"/>
<line x1="788.80" y1="543.79" x2="786.77" y2="545.01" stroke="#b0b0b0" stroke-width="1.0"/>
<line x1="791.70" y1="545.01" x2="789.67" y2="546.22" stroke="#646464" stroke-width="0.6"/>
<line x1="794.27" y1="546.09" x2="792.24" y2="547.31" stroke="#646464" stroke-width="0.6"/>
<line x1="796.85" y1="547.17" x2="794.82" y2="548.39" stroke="#b0b0b0" stroke-width="1.0"/>
<line x1="799.75" y1="548.39" x2="797.72" y2="549.61" stroke="#646464" stroke-width="0.6"/>
<line x1="802.33" y1="549.47" x2="800.30" y2="550.69" stroke="#646464" stroke-width="0.6"/>
<line x1="804.90" y1="550.56" x2="802.87" y2="551.77" stroke="#b0b0b0" stroke-width="1.0"/>
<line x1="807.80" y1="551.77" x2="805.77" y2="552.99" stroke="#646464" stroke-width="0.6"/>
<line x1="810.38" y1="552.86" x2="808.35" y2="554.07" stroke="#646464" stroke-width="0.6"/>
<linearGradient id="g7" gradientUnits="userSpaceOnUse" x1="575.0" y1="608.9" x2="630.1" y2="551.1"><stop offset="0" stop-color="#dcdcdc"/><stop offset="0.45" stop-color="#a8a8a8"/><stop offset="1" stop-color="#7c7c7c"/></linearGradient>
<polygon points="574.98,608.89 630.09,575.96 630.09,551.09 574.98,584.03" fill="url(#g7)"/>
<polygon points="486.41,571.69 574.98,608.89 574.98,584.03 486.41,546.83" fill="#464646"/>
<polygon points="485.67,567.16 574.24,604.36 574.24,592.92 485.67,555.72" fill="#a0a0a0"/>
<line x1="489.31" y1="556.50" x2="489.31" y2="548.04" stroke="#646464" stroke-width="0.6"/>
<line x1="489.31" y1="572.91" x2="489.31" y2="567.94" stroke="#646464" stroke-width="0.6"/>
<line x1="491.89" y1="557.58" x2="491.89" y2="549.13" stroke="#646464" stroke-width="0.6"/>
<line x1="491.89" y1="573.99" x2="491.89" y2="569.02" stroke="#646464" stroke-width="0.6"/>
<line x1="488.09" y1="566.68" x2="488.09" y2="557.73" stroke="#c6c6c6" stroke-width="1.0"/>
<line x1="491.95" y1="568.31" x2="491.95" y2="559.35" stroke="#c6c6c6" stroke-width="1.0"/>
<line x1="490.10" y1="569.02" x2="490.10" y2="557.58" stroke="#585858" stroke-width="0.9"/>
<line x1="497.36" y1="559.88" x2="497.36" y2="551.43" stroke="#646464" stroke-width="0.6"/>
<line x1="497.36" y1="576.29" x2="497.36" y2="571.32" stroke="#646464" stroke-width="0.6"/>
<line x1="499.94" y1="560.96" x2="499.94" y2="552.51" stroke="#646464" stroke-width="0.6"/>
<line x1="499.94" y1="577.37" x2="499.94" y2="572.40" stroke="#646464" stroke-width="0.6"/>
<line x1="496.14" y1="570.06" x2="496.14" y2="561.11" stroke="#c6c6c6" stroke-width="1.0"/>
<line x1="500.00" y1="571.69" x2="500.00" y2="562.74" stroke="#c6c6c6" stroke-width="1.0"/>
<line x1="498.15" y1="572.40" x2="498.15" y2="560.96" stroke="#585858" stroke-width="0.9"/>
<line x1="494.46" y1="575.07" x2="494.46" y2="550.21" stroke="#b8b8b8" stroke-width="1.1"/>
<line x1="505.41" y1="563.26" x2="505.41" y2="554.81" stroke="#646464" stroke-width="0.6"/>
<line x1="505.41" y1="579.67" x2="505.41" y2="574.70" stroke="#646464" stroke-width="0.6"/>
<line x1="507.99" y1="564.34" x2="507.99" y2="555.89" stroke="#646464" stroke-width="0.6"/>
<line x1="507.99" y1="580.76" x2="507.99" y2="575.78" stroke="#646464" stroke-width="0.6"/>
<line x1="504.19" y1="573.45" x2="504.19" y2="564.50" stroke="#c6c6c6" stroke-width="1.0"/>
<line x1="508.06" y1="575.07" x2="508.06" y2="566.12" stroke="#c6c6c6" stroke-width="1.0"/>
<line x1="506.20" y1="575.78" x2="506.20" y2="564.35" stroke="#585858" stroke-width="0.9"/>
<line x1="502.51" y1="578.46" x2="502.51" y2="553.59" stroke="#b8b8b8" stroke-width="1.1"/>
<line x1="513.46" y1="566.64" x2="513.46" y2="558.19" stroke="#646464" stroke-width="0.6"/>
<line x1="513.46" y1="583.06" x2="513.46" y2="578.08" stroke="#646464" stroke-width="0.6"/>
<line x1="516.04" y1="567.73" x2="516.04" y2="559.27" stroke="#646464" stroke-width="0.6"/>
<line x1="516.04" y1="584.14" x2="516.04" y2="579.16" stroke="#646464" stroke-width="0.6"/>
<line x1="512.24" y1="576.83" x2="512.24" y2="567.88" stroke="#c6c6c6" stroke-width="1.0"/>
<line x1="516.11" y1="578.45" x2="516.11" y2="569.50" stroke="#c6c6c6" stroke-width="1.0"/>
<line x1="514.26" y1="579.17" x2="514.26" y2="567.73" stroke="#585858" stroke-width="0.9"/>
<line x1="510.57" y1="581.84" x2="510.57" y2="556.97" stroke="#b8b8b8" stroke-width="1.1"/>
<line x1="521.52" y1="570.03" x2="521.52" y2="561.57" stroke="#646464" stroke-width="0.6"/>
<line x1="521.52" y1="586.44" x2="521.52" y2="581.46" stroke="#646464" stroke-width="0.6"/>
<line x1="524.09" y1="571.11" x2="524.09" y2="562.65" stroke="#646464" stroke-width="0.6"/>
<line x1="524.09" y1="587.52" x2="524.09" y2="582.55" stroke="#646464" stroke-width="0.6"/>
<line x1="520.29" y1="580.21" x2="520.29" y2="571.26" stroke="#c6c6c6" stroke-width="1.0"/>
<line x1="524.16" y1="581.83" x2="524.16" y2="572.88" stroke="#c6c6c6" stroke-width="1.0"/>
<line x1="522.31" y1="582.55" x2="522.31" y2="571.11" stroke="#585858" stroke-width="0.9"/>
<line x1="518.62" y1="585.22" x2="518.62" y2="560.35" stroke="#b8b8b8" stroke-width="1.1"/>
<line x1="529.57" y1="573.41" x2="529.57" y2="564.95" stroke="#646464" stroke-width="0.6"/>
<line x1="529.57" y1="589.82" x2="529.57" y2="584.85" stroke="#646464" stroke-width="0.6"/>
<line x1="532.14" y1="574.49" x2="532.14" y2="566.04" stroke="#646464" stroke-width="0.6"/>
<line x1="532.14" y1="590.90" x2="532.14" y2="585.93" stroke="#646464" stroke-width="0.6"/>
<line x1="528.35" y1="583.59" x2="528.35" y2="574.64" stroke="#c6c6c6" stroke-width="1.0"/>
<line x1="532.21" y1="585.22" x2="532.21" y2="576.26" stroke="#c6c6c6" stroke-width="1.0"/>
<line x1="530.36" y1="585.93" x2="530.36" y2="574.49" stroke="#585858" stroke-width="0.9"/>
<line x1="526.67" y1="588.60" x2="526.67" y2="563.74" stroke="#b8b8b8" stroke-width="1.1"/>
<line x1="537.62" y1="576.79" x2="537.62" y2="568.34" stroke="#646464" stroke-width="0.6"/>
<line x1="537.62" y1="593.20" x2="537.62" y2="588.23" stroke="#646464" stroke-width="0.6"/>
<line x1="540.20" y1="577.87" x2="540.20" y2="569.42" stroke="#646464" stroke-width="0.6"/>
<line x1="540.20" y1="594.28" x2="540.20" y2="589.31" stroke="#646464" stroke-width="0.6"/>
<line x1="536.40" y1="586.97" x2="536.40" y2="578.02" stroke="#c6c6c6" stroke-width="1.0"/>
<line x1="540.26" y1="588.60" x2="540.26" y2="579.65" stroke="#c6c6c6" stroke-width="1.0"/>
<line x1="538.41" y1="589.31" x2="538.41" y2="577.87" stroke="#585858" stroke-width="0.9"/>
<line x1="534.72" y1="591.98" x2="534.72" y2="567.12" stroke="#b8b8b8" stroke-width="1.1"/>
<line x1="545.67" y1="580.17" x2="545.67" y2="571.72" stroke="#646464" stroke-width="0.6"/>
<line x1="545.67" y1="596.58" x2="545.67" y2="591.61" stroke="#646464" stroke-width="0.6"/>
<line x1="548.25" y1="581.25" x2="548.25" y2="572.80" stroke="#646464" stroke-width="0.6"/>
<line x1="548.25" y1="597.67" x2="548.25" y2="592.69" stroke="#646464" stroke-width="0.6"/>
<line x1="544.45" y1="590.36" x2="544.45" y2="581.41" stroke="#c6c6c6" stroke-width="1.0"/>
<line x1="548.31" y1="591.98" x2="548.31" y2="583.03" stroke="#c6c6c6" stroke-width="1.0"/>
<line x1="546.46" y1="592.69" x2="546.46" y2="581.26" stroke="#585858" stroke-width="0.9"/>
<line x1="542.77" y1="595.37" x2="542.77" y2="570.50" stroke="#b8b8b8" stroke-width="1.1"/>
<line x1="553.72" y1="583.55" x2="553.72" y2="575.10" stroke="#646464" stroke-width="0.6"/>
<line x1="553.72" y1="599.97" x2="553.72" y2="594.99" stroke="#646464" stroke-width="0.6"/>
<line x1="556.30" y1="584.64" x2="556.30" y2="576.18" stroke="#646464" stroke-width="0.6"/>
<line x1="556.30" y1="601.05" x2="556.30" y2="596.07" stroke="#646464" stroke-width="0.6"/>
<line x1="552.50" y1="593.74" x2="552.50" y2="584.79" stroke="#c6c6c6" stroke-width="1.0"/>
<line x1="556.36" y1="595.36" x2="556.36" y2="586.41" stroke="#c6c6c6" stroke-width="1.0"/>
<line x1="554.51" y1="596.08" x2="554.51" y2="584.64" stroke="#585858" stroke-width="0.9"/>
<line x1="550.82" y1="598.75" x2="550.82" y2="573.88" stroke="#b8b8b8" stroke-width="1.1"/>
<line x1="561.77" y1="586.94" x2="561.77" y2="578.48" stroke="#646464" stroke-width="0.6"/>
<line x1="561.77" y1="603.35" x2="561.77" y2="598.37" stroke="#646464" stroke-width="0.6"/>
<line x1="564.35" y1="588.02" x2="564.35" y2="579.56" stroke="#646464" stroke-width="0.6"/>
<line x1="564.35" y1="604.43" x2="564.35" y2="599.46" stroke="#646464" stroke-width="0.6"/>
<line x1="560.55" y1="597.12" x2="560.55" y2="588.17" stroke="#c6c6c6" stroke-width="1.0"/>
<line x1="564.42" y1="598.74" x2="564.42" y2="589.79" stroke="#c6c6c6" stroke-width="1.0"/>
<line x1="562.56" y1="599.46" x2="562.56" y2="588.02" stroke="#585858" stroke-width="0.9"/>
<line x1="558.87" y1="602.13" x2="558.87" y2="577.26" stroke="#b8b8b8" stroke-width="1.1"/>
<line x1="569.82" y1="590.32" x2="569.82" y2="581.86" stroke="#646464" stroke-width="0.6"/>
<line x1="569.82" y1="606.73" x2="569.82" y2="601.76" stroke="#646464" stroke-width="0.6"/>
<line x1="572.40" y1="591.40" x2="572.40" y2="582.95" stroke="#646464" stroke-width="0.6"/>
<line x1="572.40" y1="607.81" x2="572.40" y2="602.84" stroke="#646464" stroke-width="0.6"/>
<line x1="568.60" y1="600.50" x2="568.60" y2="591.55" stroke="#c6c6c6" stroke-width="1.0"/>
<line x1="572.47" y1="602.13" x2="572.47" y2="593.17" stroke="#c6c6c6" stroke-width="1.0"/>
<line x1="570.62" y1="602.84" x2="570.62" y2="591.40" stroke="#585858" stroke-width="0.9"/>
<line x1="566.93" y1="605.51" x2="566.93" y2="580.65" stroke="#b8b8b8" stroke-width="1.1"/>
<polygon points="541.53,513.89 486.41,546.83 574.98,584.03 630.09,551.09" fill="#6c6c6c"/>
<line x1="543.23" y1="514.61" x2="488.11" y2="547.54" stroke="#a8a8a8" stroke-width="1.2"/>
<line x1="544.93" y1="515.32" x2="489.82" y2="548.26" stroke="#8e8e8e" stroke-width="0.9" stroke-dasharray="1.1 1.3"/>
<line x1="546.63" y1="516.04" x2="491.52" y2="548.97" stroke="#a8a8a8" stroke-width="1.2"/>
<line x1="548.34" y1="516.75" x2="493.22" y2="549.69" stroke="#8e8e8e" stroke-width="0.9" stroke-dasharray="1.1 1.3"/>
<line x1="550.04" y1="517.47" x2="494.93" y2="550.40" stroke="#a8a8a8" stroke-width="1.2"/>
<line x1="551.74" y1="518.18" x2="496.63" y2="551.12" stroke="#8e8e8e" stroke-width="0.9" stroke-dasharray="1.1 1.3"/>
<line x1="553.45" y1="518.90" x2="498.33" y2="551.83" stroke="#a8a8a8" stroke-width="1.2"/>
<line x1="555.15" y1="519.62" x2="500.04" y2="552.55" stroke="#8e8e8e" stroke-width="0.9" stroke-dasharray="1.1 1.3"/>
<line x1="556.85" y1="520.33" x2="501.74" y2="553.27" stroke="#a8a8a8" stroke-width="1.2"/>
<line x1="558.56" y1="521.05" x2="503.44" y2="553.98" stroke="#8e8e8e" stroke-width="0.9" stroke-dasharray="1.1 1.3"/>
<line x1="560.26" y1="521.76" x2="505.15" y2="554.70" stroke="#a8a8a8" stroke-width="1.2"/>
<line x1="561.96" y1="522.48" x2="506.85" y2="555.41" stroke="#8e8e8e" stroke-width="0.9" stroke-dasharray="1.1 1.3"/>
<line x1="563.67" y1="523.19" x2="508.55" y2="556.13" stroke="#a8a8a8" stroke-width="1.2"/>
<line x1="565.37" y1="523.91" x2="510.26" y2="556.84" stroke="#8e8e8e" stroke-width="0.9" stroke-dasharray="1.1 1.3"/>
<line x1="567.07" y1="524.62" x2="511.96" y2="557.56" stroke="#a8a8a8" stroke-width="1.2"/>
<line x1="568.78" y1="525.34" x2="513.66" y2="558.27" stroke="#8e8e8e" stroke-width="0.9" stroke-dasharray="1.1 1.3"/>
<line x1="570.48" y1="526.05" x2="515.37" y2="558.99" stroke="#a8a8a8" stroke-width="1.2"/>
<line x1="572.18" y1="526.77" x2="517.07" y2="559.70" stroke="#8e8e8e" stroke-width="0.9" stroke-dasharray="1.1 1.3"/>
<line x1="573.89" y1="527.48" x2="518.77" y2="560.42" stroke="#a8a8a8" stroke-width="1.2"/>
<line x1="575.59" y1="528.20" x2="520.48" y2="561.13" stroke="#8e8e8e" stroke-width="0.9" stroke-dasharray="1.1 1.3"/>
<line x1="577.29" y1="528.92" x2="522.18" y2="561.85" stroke="#a8a8a8" stroke-width="1.2"/>
<line x1="579.00" y1="529.63" x2="523.88" y2="562.57" stroke="#8e8e8e" stroke-width="0.9" stroke-dasharray="1.1 1.3"/>
<line x1="580.70" y1="530.35" x2="525.58" y2="563.28" stroke="#a8a8a8" stroke-width="1.2"/>
<line x1="582.40" y1="531.06" x2="527.29" y2="564.00" stroke="#8e8e8e" stroke-width="0.9" stroke-dasharray="1.1 1.3"/>
<line x1="584.10" y1="531.78" x2="528.99" y2="564.71" stroke="#a8a8a8" stroke-width="1.2"/>
<line x1="585.81" y1="532.49" x2="530.69" y2="565.43" stroke="#8e8e8e" stroke-width="0.9" stroke-dasharray="1.1 1.3"/>
<line x1="587.51" y1="533.21" x2="532.40" y2="566.14" stroke="#a8a8a8" stroke-width="1.2"/>
<line x1="589.21" y1="533.92" x2="534.10" y2="566.86" stroke="#8e8e8e" stroke-width="0.9" stroke-dasharray="1.1 1.3"/>
<line x1="590.92" y1="534.64" x2="535.80" y2="567.57" stroke="#a8a8a8" stroke-width="1.2"/>
<line x1="592.62" y1="535.35" x2="537.51" y2="568.29" stroke="#8e8e8e" stroke-width="0.9" stroke-dasharray="1.1 1.3"/>
<line x1="594.32" y1="536.07" x2="539.21" y2="569.00" stroke="#a8a8a8" stroke-width="1.2"/>
<line x1="596.03" y1="536.79" x2="540.91" y2="569.72" stroke="#8e8e8e" stroke-width="0.9" stroke-dasharray="1.1 1.3"/>
<line x1="597.73" y1="537.50" x2="542.62" y2="570.44" stroke="#a8a8a8" stroke-width="1.2"/>
<line x1="599.43" y1="538.22" x2="544.32" y2="571.15" stroke="#8e8e8e" stroke-width="0.9" stroke-dasharray="1.1 1.3"/>
<line x1="601.14" y1="538.93" x2="546.02" y2="571.87" stroke="#a8a8a8" stroke-width="1.2"/>
<line x1="602.84" y1="539.65" x2="547.73" y2="572.58" stroke="#8e8e8e" stroke-width="0.9" stroke-dasharray="1.1 1.3"/>
<line x1="604.54" y1="540.36" x2="549.43" y2="573.30" stroke="#a8a8a8" stroke-width="1.2"/>
<line x1="606.25" y1="541.08" x2="551.13" y2="574.01" stroke="#8e8e8e" stroke-width="0.9" stroke-dasharray="1.1 1.3"/>
<line x1="607.95" y1="541.79" x2="552.84" y2="574.73" stroke="#a8a8a8" stroke-width="1.2"/>
<line x1="609.65" y1="542.51" x2="554.54" y2="575.44" stroke="#8e8e8e" stroke-width="0.9" stroke-dasharray="1.1 1.3"/>
<line x1="611.36" y1="543.22" x2="556.24" y2="576.16" stroke="#a8a8a8" stroke-width="1.2"/>
<line x1="613.06" y1="543.94" x2="557.95" y2="576.87" stroke="#8e8e8e" stroke-width="0.9" stroke-dasharray="1.1 1.3"/>
<line x1="614.76" y1="544.65" x2="559.65" y2="577.59" stroke="#a8a8a8" stroke-width="1.2"/>
<line x1="616.47" y1="545.37" x2="561.35" y2="578.30" stroke="#8e8e8e" stroke-width="0.9" stroke-dasharray="1.1 1.3"/>
<line x1="618.17" y1="546.09" x2="563.05" y2="579.02" stroke="#a8a8a8" stroke-width="1.2"/>
<line x1="619.87" y1="546.80" x2="564.76" y2="579.74" stroke="#8e8e8e" stroke-width="0.9" stroke-dasharray="1.1 1.3"/>
<line x1="621.58" y1="547.52" x2="566.46" y2="580.45" stroke="#a8a8a8" stroke-width="1.2"/>
<line x1="623.28" y1="548.23" x2="568.16" y2="581.17" stroke="#8e8e8e" stroke-width="0.9" stroke-dasharray="1.1 1.3"/>
<line x1="624.98" y1="548.95" x2="569.87" y2="581.88" stroke="#a8a8a8" stroke-width="1.2"/>
<line x1="626.68" y1="549.66" x2="571.57" y2="582.60" stroke="#8e8e8e" stroke-width="0.9" stroke-dasharray="1.1 1.3"/>
<line x1="628.39" y1="550.38" x2="573.27" y2="583.31" stroke="#a8a8a8" stroke-width="1.2"/>
<line x1="630.09" y1="551.09" x2="574.98" y2="584.03" stroke="#8e8e8e" stroke-width="0.9" stroke-dasharray="1.1 1.3"/>
<line x1="630.09" y1="551.09" x2="574.98" y2="584.03" stroke="#b8b8b8" stroke-width="0.8"/>
<polygon points="488.44,545.61 486.41,546.83 574.98,584.03 577.01,582.82" fill="#505050"/>
<line x1="491.34" y1="546.83" x2="489.31" y2="548.04" stroke="#646464" stroke-width="0.6"/>
<line x1="493.92" y1="547.91" x2="491.89" y2="549.13" stroke="#646464" stroke-width="0.6"/>
<line x1="496.49" y1="549.00" x2="494.46" y2="550.21" stroke="#b0b0b0" stroke-width="1.0"/>
<line x1="499.39" y1="550.21" x2="497.36" y2="551.43" stroke="#646464" stroke-width="0.6"/>
<line x1="501.97" y1="551.30" x2="499.94" y2="552.51" stroke="#646464" stroke-width="0.6"/>
<line x1="504.54" y1="552.38" x2="502.51" y2="553.59" stroke="#b0b0b0" stroke-width="1.0"/>
<line x1="507.44" y1="553.59" x2="505.41" y2="554.81" stroke="#646464" stroke-width="0.6"/>
<line x1="510.02" y1="554.68" x2="507.99" y2="555.89" stroke="#646464" stroke-width="0.6"/>
<line x1="512.60" y1="555.76" x2="510.57" y2="556.97" stroke="#b0b0b0" stroke-width="1.0"/>
<line x1="515.49" y1="556.98" x2="513.46" y2="558.19" stroke="#646464" stroke-width="0.6"/>
<line x1="518.07" y1="558.06" x2="516.04" y2="559.27" stroke="#646464" stroke-width="0.6"/>
<line x1="520.65" y1="559.14" x2="518.62" y2="560.35" stroke="#b0b0b0" stroke-width="1.0"/>
<line x1="523.55" y1="560.36" x2="521.52" y2="561.57" stroke="#646464" stroke-width="0.6"/>
<line x1="526.12" y1="561.44" x2="524.09" y2="562.65" stroke="#646464" stroke-width="0.6"/>
<line x1="528.70" y1="562.52" x2="526.67" y2="563.74" stroke="#b0b0b0" stroke-width="1.0"/>
<line x1="531.60" y1="563.74" x2="529.57" y2="564.95" stroke="#646464" stroke-width="0.6"/>
<line x1="534.17" y1="564.82" x2="532.14" y2="566.04" stroke="#646464" stroke-width="0.6"/>
<line x1="536.75" y1="565.91" x2="534.72" y2="567.12" stroke="#b0b0b0" stroke-width="1.0"/>
<line x1="539.65" y1="567.12" x2="537.62" y2="568.34" stroke="#646464" stroke-width="0.6"/>
<line x1="542.23" y1="568.20" x2="540.20" y2="569.42" stroke="#646464" stroke-width="0.6"/>
<line x1="544.80" y1="569.29" x2="542.77" y2="570.50" stroke="#b0b0b0" stroke-width="1.0"/>
<line x1="547.70" y1="570.50" x2="545.67" y2="571.72" stroke="#646464" stroke-width="0.6"/>
<line x1="550.28" y1="571.59" x2="548.25" y2="572.80" stroke="#646464" stroke-width="0.6"/>
<line x1="552.85" y1="572.67" x2="550.82" y2="573.88" stroke="#b0b0b0" stroke-width="1.0"/>
<line x1="555.75" y1="573.89" x2="553.72" y2="575.10" stroke="#646464" stroke-width="0.6"/>
<line x1="558.33" y1="574.97" x2="556.30" y2="576.18" stroke="#646464" stroke-width="0.6"/>
<line x1="560.90" y1="576.05" x2="558.87" y2="577.26" stroke="#b0b0b0" stroke-width="1.0"/>
<line x1="563.80" y1="577.27" x2="561.77" y2="578.48" stroke="#646464" stroke-width="0.6"/>
<line x1="566.38" y1="578.35" x2="564.35" y2="579.56" stroke="#646464" stroke-width="0.6"/>
<line x1="568.96" y1="579.43" x2="566.93" y2="580.65" stroke="#b0b0b0" stroke-width="1.0"/>
<line x1="571.85" y1="580.65" x2="569.82" y2="581.86" stroke="#646464" stroke-width="0.6"/>
<line x1="574.43" y1="581.73" x2="572.40" y2="582.95" stroke="#646464" stroke-width="0.6"/>
<linearGradient id="g8" gradientUnits="userSpaceOnUse" x1="748.0" y1="617.6" x2="803.2" y2="559.8"><stop offset="0" stop-color="#dcdcdc"/><stop offset="0.45" stop-color="#a8a8a8"/><stop offset="1" stop-color="#7c7c7c"/></linearGradient>
<polygon points="748.04,617.60 803.15,584.66 803.15,559.80 748.04,592.73" fill="url(#g8)"/>
<polygon points="659.47,580.39 748.04,617.60 748.04,592.73 659.47,555.53" fill="#464646"/>
<polygon points="658.74,575.86 747.30,613.06 747.30,601.63 658.74,564.42" fill="#a0a0a0"/>
<line x1="662.37" y1="565.20" x2="662.37" y2="556.75" stroke="#646464" stroke-width="0.6"/>
<line x1="662.37" y1="581.61" x2="662.37" y2="576.64" stroke="#646464" stroke-width="0.6"/>
<line x1="664.95" y1="566.28" x2="664.95" y2="557.83" stroke="#646464" stroke-width="0.6"/>
<line x1="664.95" y1="582.69" x2="664.95" y2="577.72" stroke="#646464" stroke-width="0.6"/>
<line x1="661.15" y1="575.38" x2="661.15" y2="566.43" stroke="#c6c6c6" stroke-width="1.0"/>
<line x1="665.02" y1="577.01" x2="665.02" y2="568.06" stroke="#c6c6c6" stroke-width="1.0"/>
<line x1="663.16" y1="577.72" x2="663.16" y2="566.28" stroke="#585858" stroke-width="0.9"/>
<line x1="670.42" y1="568.58" x2="670.42" y2="560.13" stroke="#646464" stroke-width="0.6"/>
<line x1="670.42" y1="584.99" x2="670.42" y2="580.02" stroke="#646464" stroke-width="0.6"/>
<line x1="673.00" y1="569.66" x2="673.00" y2="561.21" stroke="#646464" stroke-width="0.6"/>
<line x1="673.00" y1="586.08" x2="673.00" y2="581.10" stroke="#646464" stroke-width="0.6"/>
<line x1="669.20" y1="578.77" x2="669.20" y2="569.82" stroke="#c6c6c6" stroke-width="1.0"/>
<line x1="673.07" y1="580.39" x2="673.07" y2="571.44" stroke="#c6c6c6" stroke-width="1.0"/>
<line x1="671.22" y1="581.10" x2="671.22" y2="569.67" stroke="#585858" stroke-width="0.9"/>
<line x1="667.53" y1="583.78" x2="667.53" y2="558.91" stroke="#b8b8b8" stroke-width="1.1"/>
<line x1="678.48" y1="571.96" x2="678.48" y2="563.51" stroke="#646464" stroke-width="0.6"/>
<line x1="678.48" y1="588.38" x2="678.48" y2="583.40" stroke="#646464" stroke-width="0.6"/>
<line x1="681.05" y1="573.05" x2="681.05" y2="564.59" stroke="#646464" stroke-width="0.6"/>
<line x1="681.05" y1="589.46" x2="681.05" y2="584.48" stroke="#646464" stroke-width="0.6"/>
<line x1="677.25" y1="582.15" x2="677.25" y2="573.20" stroke="#c6c6c6" stroke-width="1.0"/>
<line x1="681.12" y1="583.77" x2="681.12" y2="574.82" stroke="#c6c6c6" stroke-width="1.0"/>
<line x1="679.27" y1="584.49" x2="679.27" y2="573.05" stroke="#585858" stroke-width="0.9"/>
<line x1="675.58" y1="587.16" x2="675.58" y2="562.29" stroke="#b8b8b8" stroke-width="1.1"/>
<line x1="686.53" y1="575.35" x2="686.53" y2="566.89" stroke="#646464" stroke-width="0.6"/>
<line x1="686.53" y1="591.76" x2="686.53" y2="586.78" stroke="#646464" stroke-width="0.6"/>
<line x1="689.10" y1="576.43" x2="689.10" y2="567.97" stroke="#646464" stroke-width="0.6"/>
<line x1="689.10" y1="592.84" x2="689.10" y2="587.87" stroke="#646464" stroke-width="0.6"/>
<line x1="685.31" y1="585.53" x2="685.31" y2="576.58" stroke="#c6c6c6" stroke-width="1.0"/>
<line x1="689.17" y1="587.15" x2="689.17" y2="578.20" stroke="#c6c6c6" stroke-width="1.0"/>
<line x1="687.32" y1="587.87" x2="687.32" y2="576.43" stroke="#585858" stroke-width="0.9"/>
<line x1="683.63" y1="590.54" x2="683.63" y2="565.67" stroke="#b8b8b8" stroke-width="1.1"/>
<line x1="694.58" y1="578.73" x2="694.58" y2="570.27" stroke="#646464" stroke-width="0.6"/>
<line x1="694.58" y1="595.14" x2="694.58" y2="590.17" stroke="#646464" stroke-width="0.6"/>
<line x1="697.15" y1="579.81" x2="697.15" y2="571.36" stroke="#646464" stroke-width="0.6"/>
<line x1="697.15" y1="596.22" x2="697.15" y2="591.25" stroke="#646464" stroke-width="0.6"/>
<line x1="693.36" y1="588.91" x2="693.36" y2="579.96" stroke="#c6c6c6" stroke-width="1.0"/>
<line x1="697.22" y1="590.54" x2="697.22" y2="581.58" stroke="#c6c6c6" stroke-width="1.0"/>
<line x1="695.37" y1="591.25" x2="695.37" y2="579.81" stroke="#585858" stroke-width="0.9"/>
<line x1="691.68" y1="593.92" x2="691.68" y2="569.06" stroke="#b8b8b8" stroke-width="1.1"/>
<line x1="702.63" y1="582.11" x2="702.63" y2="573.66" stroke="#646464" stroke-width="0.6"/>
<line x1="702.63" y1="598.52" x2="702.63" y2="593.55" stroke="#646464" stroke-width="0.6"/>
<line x1="705.21" y1="583.19" x2="705.21" y2="574.74" stroke="#646464" stroke-width="0.6"/>
<line x1="705.21" y1="599.60" x2="705.21" y2="594.63" stroke="#646464" stroke-width="0.6"/>
<line x1="701.41" y1="592.29" x2="701.41" y2="583.34" stroke="#c6c6c6" stroke-width="1.0"/>
<line x1="705.27" y1="593.92" x2="705.27" y2="584.97" stroke="#c6c6c6" stroke-width="1.0"/>
<line x1="703.42" y1="594.63" x2="703.42" y2="583.19" stroke="#585858" stroke-width="0.9"/>
<line x1="699.73" y1="597.30" x2="699.73" y2="572.44" stroke="#b8b8b8" stroke-width="1.1"/>
<line x1="710.68" y1="585.49" x2="710.68" y2="577.04" stroke="#646464" stroke-width="0.6"/>
<line x1="710.68" y1="601.90" x2="710.68" y2="596.93" stroke="#646464" stroke-width="0.6"/>
<line x1="713.26" y1="586.57" x2="713.26" y2="578.12" stroke="#646464" stroke-width="0.6"/>
<line x1="713.26" y1="602.99" x2="713.26" y2="598.01" stroke="#646464" stroke-width="0.6"/>
<line x1="709.46" y1="595.68" x2="709.46" y2="586.72" stroke="#c6c6c6" stroke-width="1.0"/>
<line x1="713.32" y1="597.30" x2="713.32" y2="588.35" stroke="#c6c6c6" stroke-width="1.0"/>
<line x1="711.47" y1="598.01" x2="711.47" y2="586.58" stroke="#585858" stroke-width="0.9"/>
<line x1="707.78" y1="600.69" x2="707.78" y2="575.82" stroke="#b8b8b8" stroke-width="1.1"/>
<line x1="718.73" y1="588.87" x2="718.73" y2="580.42" stroke="#646464" stroke-width="0.6"/>
<line x1="718.73" y1="605.29" x2="718.73" y2="600.31" stroke="#646464" stroke-width="0.6"/>
<line x1="721.31" y1="589.96" x2="721.31" y2="581.50" stroke="#646464" stroke-width="0.6"/>
<line x1="721.31" y1="606.37" x2="721.31" y2="601.39" stroke="#646464" stroke-width="0.6"/>
<line x1="717.51" y1="599.06" x2="717.51" y2="590.11" stroke="#c6c6c6" stroke-width="1.0"/>
<line x1="721.38" y1="600.68" x2="721.38" y2="591.73" stroke="#c6c6c6" stroke-width="1.0"/>
<line x1="719.52" y1="601.40" x2="719.52" y2="589.96" stroke="#585858" stroke-width="0.9"/>
<line x1="715.83" y1="604.07" x2="715.83" y2="579.20" stroke="#b8b8b8" stroke-width="1.1"/>
<line x1="726.78" y1="592.26" x2="726.78" y2="583.80" stroke="#646464" stroke-width="0.6"/>
<line x1="726.78" y1="608.67" x2="726.78" y2="603.69" stroke="#646464" stroke-width="0.6"/>
<line x1="729.36" y1="593.34" x2="729.36" y2="584.88" stroke="#646464" stroke-width="0.6"/>
<line x1="729.36" y1="609.75" x2="729.36" y2="604.78" stroke="#646464" stroke-width="0.6"/>
<line x1="725.56" y1="602.44" x2="725.56" y2="593.49" stroke="#c6c6c6" stroke-width="1.0"/>
<line x1="729.43" y1="604.06" x2="729.43" y2="595.11" stroke="#c6c6c6" stroke-width="1.0"/>
<line x1="727.58" y1="604.78" x2="727.58" y2="593.34" stroke="#585858" stroke-width="0.9"/>
<line x1="723.89" y1="607.45" x2="723.89" y2="582.58" stroke="#b8b8b8" stroke-width="1.1"/>
<line x1="734.83" y1="595.64" x2="734.83" y2="587.18" stroke="#646464" stroke-width="0.6"/>
<line x1="734.83" y1="612.05" x2="734.83" y2="607.08" stroke="#646464" stroke-width="0.6"/>
<line x1="737.41" y1="596.72" x2="737.41" y2="588.27" stroke="#646464" stroke-width="0.6"/>
<line x1="737.41" y1="613.13" x2="737.41" y2="608.16" stroke="#646464" stroke-width="0.6"/>
<line x1="733.61" y1="605.82" x2="733.61" y2="596.87" stroke="#c6c6c6" stroke-width="1.0"/>
<line x1="737.48" y1="607.45" x2="737.48" y2="598.49" stroke="#c6c6c6" stroke-width="1.0"/>
<line x1="735.63" y1="608.16" x2="735.63" y2="596.72" stroke="#585858" stroke-width="0.9"/>
<line x1="731.94" y1="610.83" x2="731.94" y2="585.97" stroke="#b8b8b8" stroke-width="1.1"/>
<line x1="742.89" y1="599.02" x2="742.89" y2="590.57" stroke="#646464" stroke-width="0.6"/>
<line x1="742.89" y1="615.43" x2="742.89" y2="610.46" stroke="#646464" stroke-width="0.6"/>
<line x1="745.46" y1="600.10" x2="745.46" y2="591.65" stroke="#646464" stroke-width="0.6"/>
<line x1="745.46" y1="616.51" x2="745.46" y2="611.54" stroke="#646464" stroke-width="0.6"/>
<line x1="741.67" y1="609.20" x2="741.67" y2="600.25" stroke="#c6c6c6" stroke-width="1.0"/>
<line x1="745.53" y1="610.83" x2="745.53" y2="601.88" stroke="#c6c6c6" stroke-width="1.0"/>
<line x1="743.68" y1="611.54" x2="743.68" y2="600.10" stroke="#585858" stroke-width="0.9"/>
<line x1="739.99" y1="614.21" x2="739.99" y2="589.35" stroke="#b8b8b8" stroke-width="1.1"/>
<polygon points="714.59,522.59 659.47,555.53 748.04,592.73 803.15,559.80" fill="#6c6c6c"/>
<line x1="716.29" y1="523.31" x2="661.18" y2="556.24" stroke="#a8a8a8" stroke-width="1.2"/>
<line x1="717.99" y1="524.02" x2="662.88" y2="556.96" stroke="#8e8e8e" stroke-width="0.9" stroke-dasharray="1.1 1.3"/>
<line x1="719.70" y1="524.74" x2="664.58" y2="557.67" stroke="#a8a8a8" stroke-width="1.2"/>
<line x1="721.40" y1="525.46" x2="666.29" y2="558.39" stroke="#8e8e8e" stroke-width="0.9" stroke-dasharray="1.1 1.3"/>
<line x1="723.10" y1="526.17" x2="667.99" y2="559.11" stroke="#a8a8a8" stroke-width="1.2"/>
<line x1="724.81" y1="526.89" x2="669.69" y2="559.82" stroke="#8e8e8e" stroke-width="0.9" stroke-dasharray="1.1 1.3"/>
<line x1="726.51" y1="527.60" x2="671.40" y2="560.54" stroke="#a8a8a8" stroke-width="1.2"/>
<line x1="728.21" y1="528.32" x2="673.10" y2="561.25" stroke="#8e8e8e" stroke-width="0.9" stroke-dasharray="1.1 1.3"/>
<line x1="729.92" y1="529.03" x2="674.80" y2="561.97" stroke="#a8a8a8" stroke-width="1.2"/>
<line x1="731.62" y1="529.75" x2="676.51" y2="562.68" stroke="#8e8e8e" stroke-width="0.9" stroke-dasharray="1.1 1.3"/>
<line x1="733.32" y1="530.46" x2="678.21" y2="563.40" stroke="#a8a8a8" stroke-width="1.2"/>
<line x1="735.03" y1="531.18" x2="679.91" y2="564.11" stroke="#8e8e8e" stroke-width="0.9" stroke-dasharray="1.1 1.3"/>
<line x1="736.73" y1="531.89" x2="681.62" y2="564.83" stroke="#a8a8a8" stroke-width="1.2"/>
<line x1="738.43" y1="532.61" x2="683.32" y2="565.54" stroke="#8e8e8e" stroke-width="0.9" stroke-dasharray="1.1 1.3"/>
<line x1="740.14" y1="533.32" x2="685.02" y2="566.26" stroke="#a8a8a8" stroke-width="1.2"/>
<line x1="741.84" y1="534.04" x2="686.72" y2="566.98" stroke="#8e8e8e" stroke-width="0.9" stroke-dasharray="1.1 1.3"/>
<line x1="743.54" y1="534.76" x2="688.43" y2="567.69" stroke="#a8a8a8" stroke-width="1.2"/>
<line x1="745.24" y1="535.47" x2="690.13" y2="568.41" stroke="#8e8e8e" stroke-width="0.9" stroke-dasharray="1.1 1.3"/>
<line x1="746.95" y1="536.19" x2="691.83" y2="569.12" stroke="#a8a8a8" stroke-width="1.2"/>
<line x1="748.65" y1="536.90" x2="693.54" y2="569.84" stroke="#8e8e8e" stroke-width="0.9" stroke-dasharray="1.1 1.3"/>
<line x1="750.35" y1="537.62" x2="695.24" y2="570.55" stroke="#a8a8a8" stroke-width="1.2"/>
<line x1="752.06" y1="538.33" x2="696.94" y2="571.27" stroke="#8e8e8e" stroke-width="0.9" stroke-dasharray="1.1 1.3"/>
<line x1="753.76" y1="539.05" x2="698.65" y2="571.98" stroke="#a8a8a8" stroke-width="1.2"/>
<line x1="755.46" y1="539.76" x2="700.35" y2="572.70" stroke="#8e8e8e" stroke-width="0.9" stroke-dasharray="1.1 1.3"/>
<line x1="757.17" y1="540.48" x2="702.05" y2="573.41" stroke="#a8a8a8" stroke-width="1.2"/>
<line x1="758.87" y1="541.19" x2="703.76" y2="574.13" stroke="#8e8e8e" stroke-width="0.9" stroke-dasharray="1.1 1.3"/>
<line x1="760.57" y1="541.91" x2="705.46" y2="574.84" stroke="#a8a8a8" stroke-width="1.2"/>
<line x1="762.28" y1="542.63" x2="707.16" y2="575.56" stroke="#8e8e8e" stroke-width="0.9" stroke-dasharray="1.1 1.3"/>
<line x1="763.98" y1="543.34" x2="708.87" y2="576.28" stroke="#a8a8a8" stroke-width="1.2"/>
<line x1="765.68" y1="544.06" x2="710.57" y2="576.99" stroke="#8e8e8e" stroke-width="0.9" stroke-dasharray="1.1 1.3"/>
<line x1="767.39" y1="544.77" x2="712.27" y2="577.71" stroke="#a8a8a8" stroke-width="1.2"/>
<line x1="769.09" y1="545.49" x2="713.98" y2="578.42" stroke="#8e8e8e" stroke-width="0.9" stroke-dasharray="1.1 1.3"/>
<line x1="770.79" y1="546.20" x2="715.68" y2="579.14" stroke="#a8a8a8" stroke-width="1.2"/>
<line x1="772.50" y1="546.92" x2="717.38" y2="579.85" stroke="#8e8e8e" stroke-width="0.9" stroke-dasharray="1.1 1.3"/>
<line x1="774.20" y1="547.63" x2="719.09" y2="580.57" stroke="#a8a8a8" stroke-width="1.2"/>
<line x1="775.90" y1="548.35" x2="720.79" y2="581.28" stroke="#8e8e8e" stroke-width="0.9" stroke-dasharray="1.1 1.3"/>
<line x1="777.61" y1="549.06" x2="722.49" y2="582.00" stroke="#a8a8a8" stroke-width="1.2"/>
<line x1="779.31" y1="549.78" x2="724.19" y2="582.71" stroke="#8e8e8e" stroke-width="0.9" stroke-dasharray="1.1 1.3"/>
<line x1="781.01" y1="550.49" x2="725.90" y2="583.43" stroke="#a8a8a8" stroke-width="1.2"/>
<line x1="782.71" y1="551.21" x2="727.60" y2="584.15" stroke="#8e8e8e" stroke-width="0.9" stroke-dasharray="1.1 1.3"/>
<line x1="784.42" y1="551.93" x2="729.30" y2="584.86" stroke="#a8a8a8" stroke-width="1.2"/>
<line x1="786.12" y1="552.64" x2="731.01" y2="585.58" stroke="#8e8e8e" stroke-width="0.9" stroke-dasharray="1.1 1.3"/>
<line x1="787.82" y1="553.36" x2="732.71" y2="586.29" stroke="#a8a8a8" stroke-width="1.2"/>
<line x1="789.53" y1="554.07" x2="734.41" y2="587.01" stroke="#8e8e8e" stroke-width="0.9" stroke-dasharray="1.1 1.3"/>
<line x1="791.23" y1="554.79" x2="736.12" y2="587.72" stroke="#a8a8a8" stroke-width="1.2"/>
<line x1="792.93" y1="555.50" x2="737.82" y2="588.44" stroke="#8e8e8e" stroke-width="0.9" stroke-dasharray="1.1 1.3"/>
<line x1="794.64" y1="556.22" x2="739.52" y2="589.15" stroke="#a8a8a8" stroke-width="1.2"/>
<line x1="796.34" y1="556.93" x2="741.23" y2="589.87" stroke="#8e8e8e" stroke-width="0.9" stroke-dasharray="1.1 1.3"/>
<line x1="798.04" y1="557.65" x2="742.93" y2="590.58" stroke="#a8a8a8" stroke-width="1.2"/>
<line x1="799.75" y1="558.36" x2="744.63" y2="591.30" stroke="#8e8e8e" stroke-width="0.9" stroke-dasharray="1.1 1.3"/>
<line x1="801.45" y1="559.08" x2="746.34" y2="592.01" stroke="#a8a8a8" stroke-width="1.2"/>
<line x1="803.15" y1="559.80" x2="748.04" y2="592.73" stroke="#8e8e8e" stroke-width="0.9" stroke-dasharray="1.1 1.3"/>
<line x1="803.15" y1="559.80" x2="748.04" y2="592.73" stroke="#b8b8b8" stroke-width="0.8"/>
<polygon points="661.50,554.32 659.47,555.53 748.04,592.73 750.07,591.52" fill="#505050"/>
<line x1="664.40" y1="555.53" x2="662.37" y2="556.75" stroke="#646464" stroke-width="0.6"/>
<line x1="666.98" y1="556.61" x2="664.95" y2="557.83" stroke="#646464" stroke-width="0.6"/>
<line x1="669.56" y1="557.70" x2="667.53" y2="558.91" stroke="#b0b0b0" stroke-width="1.0"/>
<line x1="672.45" y1="558.91" x2="670.42" y2="560.13" stroke="#646464" stroke-width="0.6"/>
<line x1="675.03" y1="560.00" x2="673.00" y2="561.21" stroke="#646464" stroke-width="0.6"/>
<line x1="677.61" y1="561.08" x2="675.58" y2="562.29" stroke="#b0b0b0" stroke-width="1.0"/>
<line x1="680.51" y1="562.30" x2="678.48" y2="563.51" stroke="#646464" stroke-width="0.6"/>
<line x1="683.08" y1="563.38" x2="681.05" y2="564.59" stroke="#646464" stroke-width="0.6"/>
<line x1="685.66" y1="564.46" x2="683.63" y2="565.67" stroke="#b0b0b0" stroke-width="1.0"/>
<line x1="688.56" y1="565.68" x2="686.53" y2="566.89" stroke="#646464" stroke-width="0.6"/>
<line x1="691.13" y1="566.76" x2="689.10" y2="567.97" stroke="#646464" stroke-width="0.6"/>
<line x1="693.71" y1="567.84" x2="691.68" y2="569.06" stroke="#b0b0b0" stroke-width="1.0"/>
<line x1="696.61" y1="569.06" x2="694.58" y2="570.27" stroke="#646464" stroke-width="0.6"/>
<line x1="699.18" y1="570.14" x2="697.15" y2="571.36" stroke="#646464" stroke-width="0.6"/>
<line x1="701.76" y1="571.22" x2="699.73" y2="572.44" stroke="#b0b0b0" stroke-width="1.0"/>
<line x1="704.66" y1="572.44" x2="702.63" y2="573.66" stroke="#646464" stroke-width="0.6"/>
<line x1="707.24" y1="573.52" x2="705.21" y2="574.74" stroke="#646464" stroke-width="0.6"/>
<line x1="709.81" y1="574.61" x2="707.78" y2="575.82" stroke="#b0b0b0" stroke-width="1.0"/>
<line x1="712.71" y1="575.82" x2="710.68" y2="577.04" stroke="#646464" stroke-width="0.6"/>
<line x1="715.29" y1="576.91" x2="713.26" y2="578.12" stroke="#646464" stroke-width="0.6"/>
<line x1="717.86" y1="577.99" x2="715.83" y2="579.20" stroke="#b0b0b0" stroke-width="1.0"/>
<line x1="720.76" y1="579.21" x2="718.73" y2="580.42" stroke="#646464" stroke-width="0.6"/>
<line x1="723.34" y1="580.29" x2="721.31" y2="581.50" stroke="#646464" stroke-width="0.6"/>
<line x1="725.92" y1="581.37" x2="723.89" y2="582.58" stroke="#b0b0b0" stroke-width="1.0"/>
<line x1="728.81" y1="582.59" x2="726.78" y2="583.80" stroke="#646464" stroke-width="0.6"/>
<line x1="731.39" y1="583.67" x2="729.36" y2="584.88" stroke="#646464" stroke-width="0.6"/>
<line x1="733.97" y1="584.75" x2="731.94" y2="585.97" stroke="#b0b0b0" stroke-width="1.0"/>
<line x1="736.87" y1="585.97" x2="734.83" y2="587.18" stroke="#646464" stroke-width="0.6"/>
<line x1="739.44" y1="587.05" x2="737.41" y2="588.27" stroke="#646464" stroke-width="0.6"/>
<line x1="742.02" y1="588.13" x2="739.99" y2="589.35" stroke="#b0b0b0" stroke-width="1.0"/>
<line x1="744.92" y1="589.35" x2="742.89" y2="590.57" stroke="#646464" stroke-width="0.6"/>
<line x1="747.49" y1="590.43" x2="745.46" y2="591.65" stroke="#646464" stroke-width="0.6"/>
<linearGradient id="g9" gradientUnits="userSpaceOnUse" x1="685.2" y1="655.2" x2="740.3" y2="597.4"><stop offset="0" stop-color="#dcdcdc"/><stop offset="0.45" stop-color="#a8a8a8"/><stop offset="1" stop-color="#7c7c7c"/></linearGradient>
<polygon points="685.15,655.17 740.27,622.24 740.27,597.37 685.15,630.31" fill="url(#g9)"/>
<polygon points="596.59,617.97 685.15,655.17 685.15,630.31 596.59,593.11" fill="#464646"/>
<polygon points="595.85,613.44 684.42,650.64 684.42,639.20 595.85,602.00" fill="#a0a0a0"/>
<line x1="599.49" y1="602.78" x2="599.49" y2="594.32" stroke="#646464" stroke-width="0.6"/>
<line x1="599.49" y1="619.19" x2="599.49" y2="614.22" stroke="#646464" stroke-width="0.6"/>
<line x1="602.06" y1="603.86" x2="602.06" y2="595.41" stroke="#646464" stroke-width="0.6"/>
<line x1="602.06" y1="620.27" x2="602.06" y2="615.30" stroke="#646464" stroke-width="0.6"/>
<line x1="598.27" y1="612.96" x2="598.27" y2="604.01" stroke="#c6c6c6" stroke-width="1.0"/>
<line x1="602.13" y1="614.59" x2="602.13" y2="605.63" stroke="#c6c6c6" stroke-width="1.0"/>
<line x1="600.28" y1="615.30" x2="600.28" y2="603.86" stroke="#585858" stroke-width="0.9"/>
<line x1="607.54" y1="606.16" x2="607.54" y2="597.71" stroke="#646464" stroke-width="0.6"/>
<line x1="607.54" y1="622.57" x2="607.54" y2="617.60" stroke="#646464" stroke-width="0.6"/>
<line x1="610.12" y1="607.24" x2="610.12" y2="598.79" stroke="#646464" stroke-width="0.6"/>
<line x1="610.12" y1="623.65" x2="610.12" y2="618.68" stroke="#646464" stroke-width="0.6"/>
<line x1="606.32" y1="616.34" x2="606.32" y2="607.39" stroke="#c6c6c6" stroke-width="1.0"/>
<line x1="610.18" y1="617.97" x2="610.18" y2="609.02" stroke="#c6c6c6" stroke-width="1.0"/>
<line x1="608.33" y1="618.68" x2="608.33" y2="607.24" stroke="#585858" stroke-width="0.9"/>
<line x1="604.64" y1="621.35" x2="604.64" y2="596.49" stroke="#b8b8b8" stroke-width="1.1"/>
<line x1="615.59" y1="609.54" x2="615.59" y2="601.09" stroke="#646464" stroke-width="0.6"/>
<line x1="615.59" y1="625.95" x2="615.59" y2="620.98" stroke="#646464" stroke-width="0.6"/>
<line x1="618.17" y1="610.62" x2="618.17" y2="602.17" stroke="#646464" stroke-width="0.6"/>
<line x1="618.17" y1="627.04" x2="618.17" y2="622.06" stroke="#646464" stroke-width="0.6"/>
<line x1="614.37" y1="619.73" x2="614.37" y2="610.78" stroke="#c6c6c6" stroke-width="1.0"/>
<line x1="618.23" y1="621.35" x2="618.23" y2="612.40" stroke="#c6c6c6" stroke-width="1.0"/>
<line x1="616.38" y1="622.06" x2="616.38" y2="610.63" stroke="#585858" stroke-width="0.9"/>
<line x1="612.69" y1="624.74" x2="612.69" y2="599.87" stroke="#b8b8b8" stroke-width="1.1"/>
<line x1="623.64" y1="612.92" x2="623.64" y2="604.47" stroke="#646464" stroke-width="0.6"/>
<line x1="623.64" y1="629.34" x2="623.64" y2="624.36" stroke="#646464" stroke-width="0.6"/>
<line x1="626.22" y1="614.01" x2="626.22" y2="605.55" stroke="#646464" stroke-width="0.6"/>
<line x1="626.22" y1="630.42" x2="626.22" y2="625.44" stroke="#646464" stroke-width="0.6"/>
<line x1="622.42" y1="623.11" x2="622.42" y2="614.16" stroke="#c6c6c6" stroke-width="1.0"/>
<line x1="626.29" y1="624.73" x2="626.29" y2="615.78" stroke="#c6c6c6" stroke-width="1.0"/>
<line x1="624.43" y1="625.45" x2="624.43" y2="614.01" stroke="#585858" stroke-width="0.9"/>
<line x1="620.74" y1="628.12" x2="620.74" y2="603.25" stroke="#b8b8b8" stroke-width="1.1"/>
<line x1="631.69" y1="616.31" x2="631.69" y2="607.85" stroke="#646464" stroke-width="0.6"/>
<line x1="631.69" y1="632.72" x2="631.69" y2="627.74" stroke="#646464" stroke-width="0.6"/>
<line x1="634.27" y1="617.39" x2="634.27" y2="608.93" stroke="#646464" stroke-width="0.6"/>
<line x1="634.27" y1="633.80" x2="634.27" y2="628.83" stroke="#646464" stroke-width="0.6"/>
<line x1="630.47" y1="626.49" x2="630.47" y2="617.54" stroke="#c6c6c6" stroke-width="1.0"/>
<line x1="634.34" y1="628.11" x2="634.34" y2="619.16" stroke="#c6c6c6" stroke-width="1.0"/>
<line x1="632.48" y1="628.83" x2="632.48" y2="617.39" stroke="#585858" stroke-width="0.9"/>
<line x1="628.79" y1="631.50" x2="628.79" y2="606.63" stroke="#b8b8b8" stroke-width="1.1"/>
<line x1="639.74" y1="619.69" x2="639.74" y2="611.23" stroke="#646464" stroke-width="0.6"/>
<line x1="639.74" y1="636.10" x2="639.74" y2="631.13" stroke="#646464" stroke-width="0.6"/>
<line x1="642.32" y1="620.77" x2="642.32" y2="612.32" stroke="#646464" stroke-width="0.6"/>
<line x1="642.32" y1="637.18" x2="642.32" y2="632.21" stroke="#646464" stroke-width="0.6"/>
<line x1="638.52" y1="629.87" x2="638.52" y2="620.92" stroke="#c6c6c6" stroke-width="1.0"/>
<line x1="642.39" y1="631.50" x2="642.39" y2="622.54" stroke="#c6c6c6" stroke-width="1.0"/>
<line x1="640.54" y1="632.21" x2="640.54" y2="620.77" stroke="#585858" stroke-width="0.9"/>
<line x1="636.85" y1="634.88" x2="636.85" y2="610.02" stroke="#b8b8b8" stroke-width="1.1"/>
<line x1="647.80" y1="623.07" x2="647.80" y2="614.62" stroke="#646464" stroke-width="0.6"/>
<line x1="647.80" y1="639.48" x2="647.80" y2="634.51" stroke="#646464" stroke-width="0.6"/>
<line x1="650.37" y1="624.15" x2="650.37" y2="615.70" stroke="#646464" stroke-width="0.6"/>
<line x1="650.37" y1="640.56" x2="650.37" y2="635.59" stroke="#646464" stroke-width="0.6"/>
<line x1="646.57" y1="633.25" x2="646.57" y2="624.30" stroke="#c6c6c6" stroke-width="1.0"/>
<line x1="650.44" y1="634.88" x2="650.44" y2="625.93" stroke="#c6c6c6" stroke-width="1.0"/>
<line x1="648.59" y1="635.59" x2="648.59" y2="624.15" stroke="#585858" stroke-width="0.9"/>
<line x1="644.90" y1="638.26" x2="644.90" y2="613.40" stroke="#b8b8b8" stroke-width="1.1"/>
<line x1="655.85" y1="626.45" x2="655.85" y2="618.00" stroke="#646464" stroke-width="0.6"/>
<line x1="655.85" y1="642.86" x2="655.85" y2="637.89" stroke="#646464" stroke-width="0.6"/>
<line x1="658.42" y1="627.53" x2="658.42" y2="619.08" stroke="#646464" stroke-width="0.6"/>
<line x1="658.42" y1="643.95" x2="658.42" y2="638.97" stroke="#646464" stroke-width="0.6"/>
<line x1="654.63" y1="636.64" x2="654.63" y2="627.69" stroke="#c6c6c6" stroke-width="1.0"/>
<line x1="658.49" y1="638.26" x2="658.49" y2="629.31" stroke="#c6c6c6" stroke-width="1.0"/>
<line x1="656.64" y1="638.97" x2="656.64" y2="627.54" stroke="#585858" stroke-width="0.9"/>
<line x1="652.95" y1="641.65" x2="652.95" y2="616.78" stroke="#b8b8b8" stroke-width="1.1"/>
<line x1="663.90" y1="629.83" x2="663.90" y2="621.38" stroke="#646464" stroke-width="0.6"/>
<line x1="663.90" y1="646.25" x2="663.90" y2="641.27" stroke="#646464" stroke-width="0.6"/>
<line x1="666.48" y1="630.92" x2="666.48" y2="622.46" stroke="#646464" stroke-width="0.6"/>
<line x1="666.48" y1="647.33" x2="666.48" y2="642.35" stroke="#646464" stroke-width="0.6"/>
<line x1="662.68" y1="640.02" x2="662.68" y2="631.07" stroke="#c6c6c6" stroke-width="1.0"/>
<line x1="666.54" y1="641.64" x2="666.54" y2="632.69" stroke="#c6c6c6" stroke-width="1.0"/>
<line x1="664.69" y1="642.36" x2="664.69" y2="630.92" stroke="#585858" stroke-width="0.9"/>
<line x1="661.00" y1="645.03" x2="661.00" y2="620.16" stroke="#b8b8b8" stroke-width="1.1"/>
<line x1="671.95" y1="633.22" x2="671.95" y2="624.76" stroke="#646464" stroke-width="0.6"/>
<line x1="671.95" y1="649.63" x2="671.95" y2="644.65" stroke="#646464" stroke-width="0.6"/>
<line x1="674.53" y1="634.30" x2="674.53" y2="625.84" stroke="#646464" stroke-width="0.6"/>
<line x1="674.53" y1="650.71" x2="674.53" y2="645.74" stroke="#646464" stroke-width="0.6"/>
<line x1="670.73" y1="643.40" x2="670.73" y2="634.45" stroke="#c6c6c6" stroke-width="1.0"/>
<line x1="674.59" y1="645.02" x2="674.59" y2="636.07" stroke="#c6c6c6" stroke-width="1.0"/>
<line x1="672.74" y1="645.74" x2="672.74" y2="634.30" stroke="#585858" stroke-width="0.9"/>
<line x1="669.05" y1="648.41" x2="669.05" y2="623.54" stroke="#b8b8b8" stroke-width="1.1"/>
<line x1="680.00" y1="636.60" x2="680.00" y2="628.14" stroke="#646464" stroke-width="0.6"/>
<line x1="680.00" y1="653.01" x2="680.00" y2="648.04" stroke="#646464" stroke-width="0.6"/>
<line x1="682.58" y1="637.68" x2="682.58" y2="629.23" stroke="#646464" stroke-width="0.6"/>
<line x1="682.58" y1="654.09" x2="682.58" y2="649.12" stroke="#646464" stroke-width="0.6"/>
<line x1="678.78" y1="646.78" x2="678.78" y2="637.83" stroke="#c6c6c6" stroke-width="1.0"/>
<line x1="682.65" y1="648.41" x2="682.65" y2="639.45" stroke="#c6c6c6" stroke-width="1.0"/>
<line x1="680.79" y1="649.12" x2="680.79" y2="637.68" stroke="#585858" stroke-width="0.9"/>
<line x1="677.10" y1="651.79" x2="677.10" y2="626.93" stroke="#b8b8b8" stroke-width="1.1"/>
<polygon points="651.70,560.17 596.59,593.11 685.15,630.31 740.27,597.37" fill="#6c6c6c"/>
<line x1="653.41" y1="560.89" x2="598.29" y2="593.82" stroke="#a8a8a8" stroke-width="1.2"/>
<line x1="655.11" y1="561.60" x2="600.00" y2="594.54" stroke="#8e8e8e" stroke-width="0.9" stroke-dasharray="1.1 1.3"/>
<line x1="656.81" y1="562.32" x2="601.70" y2="595.25" stroke="#a8a8a8" stroke-width="1.2"/>
<line x1="658.52" y1="563.03" x2="603.40" y2="595.97" stroke="#8e8e8e" stroke-width="0.9" stroke-dasharray="1.1 1.3"/>
<line x1="660.22" y1="563.75" x2="605.11" y2="596.68" stroke="#a8a8a8" stroke-width="1.2"/>
<line x1="661.92" y1="564.46" x2="606.81" y2="597.40" stroke="#8e8e8e" stroke-width="0.9" stroke-dasharray="1.1 1.3"/>
<line x1="663.63" y1="565.18" x2="608.51" y2="598.11" stroke="#a8a8a8" stroke-width="1.2"/>
<line x1="665.33" y1="565.90" x2="610.21" y2="598.83" stroke="#8e8e8e" stroke-width="0.9" stroke-dasharray="1.1 1.3"/>
<line x1="667.03" y1="566.61" x2="611.92" y2="599.55" stroke="#a8a8a8" stroke-width="1.2"/>
<line x1="668.73" y1="567.33" x2="613.62" y2="600.26" stroke="#8e8e8e" stroke-width="0.9" stroke-dasharray="1.1 1.3"/>
<line x1="670.44" y1="568.04" x2="615.32" y2="600.98" stroke="#a8a8a8" stroke-width="1.2"/>
<line x1="672.14" y1="568.76" x2="617.03" y2="601.69" stroke="#8e8e8e" stroke-width="0.9" stroke-dasharray="1.1 1.3"/>
<line x1="673.84" y1="569.47" x2="618.73" y2="602.41" stroke="#a8a8a8" stroke-width="1.2"/>
<line x1="675.55" y1="570.19" x2="620.43" y2="603.12" stroke="#8e8e8e" stroke-width="0.9" stroke-dasharray="1.1 1.3"/>
<line x1="677.25" y1="570.90" x2="622.14" y2="603.84" stroke="#a8a8a8" stroke-width="1.2"/>
<line x1="678.95" y1="571.62" x2="623.84" y2="604.55" stroke="#8e8e8e" stroke-width="0.9" stroke-dasharray="1.1 1.3"/>
<line x1="680.66" y1="572.33" x2="625.54" y2="605.27" stroke="#a8a8a8" stroke-width="1.2"/>
<line x1="682.36" y1="573.05" x2="627.25" y2="605.98" stroke="#8e8e8e" stroke-width="0.9" stroke-dasharray="1.1 1.3"/>
<line x1="684.06" y1="573.76" x2="628.95" y2="606.70" stroke="#a8a8a8" stroke-width="1.2"/>
<line x1="685.77" y1="574.48" x2="630.65" y2="607.41" stroke="#8e8e8e" stroke-width="0.9" stroke-dasharray="1.1 1.3"/>
<line x1="687.47" y1="575.20" x2="632.36" y2="608.13" stroke="#a8a8a8" stroke-width="1.2"/>
<line x1="689.17" y1="575.91" x2="634.06" y2="608.85" stroke="#8e8e8e" stroke-width="0.9" stroke-dasharray="1.1 1.3"/>
<line x1="690.88" y1="576.63" x2="635.76" y2="609.56" stroke="#a8a8a8" stroke-width="1.2"/>
<line x1="692.58" y1="577.34" x2="637.47" y2="610.28" stroke="#8e8e8e" stroke-width="0.9" stroke-dasharray="1.1 1.3"/>
<line x1="694.28" y1="578.06" x2="639.17" y2="610.99" stroke="#a8a8a8" stroke-width="1.2"/>
<line x1="695.99" y1="578.77" x2="640.87" y2="611.71" stroke="#8e8e8e" stroke-width="0.9" stroke-dasharray="1.1 1.3"/>
<line x1="697.69" y1="579.49" x2="642.58" y2="612.42" stroke="#a8a8a8" stroke-width="1.2"/>
<line x1="699.39" y1="580.20" x2="644.28" y2="613.14" stroke="#8e8e8e" stroke-width="0.9" stroke-dasharray="1.1 1.3"/>
<line x1="701.10" y1="580.92" x2="645.98" y2="613.85" stroke="#a8a8a8" stroke-width="1.2"/>
<line x1="702.80" y1="581.63" x2="647.68" y2="614.57" stroke="#8e8e8e" stroke-width="0.9" stroke-dasharray="1.1 1.3"/>
<line x1="704.50" y1="582.35" x2="649.39" y2="615.28" stroke="#a8a8a8" stroke-width="1.2"/>
<line x1="706.21" y1="583.07" x2="651.09" y2="616.00" stroke="#8e8e8e" stroke-width="0.9" stroke-dasharray="1.1 1.3"/>
<line x1="707.91" y1="583.78" x2="652.79" y2="616.72" stroke="#a8a8a8" stroke-width="1.2"/>
<line x1="709.61" y1="584.50" x2="654.50" y2="617.43" stroke="#8e8e8e" stroke-width="0.9" stroke-dasharray="1.1 1.3"/>
<line x1="711.31" y1="585.21" x2="656.20" y2="618.15" stroke="#a8a8a8" stroke-width="1.2"/>
<line x1="713.02" y1="585.93" x2="657.90" y2="618.86" stroke="#8e8e8e" stroke-width="0.9" stroke-dasharray="1.1 1.3"/>
<line x1="714.72" y1="586.64" x2="659.61" y2="619.58" stroke="#a8a8a8" stroke-width="1.2"/>
<line x1="716.42" y1="587.36" x2="661.31" y2="620.29" stroke="#8e8e8e" stroke-width="0.9" stroke-dasharray="1.1 1.3"/>
<line x1="718.13" y1="588.07" x2="663.01" y2="621.01" stroke="#a8a8a8" stroke-width="1.2"/>
<line x1="719.83" y1="588.79" x2="664.72" y2="621.72" stroke="#8e8e8e" stroke-width="0.9" stroke-dasharray="1.1 1.3"/>
<line x1="721.53" y1="589.50" x2="666.42" y2="622.44" stroke="#a8a8a8" stroke-width="1.2"/>
<line x1="723.24" y1="590.22" x2="668.12" y2="623.15" stroke="#8e8e8e" stroke-width="0.9" stroke-dasharray="1.1 1.3"/>
<line x1="724.94" y1="590.93" x2="669.83" y2="623.87" stroke="#a8a8a8" stroke-width="1.2"/>
<line x1="726.64" y1="591.65" x2="671.53" y2="624.58" stroke="#8e8e8e" stroke-width="0.9" stroke-dasharray="1.1 1.3"/>
<line x1="728.35" y1="592.37" x2="673.23" y2="625.30" stroke="#a8a8a8" stroke-width="1.2"/>
<line x1="730.05" y1="593.08" x2="674.94" y2="626.02" stroke="#8e8e8e" stroke-width="0.9" stroke-dasharray="1.1 1.3"/>
<line x1="731.75" y1="593.80" x2="676.64" y2="626.73" stroke="#a8a8a8" stroke-width="1.2"/>
<line x1="733.46" y1="594.51" x2="678.34" y2="627.45" stroke="#8e8e8e" stroke-width="0.9" stroke-dasharray="1.1 1.3"/>
<line x1="735.16" y1="595.23" x2="680.05" y2="628.16" stroke="#a8a8a8" stroke-width="1.2"/>
<line x1="736.86" y1="595.94" x2="681.75" y2="628.88" stroke="#8e8e8e" stroke-width="0.9" stroke-dasharray="1.1 1.3"/>
<line x1="738.57" y1="596.66" x2="683.45" y2="629.59" stroke="#a8a8a8" stroke-width="1.2"/>
<line x1="740.27" y1="597.37" x2="685.15" y2="630.31" stroke="#8e8e8e" stroke-width="0.9" stroke-dasharray="1.1 1.3"/>
<line x1="740.27" y1="597.37" x2="685.15" y2="630.31" stroke="#b8b8b8" stroke-width="0.8"/>
<polygon points="598.62,591.89 596.59,593.11 685.15,630.31 687.19,629.10" fill="#505050"/>
<line x1="601.52" y1="593.11" x2="599.49" y2="594.32" stroke="#646464" stroke-width="0.6"/>
<line x1="604.09" y1="594.19" x2="602.06" y2="595.41" stroke="#646464" stroke-width="0.6"/>
<line x1="606.67" y1="595.28" x2="604.64" y2="596.49" stroke="#b0b0b0" stroke-width="1.0"/>
<line x1="609.57" y1="596.49" x2="607.54" y2="597.71" stroke="#646464" stroke-width="0.6"/>
<line x1="612.15" y1="597.57" x2="610.12" y2="598.79" stroke="#646464" stroke-width="0.6"/>
<line x1="614.72" y1="598.66" x2="612.69" y2="599.87" stroke="#b0b0b0" stroke-width="1.0"/>
<line x1="617.62" y1="599.87" x2="615.59" y2="601.09" stroke="#646464" stroke-width="0.6"/>
<line x1="620.20" y1="600.96" x2="618.17" y2="602.17" stroke="#646464" stroke-width="0.6"/>
<line x1="622.77" y1="602.04" x2="620.74" y2="603.25" stroke="#b0b0b0" stroke-width="1.0"/>
<line x1="625.67" y1="603.26" x2="623.64" y2="604.47" stroke="#646464" stroke-width="0.6"/>
<line x1="628.25" y1="604.34" x2="626.22" y2="605.55" stroke="#646464" stroke-width="0.6"/>
<line x1="630.83" y1="605.42" x2="628.79" y2="606.63" stroke="#b0b0b0" stroke-width="1.0"/>
<line x1="633.72" y1="606.64" x2="631.69" y2="607.85" stroke="#646464" stroke-width="0.6"/>
<line x1="636.30" y1="607.72" x2="634.27" y2="608.93" stroke="#646464" stroke-width="0.6"/>
<line x1="638.88" y1="608.80" x2="636.85" y2="610.02" stroke="#b0b0b0" stroke-width="1.0"/>
<line x1="641.78" y1="610.02" x2="639.74" y2="611.23" stroke="#646464" stroke-width="0.6"/>
<line x1="644.35" y1="611.10" x2="642.32" y2="612.32" stroke="#646464" stroke-width="0.6"/>
<line x1="646.93" y1="612.19" x2="644.90" y2="613.40" stroke="#b0b0b0" stroke-width="1.0"/>
<line x1="649.83" y1="613.40" x2="647.80" y2="614.62" stroke="#646464" stroke-width="0.6"/>
<line x1="652.40" y1="614.48" x2="650.37" y2="615.70" stroke="#646464" stroke-width="0.6"/>
<line x1="654.98" y1="615.57" x2="652.95" y2="616.78" stroke="#b0b0b0" stroke-width="1.0"/>
<line x1="657.88" y1="616.78" x2="655.85" y2="618.00" stroke="#646464" stroke-width="0.6"/>
<line x1="660.45" y1="617.87" x2="658.42" y2="619.08" stroke="#646464" stroke-width="0.6"/>
<line x1="663.03" y1="618.95" x2="661.00" y2="620.16" stroke="#b0b0b0" stroke-width="1.0"/>
<line x1="665.93" y1="620.17" x2="663.90" y2="621.38" stroke="#646464" stroke-width="0.6"/>
<line x1="668.51" y1="621.25" x2="666.48" y2="622.46" stroke="#646464" stroke-width="0.6"/>
<line x1="671.08" y1="622.33" x2="669.05" y2="623.54" stroke="#b0b0b0" stroke-width="1.0"/>
<line x1="673.98" y1="623.55" x2="671.95" y2="624.76" stroke="#646464" stroke-width="0.6"/>
<line x1="676.56" y1="624.63" x2="674.53" y2="625.84" stroke="#646464" stroke-width="0.6"/>
<line x1="679.13" y1="625.71" x2="677.10" y2="626.93" stroke="#b0b0b0" stroke-width="1.0"/>
<line x1="682.03" y1="626.93" x2="680.00" y2="628.14" stroke="#646464" stroke-width="0.6"/>
<line x1="684.61" y1="628.01" x2="682.58" y2="629.23" stroke="#646464" stroke-width="0.6"/>
<line x1="1015.94" y1="478.85" x2="683.70" y2="677.38" stroke="#262626" stroke-width="1.3"/>
<line x1="463.17" y1="584.75" x2="683.70" y2="677.38" stroke="#262626" stroke-width="1.3"/>
<line x1="463.17" y1="584.75" x2="463.17" y2="560.54" stroke="#262626" stroke-width="1.3"/>
<line x1="1015.94" y1="478.85" x2="1025.24" y2="483.25" stroke="#262626" stroke-width="1.2"/>
<line x1="979.02" y1="500.91" x2="988.32" y2="505.31" stroke="#262626" stroke-width="1.2"/>
<line x1="942.11" y1="522.97" x2="951.41" y2="527.37" stroke="#262626" stroke-width="1.2"/>
<line x1="905.19" y1="545.03" x2="914.49" y2="549.43" stroke="#262626" stroke-width="1.2"/>
<line x1="868.28" y1="567.09" x2="877.58" y2="571.49" stroke="#262626" stroke-width="1.2"/>
<line x1="831.36" y1="589.15" x2="840.66" y2="593.55" stroke="#262626" stroke-width="1.2"/>
<line x1="794.45" y1="611.21" x2="803.75" y2="615.61" stroke="#262626" stroke-width="1.2"/>
<line x1="757.53" y1="633.27" x2="766.83" y2="637.67" stroke="#262626" stroke-width="1.2"/>
<line x1="720.62" y1="655.33" x2="729.92" y2="659.73" stroke="#262626" stroke-width="1.2"/>
<line x1="683.70" y1="677.38" x2="693.00" y2="681.78" stroke="#262626" stroke-width="1.2"/>
<line x1="463.17" y1="584.75" x2="453.87" y2="589.95" stroke="#262626" stroke-width="1.2"/>
<line x1="507.28" y1="603.28" x2="497.98" y2="608.48" stroke="#262626" stroke-width="1.2"/>
<line x1="551.38" y1="621.80" x2="542.08" y2="627.00" stroke="#262626" stroke-width="1.2"/>
<line x1="595.49" y1="640.33" x2="586.19" y2="645.53" stroke="#262626" stroke-width="1.2"/>
<line x1="639.60" y1="658.86" x2="630.30" y2="664.06" stroke="#262626" stroke-width="1.2"/>
<line x1="683.70" y1="677.38" x2="674.40" y2="682.58" stroke="#262626" stroke-width="1.2"/>
<line x1="463.17" y1="584.75" x2="453.97" y2="580.45" stroke="#262626" stroke-width="1.2"/>
<line x1="463.17" y1="572.64" x2="453.97" y2="568.34" stroke="#262626" stroke-width="1.2"/>
<line x1="463.17" y1="560.54" x2="453.97" y2="556.24" stroke="#262626" stroke-width="1.2"/></svg>
<div class="t" style="left:1031.035px;top:487.09px;font-size:12px;line-height:12px;font-weight:normal;color:#262626;will-change:transform;">0</div>
<div class="t" style="left:994.1202000000001px;top:509.15px;font-size:12px;line-height:12px;font-weight:normal;color:#262626;will-change:transform;">0.2</div>
<div class="t" style="left:957.2054px;top:531.21px;font-size:12px;line-height:12px;font-weight:normal;color:#262626;will-change:transform;">0.4</div>
<div class="t" style="left:920.2906px;top:553.27px;font-size:12px;line-height:12px;font-weight:normal;color:#262626;will-change:transform;">0.6</div>
<div class="t" style="left:883.3758px;top:575.33px;font-size:12px;line-height:12px;font-weight:normal;color:#262626;will-change:transform;">0.8</div>
<div class="t" style="left:846.461px;top:597.39px;font-size:12px;line-height:12px;font-weight:normal;color:#262626;will-change:transform;">1</div>
<div class="t" style="left:809.5462px;top:619.45px;font-size:12px;line-height:12px;font-weight:normal;color:#262626;will-change:transform;">1.2</div>
<div class="t" style="left:772.6314px;top:641.51px;font-size:12px;line-height:12px;font-weight:normal;color:#262626;will-change:transform;">1.4</div>
<div class="t" style="left:735.7166px;top:663.57px;font-size:12px;line-height:12px;font-weight:normal;color:#262626;will-change:transform;">1.6</div>
<div class="t" style="left:698.8018000000001px;top:685.63px;font-size:12px;line-height:12px;font-weight:normal;color:#262626;will-change:transform;">1.8</div>
<div class="t" style="left:48.66980000000001px;width:400px;text-align:right;top:594.99px;font-size:12px;line-height:12px;font-weight:normal;color:#262626;will-change:transform;">0</div>
<div class="t" style="left:92.77620000000002px;width:400px;text-align:right;top:613.52px;font-size:12px;line-height:12px;font-weight:normal;color:#262626;will-change:transform;">0.2</div>
<div class="t" style="left:136.88260000000002px;width:400px;text-align:right;top:632.05px;font-size:12px;line-height:12px;font-weight:normal;color:#262626;will-change:transform;">0.4</div>
<div class="t" style="left:180.98900000000003px;width:400px;text-align:right;top:650.57px;font-size:12px;line-height:12px;font-weight:normal;color:#262626;will-change:transform;">0.6</div>
<div class="t" style="left:225.09540000000004px;width:400px;text-align:right;top:669.10px;font-size:12px;line-height:12px;font-weight:normal;color:#262626;will-change:transform;">0.8</div>
<div class="t" style="left:269.20180000000005px;width:400px;text-align:right;top:687.63px;font-size:12px;line-height:12px;font-weight:normal;color:#262626;will-change:transform;">1</div>
<div class="t" style="left:47.16980000000001px;width:400px;text-align:right;top:573.89px;font-size:12px;line-height:12px;font-weight:normal;color:#262626;will-change:transform;">0</div>
<div class="t" style="left:47.16980000000001px;width:400px;text-align:right;top:561.79px;font-size:12px;line-height:12px;font-weight:normal;color:#262626;will-change:transform;">0.05</div>
<div class="t" style="left:47.16980000000001px;width:400px;text-align:right;top:549.68px;font-size:12px;line-height:12px;font-weight:normal;color:#262626;will-change:transform;">0.1</div>
<div class="t" style="left:540.2px;width:400px;text-align:center;top:343.30px;font-size:15px;line-height:15px;font-weight:bold;color:#1a1a1a;letter-spacing:-0.3px;will-change:transform;">Pack1 (Pack)</div>
<div class="t" style="left:810.8px;top:656.20px;font-size:15px;line-height:15px;font-weight:normal;color:#262626;letter-spacing:-0.17px;will-change:transform;">x: Forward direction</div>
<div class="t" style="left:464.6px;top:682.10px;font-size:15px;line-height:15px;font-weight:normal;color:#262626;letter-spacing:-0.19px;will-change:transform;">y: Lateral direction</div>
<svg style="position:absolute;left:0;top:0" width="1454" height="892"><text transform="translate(414.7,573.3) rotate(-90)" text-anchor="middle" font-family="Liberation Sans" font-size="15" letter-spacing="-0.18" fill="#262626">z: Vertical direction</text></svg>
<div style="position:absolute;left:0px;top:0px;width:1454px;height:1px;background:#6f6f6f;"></div>
<div style="position:absolute;left:0px;top:891px;width:1454px;height:1px;background:#6f6f6f;"></div>
<div style="position:absolute;left:0px;top:0px;width:1px;height:892px;background:#6f6f6f;"></div>
<div style="position:absolute;left:1453px;top:0px;width:1px;height:892px;background:#6f6f6f;"></div>
</body></html>
